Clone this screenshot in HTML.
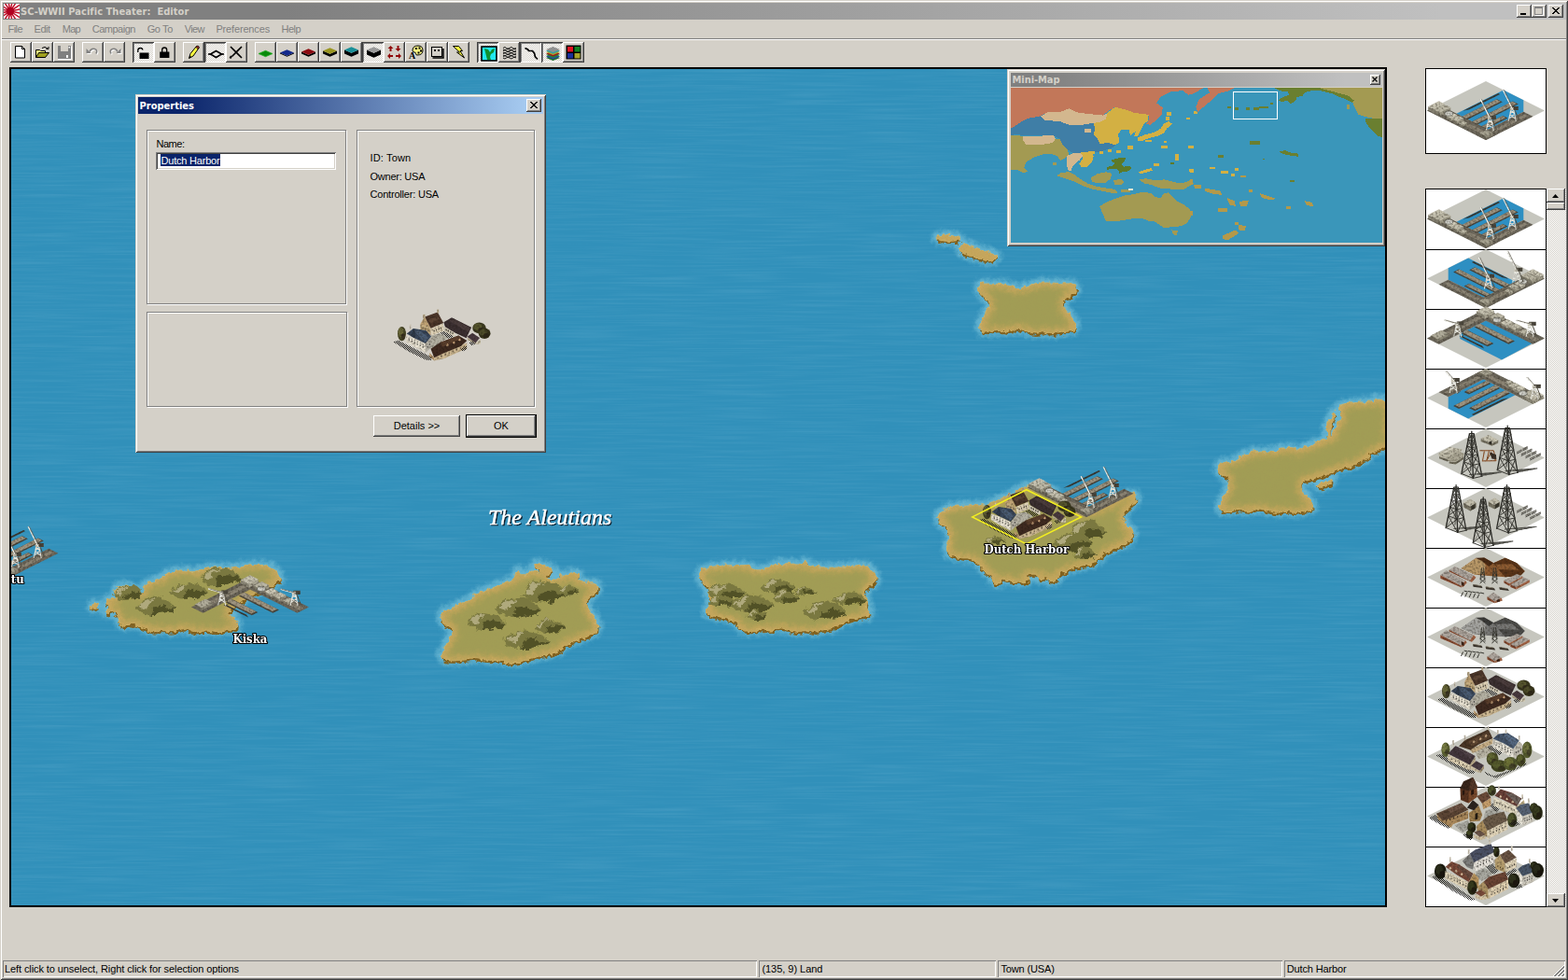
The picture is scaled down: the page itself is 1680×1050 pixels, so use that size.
<!DOCTYPE html><html><head><meta charset="utf-8"><title>SC-WWII Pacific Theater: Editor</title><style>
*{box-sizing:border-box;margin:0;padding:0}
html,body{width:1680px;height:1050px;overflow:hidden;background:#d4d0c8}
body{position:relative;font-family:"Liberation Sans","DejaVu Sans",sans-serif;font-size:11px;color:#000;line-height:13px}
.bd{font-family:"DejaVu Sans Condensed","DejaVu Sans","Liberation Sans",sans-serif;font-weight:bold}
.abs{position:absolute}
.t{position:absolute;white-space:nowrap;line-height:13px;height:13px}
.ui{font-family:"Liberation Sans","DejaVu Sans",sans-serif;font-size:11px}
#titlebar{left:3px;top:3px;width:1675px;height:18px;background:linear-gradient(90deg,#808080 0%,#808080 18%,#c0c0c0 92%,#c0c0c0 100%)}
.cap{color:#d4d0c8}
.btn{position:absolute;background:#d4d0c8;box-shadow:inset -1px -1px 0 #404040,inset 1px 1px 0 #fff,inset -2px -2px 0 #808080}
.tb{position:absolute;top:45px;width:23px;height:22px;background:#d4d0c8;box-shadow:inset -1px -1px 0 #404040,inset 1px 1px 0 #fff,inset -2px -2px 0 #808080}
.tb.dn{background-color:#e9e7e3;background-image:repeating-conic-gradient(#fff 0% 25%,#d4d0c8 0% 50%);background-size:2px 2px;box-shadow:inset 1px 1px 0 #404040,inset -1px -1px 0 #fff,inset 2px 2px 0 #808080}
.tb svg{position:absolute;left:0;top:0}
.sunk{position:absolute;box-shadow:inset 1px 1px 0 #808080,inset -1px -1px 0 #fff}
.etch{position:absolute;border:1px solid #808080;box-shadow:1px 1px 0 #fff,inset 1px 1px 0 #fff}
.menu span{position:absolute;top:25px;color:#808080;white-space:nowrap}
</style></head><body>
<div class="abs" style="left:0;top:0;width:1680px;height:1050px;box-shadow:inset 1px 1px 0 #d4d0c8,inset -1px -1px 0 #404040,inset 2px 2px 0 #fff,inset -2px -2px 0 #808080"></div>
<div id="titlebar" class="abs"></div>
<svg class="abs" style="left:4px;top:4px" width="17" height="16" viewBox="0 0 17 16"><rect width="17" height="16" fill="#fff"/>
<g stroke="#c0102a" stroke-width="1.5"><line x1="7" y1="8" x2="22.7" y2="11.2"/><line x1="7" y1="8" x2="20.3" y2="16.9"/><line x1="7" y1="8" x2="15.8" y2="21.3"/><line x1="7" y1="8" x2="10.1" y2="23.7"/><line x1="7" y1="8" x2="3.8" y2="23.7"/><line x1="7" y1="8" x2="-1.9" y2="21.3"/><line x1="7" y1="8" x2="-6.3" y2="16.8"/><line x1="7" y1="8" x2="-8.7" y2="11.1"/><line x1="7" y1="8" x2="-8.7" y2="4.8"/><line x1="7" y1="8" x2="-6.3" y2="-0.9"/><line x1="7" y1="8" x2="-1.8" y2="-5.3"/><line x1="7" y1="8" x2="3.9" y2="-7.7"/><line x1="7" y1="8" x2="10.2" y2="-7.7"/><line x1="7" y1="8" x2="15.9" y2="-5.3"/><line x1="7" y1="8" x2="20.3" y2="-0.8"/><line x1="7" y1="8" x2="22.7" y2="4.9"/></g><circle cx="7" cy="8" r="4.2" fill="#b00020"/></svg>
<div class="t cap bd" id="wtitle" style="letter-spacing:0.048px;left:22px;top:6px">SC-WWII Pacific Theater:&nbsp; Editor</div>
<div class="btn" style="left:1625px;top:5px;width:16px;height:14px"></div>
<div class="btn" style="left:1641px;top:5px;width:16px;height:14px"></div>
<div class="btn" style="left:1659px;top:5px;width:16px;height:14px"></div>
<div class="abs" style="left:1629px;top:14px;width:6px;height:2px;background:#000"></div>
<div class="abs" style="left:1644px;top:7px;width:9px;height:9px;border:1px solid #808080;border-top-width:2px;box-shadow:1px 1px 0 #fff"></div>
<svg class="abs" style="left:1659px;top:5px" width="16" height="14"><path d="M4 3l7 7M5 3l7 7M11 3l-7 7M12 3l-7 7" stroke="#000" stroke-width="1" fill="none" shape-rendering="crispEdges"/></svg>
<div class="menu">
<span id="m0" style="letter-spacing:-0.559px;left:8.5px">File</span>
<span id="m1" style="letter-spacing:-0.467px;left:36.6px">Edit</span>
<span id="m2" style="letter-spacing:-0.702px;left:66.7px">Map</span>
<span id="m3" style="letter-spacing:-0.480px;left:98.7px">Campaign</span>
<span id="m4" style="letter-spacing:-0.371px;left:157.7px">Go To</span>
<span id="m5" style="letter-spacing:-0.589px;left:197.7px">View</span>
<span id="m6" style="letter-spacing:-0.156px;left:231.4px">Preferences</span>
<span id="m7" style="letter-spacing:-0.531px;left:301.5px">Help</span>
</div>
<div class="abs" style="left:2px;top:41px;width:1676px;height:1px;background:#808080"></div>
<div class="abs" style="left:2px;top:42px;width:1676px;height:1px;background:#fff"></div>
<div class="tb" style="left:11px"><svg width="23" height="22" viewBox="0 0 23 22"><path d="M5.5 4.5h7l3 3v9.5h-10z" fill="#fff" stroke="#000"/><path d="M12.5 4.5v3h3" fill="none" stroke="#000"/></svg></div>
<div class="tb" style="left:34px"><svg width="23" height="22" viewBox="0 0 23 22"><path d="M4.500 8.5h4l1 1h5v7h-10z" fill="#ffff80" stroke="#000" stroke-width="1"/><path d="M4.500 16.5l3-5h11l-4 5z" fill="#a0a020" stroke="#000" stroke-width="1"/><path d="M11 6.500q3-2.500 6 0.500" fill="none" stroke="#000"/><path d="M15.500 7.500h2.500v-2.500" fill="none" stroke="#000"/></svg></div>
<div class="tb" style="left:57px"><svg width="23" height="22" viewBox="0 0 23 22"><rect x="5" y="4" width="14" height="14" fill="#808080"/><rect x="8" y="4" width="8" height="6" fill="#d4d0c8"/><rect x="9" y="13" width="7" height="5" fill="#808080"/><rect x="14" y="14" width="2" height="3" fill="#fff"/><path d="M5 18.500h14.500v-14" stroke="#fff" fill="none"/><rect x="16.500" y="5" width="1.500" height="1.500" fill="#fff"/></svg></div>
<div class="tb" style="left:88px"><svg width="23" height="22" viewBox="0 0 23 22"><g transform="translate(1,1)"><path d="M8 10.5q1.500-4 5.500-3q3.500 1.200 1.500 5" fill="none" stroke="#fff" stroke-width="1.600"/><path d="M4.500 7l5 5h-5z" fill="#fff"/></g><path d="M8 10.5q1.500-4 5.500-3q3.500 1.200 1.500 5" fill="none" stroke="#808080" stroke-width="1.600"/><path d="M4.500 7l5 5h-5z" fill="#808080"/></svg></div>
<div class="tb" style="left:111px"><svg width="23" height="22" viewBox="0 0 23 22"><g transform="translate(1,1)"><path d="M15 10.5q-1.500-4-5.500-3q-3.500 1.200-1.500 5" fill="none" stroke="#fff" stroke-width="1.600"/><path d="M18.500 7l-5 5h5z" fill="#fff"/></g><path d="M15 10.5q-1.500-4-5.500-3q-3.500 1.200-1.500 5" fill="none" stroke="#808080" stroke-width="1.600"/><path d="M18.500 7l-5 5h5z" fill="#808080"/></svg></div>
<div class="tb dn" style="left:142px"><svg style="left:1px;top:1px" width="23" height="22" viewBox="0 0 23 22"><path d="M4.800 10v-2q0-2.500 2.500-2.500t2.500 2" fill="none" stroke="#000" stroke-width="1.300"/><rect x="6.500" y="10.500" width="10" height="6.500" fill="#000"/></svg></div>
<div class="tb" style="left:165px"><svg width="23" height="22" viewBox="0 0 23 22"><path d="M8.700 11v-2.500q0-2.500 2.500-2.500t2.500 2.500v2.500" fill="none" stroke="#000" stroke-width="1.300"/><rect x="6.200" y="10.500" width="10.200" height="6.500" fill="#000"/></svg></div>
<div class="tb" style="left:196px"><svg width="23" height="22" viewBox="0 0 23 22"><path d="M6.500 17.500l1.500-5 6.500-8 2.500 2-6 8.500z" fill="#ffff40" stroke="#000" stroke-width="1"/><path d="M14 5.500l1.500-1.500q1.500 0 2 2l-1.500 1.500z" fill="#a03030" stroke="#000" stroke-width=".8"/><path d="M6.500 17.500l2.500-1.500-1.500-1.500z" fill="#000"/></svg></div>
<div class="tb dn" style="left:219px"><svg style="left:1px;top:1px" width="23" height="22" viewBox="0 0 23 22"><path d="M3 12h3M17 12h3" stroke="#000" stroke-width="1.500"/><path d="M5.500 12l6-3.500 6 3.500-6 3.500z" fill="none" stroke="#000" stroke-width="1.600"/></svg></div>
<div class="tb" style="left:242px"><svg width="23" height="22" viewBox="0 0 23 22"><path d="M5 5l12 12M17 5l-10.500 10.500" stroke="#000" stroke-width="1.600" fill="none"/><path d="M6 15l-1.500 2.500" stroke="#000" stroke-width="2.200"/></svg></div>
<div class="tb" style="left:273px"><svg width="23" height="22" viewBox="0 0 23 22"><path d="M4.0 12.5L11.5 9.3L19.0 12.5L11.5 15.7Z" fill="#0a8a0a" stroke="#28b028" stroke-width="0.8"/></svg></div>
<div class="tb" style="left:296px"><svg width="23" height="22" viewBox="0 0 23 22"><path d="M4.0 11.5L11.5 14.7L19.0 11.5V12.5L11.5 15.7L4.0 12.5Z" fill="#000"/><path d="M4.0 11.5L11.5 8.3L19.0 11.5L11.5 14.7Z" fill="#142a8c"/></svg></div>
<div class="tb" style="left:319px"><svg width="23" height="22" viewBox="0 0 23 22"><path d="M4.0 10.5L11.5 13.7L19.0 10.5V12.5L11.5 15.7L4.0 12.5Z" fill="#000"/><path d="M4.0 10.5L11.5 7.3L19.0 10.5L11.5 13.7Z" fill="#8c0c12"/></svg></div>
<div class="tb" style="left:342px"><svg width="23" height="22" viewBox="0 0 23 22"><path d="M4.0 9.5L11.5 12.7L19.0 9.5V12.5L11.5 15.7L4.0 12.5Z" fill="#000"/><path d="M4.0 9.5L11.5 6.3L19.0 9.5L11.5 12.7Z" fill="#9a9620"/></svg></div>
<div class="tb" style="left:365px"><svg width="23" height="22" viewBox="0 0 23 22"><path d="M4.0 8.5L11.5 11.7L19.0 8.5V12.5L11.5 15.7L4.0 12.5Z" fill="#000"/><path d="M4.0 8.5L11.5 5.3L19.0 8.5L11.5 11.7Z" fill="#1a9098"/></svg></div>
<div class="tb dn" style="left:388px"><svg style="left:1px;top:1px" width="23" height="22" viewBox="0 0 23 22"><path d="M4.0 7.5L11.5 10.7L19.0 7.5V12.5L11.5 15.7L4.0 12.5Z" fill="#000"/><path d="M4.0 7.5L11.5 4.3L19.0 7.5L11.5 10.7Z" fill="#9a9a9a"/></svg></div>
<div class="tb" style="left:411px"><svg width="23" height="22" viewBox="0 0 23 22"><g fill="#900a0a"><path d="M7.500 4l3 3h-2v3h-2v-3h-2z"/><path d="M15.500 10l3-3h-2v-3h-2v3h-2z"/><path d="M4 15l3-3v2h3v2h-3v2z"/><path d="M19 15l-3-3v2h-3v2h3v2z"/></g></svg></div>
<div class="tb" style="left:434px"><svg width="23" height="22" viewBox="0 0 23 22"><path d="M8 9q0-5 6-5q5 0 5 5q0 5-6 5q-1.500 0-1.500-1.500q0-1.500-1.500-1.500q-2 0-2-2z" fill="#f4f080" stroke="#000" stroke-width="1"/><g fill="#000"><rect x="11" y="6" width="2" height="2"/><rect x="14.500" y="5.500" width="2" height="2"/><rect x="16" y="8.500" width="2" height="2"/><rect x="13.500" y="10.500" width="2" height="2"/></g><text x="4" y="18" font-family="Liberation Serif,serif" font-weight="bold" font-size="10" fill="#000">A</text></svg></div>
<div class="tb" style="left:457px"><svg width="23" height="22" viewBox="0 0 23 22"><rect x="5.500" y="5.500" width="11" height="10" fill="#d4d0c8" stroke="#000"/><path d="M6.500 17h11.500v-10" fill="none" stroke="#000" stroke-width="1.500"/><path d="M8 8l2 2m0-2l-2 2M12 8l2 2m0-2l-2 2" stroke="#000" stroke-width=".9"/></svg></div>
<div class="tb" style="left:480px"><svg width="23" height="22" viewBox="0 0 23 22"><path d="M5.500 4.500h6l4 5h-2.500l4.500 7.500-8-6h3z" fill="#ffff40" stroke="#000" stroke-width="1"/></svg></div>
<div class="tb dn" style="left:511px"><svg style="left:1px;top:1px" width="23" height="22" viewBox="0 0 23 22"><rect x="4" y="4" width="16" height="15" fill="#20e8f0" stroke="#000" stroke-width="1.600"/><path d="M7 6l4 1 2 3 2-3 3-1-1 4-3 2-1 3 1 3h-4l-1-4-1-4z" fill="#109030"/></svg></div>
<div class="tb" style="left:534px"><svg width="23" height="22" viewBox="0 0 23 22"><g fill="none" stroke="#000" stroke-width=".9"><path d="M5 6.500q2-2 3.500 0t3.500 0 3.500 0 3.500 0M5 9.500q2-2 3.500 0t3.500 0 3.500 0 3.500 0M5 12.500q2-2 3.500 0t3.500 0 3.500 0 3.500 0M5 15.500q2-2 3.500 0t3.500 0 3.500 0 3.500 0M5 8q2 2 3.500 0t3.500 0 3.500 0 3.500 0M5 11q2 2 3.500 0t3.500 0 3.500 0 3.500 0M5 14q2 2 3.500 0t3.500 0 3.500 0 3.500 0M5 17q2 2 3.500 0t3.500 0 3.500 0 3.500 0"/></g></svg></div>
<div class="tb dn" style="left:557px"><svg style="left:1px;top:1px" width="23" height="22" viewBox="0 0 23 22"><path d="M4.500 5.500l3 1.500 1 1.500h4l2 2.500 1 4 2.500 2.500" fill="none" stroke="#000" stroke-width="1.700"/></svg></div>
<div class="tb dn" style="left:580px"><svg style="left:1px;top:1px" width="23" height="22" viewBox="0 0 23 22"><path d="M4 16l7.500-3 7.500 3-7.500 3z" fill="#207028"/><path d="M4 14.5l7.500-3 7.500 3-7.500 3z" fill="#2848a0"/><path d="M4 13l7.500-3 7.500 3-7.500 3z" fill="#208838"/><path d="M4 11.5l7.500-3 7.500 3-7.500 3z" fill="#a01818"/><path d="M4 10l7.500-3 7.500 3-7.500 3z" fill="#a8a030"/><path d="M4 8.5l7.500-3 7.500 3-7.500 3z" fill="#30a0a8"/><path d="M4 7l7.500-3 7.500 3-7.500 3z" fill="#909090"/></svg></div>
<div class="tb" style="left:603px"><svg width="23" height="22" viewBox="0 0 23 22"><rect x="3.500" y="3.500" width="16" height="15" fill="#000"/><rect x="5" y="5" width="6" height="5.500" fill="#e01020"/><rect x="12.500" y="5" width="6" height="5.500" fill="#108020"/><rect x="5" y="12" width="6" height="5.500" fill="#1a2f9a"/><rect x="12.500" y="12" width="6" height="5.500" fill="#a8a428"/></svg></div>
<div class="abs" style="left:10px;top:72px;width:1476px;height:900px;background:#000"></div>
<svg class="abs" style="left:12px;top:74px" width="1472" height="896" viewBox="12 74 1472 896">
<defs>
<filter id="fo" x="0" y="0" width="100%" height="100%"><feTurbulence type="fractalNoise" baseFrequency="0.012 0.45" numOctaves="2" seed="7"/><feColorMatrix values="0 0 0 0 .75  0 0 0 0 .9  0 0 0 0 1  1.2 1.2 0 0 -1.0"/></filter>
<filter id="fo2" x="0" y="0" width="100%" height="100%"><feTurbulence type="fractalNoise" baseFrequency="0.015 0.5" numOctaves="2" seed="23"/><feColorMatrix values="0 0 0 0 .05  0 0 0 0 .3  0 0 0 0 .5  1.2 1.2 0 0 -1.0"/></filter>
<filter id="halo" x="-20%" y="-20%" width="140%" height="140%"><feGaussianBlur stdDeviation="2.4"/></filter>
<filter id="inner" x="-10%" y="-10%" width="120%" height="120%"><feMorphology operator="erode" radius="4"/><feGaussianBlur stdDeviation="3.2"/></filter>
<filter id="grain" x="0" y="0" width="100%" height="100%"><feTurbulence type="fractalNoise" baseFrequency="0.7 0.9" numOctaves="2" seed="3" result="n"/><feColorMatrix in="n" values="0 0 0 0 0.35  0 0 0 0 0.28  0 0 0 0 0.1  0 0 0 .9 -.38" result="g"/><feComposite in="g" in2="SourceGraphic" operator="in"/></filter>
<filter id="rag" filterUnits="userSpaceOnUse" x="12" y="74" width="1472" height="896"><feTurbulence type="fractalNoise" baseFrequency="0.2" numOctaves="2" seed="4" result="t"/><feDisplacementMap in="SourceGraphic" in2="t" scale="6.5" xChannelSelector="R" yChannelSelector="G"/></filter>
<filter id="hb" x="-30%" y="-30%" width="160%" height="160%"><feGaussianBlur stdDeviation="1.3"/></filter>
<filter id="hrough" x="-20%" y="-20%" width="140%" height="140%"><feTurbulence type="fractalNoise" baseFrequency="0.09" numOctaves="2" seed="11" result="t"/><feDisplacementMap in="SourceGraphic" in2="t" scale="6"/><feGaussianBlur stdDeviation=".55"/></filter>
</defs>
<rect x="12" y="74" width="1472" height="896" fill="#3190ba"/>
<rect x="12" y="74" width="1472" height="896" filter="url(#fo)" opacity=".09"/>
<rect x="12" y="74" width="1472" height="896" filter="url(#fo2)" opacity=".09"/>
<g filter="url(#rag)">
<g filter="url(#halo)" fill="#86cbe0" stroke="#86cbe0" stroke-width="9.5" stroke-linejoin="round" opacity=".62">
<path d="M113.3 645.0C113.4 643.3 115.8 642.7 117.9 641.9C120.0 641.1 124.0 642.0 124.9 640.4C125.8 638.8 121.5 635.8 122.6 633.4C123.7 631.0 127.6 627.9 131.1 627.2C134.6 626.5 138.5 627.9 141.9 629.5C145.3 631.1 147.3 635.0 149.6 635.7C151.9 636.4 153.2 635.2 154.3 633.4C155.4 631.6 153.3 627.8 155.8 625.7C158.3 623.6 163.9 623.8 168.2 621.8C172.5 619.8 174.2 616.8 179.0 614.8C183.8 612.8 189.1 611.4 194.5 611.0C199.9 610.6 203.1 613.1 208.5 612.5C213.9 611.9 217.7 608.6 223.9 607.9C230.1 607.2 235.4 608.9 242.5 608.6C249.6 608.3 255.5 606.9 262.6 606.3C269.7 605.7 275.8 605.1 281.2 605.5C286.6 605.9 288.9 606.7 292.0 608.6C295.1 610.5 296.8 613.2 298.2 615.6C299.6 618.0 300.6 619.8 299.8 621.8C299.0 623.8 296.7 624.7 293.6 626.4C290.5 628.1 287.0 629.1 282.7 631.1C278.4 633.1 274.9 634.8 270.4 637.3C265.9 639.8 262.8 641.3 258.0 645.0C253.2 648.7 245.1 654.3 244.0 657.4C242.9 660.5 249.9 659.2 251.8 662.0C253.7 664.8 255.5 670.5 254.1 672.9C252.7 675.3 247.8 674.4 244.0 675.2C240.2 676.0 237.7 677.4 233.2 677.5C228.7 677.6 223.8 676.0 219.3 676.0C214.8 676.0 212.5 677.9 208.5 677.5C204.5 677.1 201.9 673.7 197.6 673.6C193.3 673.5 190.0 676.4 185.2 676.7C180.4 677.0 175.3 675.2 171.3 675.2C167.3 675.2 167.3 677.3 163.6 676.7C159.9 676.1 155.2 673.7 151.2 672.1C147.2 670.5 145.3 668.3 141.9 668.2C138.5 668.1 135.1 671.6 132.6 671.3C130.1 671.0 129.1 668.7 128.0 666.7C126.9 664.7 127.8 662.8 126.4 660.5C125.0 658.2 122.0 654.9 120.2 654.3C118.4 653.7 117.7 657.1 116.4 657.4C115.1 657.7 113.2 656.9 113.3 655.8C113.4 654.7 117.1 653.2 117.1 651.2C117.1 649.2 113.2 646.7 113.3 645.0Z"/>
<path d="M97.8 648.9C97.9 648.0 99.1 647.2 100.1 646.9C101.1 646.6 102.4 646.8 103.2 647.3C104.0 647.8 104.6 648.7 104.5 649.6C104.4 650.5 103.4 651.6 102.4 652.0C101.4 652.4 100.1 652.6 99.3 652.0C98.5 651.4 97.7 649.8 97.8 648.9Z"/>
<path d="M472.9 660.0C473.2 658.0 472.7 656.6 475.0 655.0C477.3 653.4 482.4 652.8 485.7 651.4C489.0 650.0 489.5 648.9 492.9 647.1C496.3 645.3 500.6 643.6 504.3 641.4C508.0 639.2 508.7 637.1 512.9 635.0C517.1 632.9 521.9 632.0 527.1 630.0C532.3 628.0 537.2 626.0 541.4 624.3C545.6 622.6 547.9 622.8 550.0 620.7C552.1 618.6 551.9 614.7 552.9 612.9C553.9 611.1 554.4 610.1 555.7 610.7C557.0 611.3 557.4 616.1 560.0 616.4C562.6 616.7 566.6 612.6 570.0 612.1C573.4 611.6 578.1 614.8 578.6 613.6C579.1 612.4 573.4 607.5 572.9 605.7C572.4 603.9 573.6 603.5 575.7 603.6C577.8 603.7 581.7 605.6 584.3 606.4C586.9 607.2 588.8 606.6 590.0 607.9C591.2 609.2 591.5 611.9 590.7 613.6C589.9 615.3 586.0 615.7 585.7 617.1C585.4 618.5 586.7 620.9 589.3 621.4C591.9 621.9 598.2 621.2 600.0 620.0C601.8 618.8 598.8 615.5 599.3 615.0C599.8 614.5 601.2 616.8 602.9 617.1C604.6 617.4 606.5 617.0 608.6 616.4C610.7 615.8 612.3 614.0 614.3 613.6C616.3 613.2 618.3 612.9 619.3 614.3C620.3 615.7 618.3 619.6 620.0 621.4C621.7 623.2 625.1 623.5 628.6 624.3C632.1 625.1 637.2 624.1 639.3 625.7C641.4 627.3 640.9 630.8 640.0 632.9C639.1 635.0 636.4 635.0 634.3 637.1C632.2 639.2 629.4 641.7 628.6 644.3C627.8 646.9 629.0 648.9 630.0 651.4C631.0 653.9 632.5 654.7 634.3 657.9C636.1 661.1 639.2 665.1 640.0 668.6C640.8 672.1 641.0 674.5 638.6 677.1C636.2 679.7 631.0 681.2 627.1 682.9C623.2 684.6 621.0 684.8 617.1 686.4C613.2 688.0 608.8 689.4 605.7 691.4C602.6 693.4 603.4 695.3 600.0 697.1C596.6 698.9 592.1 700.1 587.1 701.4C582.1 702.7 577.6 703.1 572.9 704.3C568.2 705.5 565.6 706.7 561.4 707.9C557.2 709.1 554.7 710.7 550.0 710.7C545.3 710.7 540.9 708.6 535.7 707.9C530.5 707.2 526.1 707.5 521.4 707.1C516.7 706.7 514.5 705.7 510.0 705.7C505.5 705.7 501.8 706.7 497.1 707.1C492.4 707.5 488.2 708.0 484.3 707.9C480.4 707.8 477.8 707.6 475.7 706.4C473.6 705.2 472.6 703.9 472.9 701.4C473.2 698.9 475.5 696.0 477.1 692.9C478.7 689.8 479.8 687.5 481.4 684.3C483.0 681.1 486.2 678.3 485.7 675.7C485.2 673.1 480.8 671.8 478.6 670.0C476.4 668.2 474.6 667.5 473.6 665.7C472.6 663.9 472.6 662.0 472.9 660.0Z"/>
<path d="M749.3 617.1C749.6 615.0 749.9 611.8 752.9 610.0C755.9 608.2 759.9 607.9 765.7 607.1C771.5 606.3 777.5 605.8 784.3 605.7C791.1 605.6 798.2 605.5 802.9 606.4C807.6 607.3 806.6 610.2 810.0 610.7C813.4 611.2 817.7 610.3 821.4 609.3C825.1 608.3 827.5 606.2 830.0 605.0C832.5 603.8 833.8 602.6 835.0 602.9C836.2 603.2 834.7 606.3 836.4 606.4C838.1 606.5 840.8 603.9 844.3 603.6C847.8 603.3 852.2 605.4 855.7 605.0C859.2 604.6 861.6 601.1 863.6 601.4C865.6 601.7 863.4 605.2 866.4 606.4C869.4 607.6 873.6 607.6 880.0 607.9C886.4 608.2 894.1 608.3 901.4 607.9C908.7 607.5 914.5 605.7 920.0 605.7C925.5 605.7 928.5 606.3 931.4 607.9C934.3 609.5 934.3 612.3 935.7 614.3C937.1 616.3 939.2 616.5 939.3 618.6C939.4 620.7 938.4 623.5 936.4 625.7C934.4 627.9 930.4 628.6 928.6 630.7C926.8 632.8 926.3 634.6 926.4 637.1C926.5 639.6 928.9 641.7 929.3 644.3C929.7 646.9 928.1 649.3 928.6 651.4C929.1 653.5 931.8 654.1 932.1 655.7C932.4 657.3 932.5 658.8 930.0 660.0C927.5 661.2 922.5 661.3 918.6 662.1C914.7 662.9 912.3 663.0 908.6 664.3C904.9 665.6 901.8 667.6 898.6 669.3C895.4 671.0 894.8 672.6 891.4 673.6C888.0 674.6 883.7 674.2 880.0 675.0C876.3 675.8 874.5 677.8 871.4 677.9C868.3 678.0 866.0 675.8 862.9 675.7C859.8 675.6 857.7 677.2 854.3 677.1C850.9 677.0 847.7 675.8 844.3 675.0C840.9 674.2 838.9 672.9 835.7 672.9C832.5 672.9 830.8 674.7 827.1 675.0C823.4 675.3 819.9 674.0 815.7 674.3C811.5 674.6 808.2 676.4 804.3 676.4C800.4 676.4 796.9 675.7 794.3 674.3C791.7 672.9 792.1 670.4 790.0 668.6C787.9 666.8 786.6 665.6 782.9 664.3C779.2 663.0 774.5 662.6 770.0 661.4C765.5 660.2 761.0 659.5 758.6 657.9C756.2 656.3 756.6 654.9 757.1 652.9C757.6 650.9 760.9 649.5 761.4 647.1C761.9 644.7 760.6 642.1 760.0 640.0C759.4 637.9 757.8 637.5 757.9 635.7C758.0 633.9 761.4 631.7 760.7 630.0C760.0 628.3 756.0 628.0 754.3 626.4C752.6 624.8 752.3 623.1 751.4 621.4C750.5 619.7 749.0 619.2 749.3 617.1Z"/>
<path d="M1005.2 553.1C1006.0 551.4 1007.0 548.8 1009.8 547.0C1012.6 545.2 1015.2 544.3 1020.5 543.2C1025.8 542.1 1032.4 541.3 1038.8 540.9C1045.2 540.5 1051.0 541.3 1055.5 540.9C1060.0 540.5 1057.8 540.9 1063.1 538.7C1068.4 536.5 1077.2 532.2 1084.5 528.8C1091.8 525.4 1094.9 520.5 1102.7 519.9C1110.5 519.3 1119.8 522.4 1127.1 525.7C1134.4 529.0 1136.7 533.7 1142.3 537.9C1147.9 542.1 1150.6 547.5 1157.6 548.6C1164.6 549.7 1172.0 547.4 1180.4 544.0C1188.8 540.6 1196.9 533.1 1203.3 530.3C1209.7 527.5 1213.1 527.4 1215.5 528.8C1217.9 530.2 1217.3 535.1 1216.2 537.9C1215.1 540.7 1211.8 541.5 1209.4 544.0C1207.0 546.5 1203.9 548.2 1203.3 551.6C1202.7 555.0 1204.4 558.9 1206.3 562.3C1208.2 565.7 1213.1 566.8 1213.9 569.9C1214.7 573.0 1213.4 576.2 1210.9 579.0C1208.4 581.8 1204.1 583.1 1200.2 585.1C1196.3 587.1 1193.2 587.7 1189.6 589.7C1186.0 591.7 1183.5 593.3 1180.4 595.8C1177.3 598.3 1177.0 601.5 1172.8 603.4C1168.6 605.3 1162.6 605.0 1157.6 606.4C1152.6 607.8 1149.6 609.3 1145.4 611.0C1141.2 612.7 1137.2 613.5 1134.7 615.6C1132.2 617.7 1133.6 621.0 1131.7 622.4C1129.8 623.8 1126.1 623.9 1124.1 623.2C1122.1 622.5 1123.0 619.0 1121.0 618.6C1119.0 618.2 1115.3 621.4 1113.4 620.9C1111.5 620.4 1112.9 616.4 1110.4 615.6C1107.9 614.8 1101.1 615.1 1099.7 616.3C1098.3 617.5 1104.9 621.0 1102.7 622.4C1100.5 623.8 1092.5 624.4 1087.5 624.0C1082.5 623.6 1078.4 620.1 1075.3 620.2C1072.2 620.3 1072.7 624.0 1070.7 624.7C1068.7 625.4 1066.3 625.4 1064.6 624.0C1062.9 622.6 1063.5 619.5 1061.6 617.1C1059.7 614.7 1056.5 613.5 1054.0 611.0C1051.5 608.5 1050.4 605.6 1047.9 603.4C1045.4 601.2 1043.9 599.9 1040.3 598.8C1036.7 597.7 1032.3 598.1 1028.1 597.3C1023.9 596.5 1019.9 596.3 1017.4 594.3C1014.9 592.3 1014.4 589.7 1014.4 586.6C1014.4 583.5 1017.1 580.8 1017.4 577.5C1017.7 574.2 1017.3 571.2 1015.9 568.4C1014.5 565.6 1011.8 564.5 1009.8 562.3C1007.8 560.1 1006.0 557.9 1005.2 556.2C1004.4 554.5 1004.4 554.8 1005.2 553.1Z"/>
<path d="M1048.7 307.0C1049.3 305.5 1049.8 304.8 1052.7 304.3C1055.6 303.8 1060.6 304.2 1064.7 304.3C1068.8 304.4 1071.4 304.4 1075.3 305.0C1079.2 305.6 1082.8 306.8 1086.0 307.7C1089.2 308.6 1090.3 309.8 1092.7 309.7C1095.1 309.6 1096.1 308.1 1099.3 307.0C1102.5 305.9 1105.6 304.4 1110.0 303.7C1114.4 303.0 1118.4 303.0 1123.3 303.0C1128.2 303.0 1131.6 303.3 1136.7 303.7C1141.8 304.1 1148.5 303.4 1151.3 305.0C1154.1 306.6 1152.7 310.1 1152.0 312.3C1151.3 314.5 1149.1 315.5 1147.3 317.0C1145.5 318.5 1143.5 318.6 1142.0 320.3C1140.5 322.0 1139.3 324.1 1139.3 326.3C1139.3 328.5 1140.5 330.0 1142.0 332.3C1143.5 334.6 1145.6 336.5 1147.3 339.0C1149.0 341.5 1150.7 343.0 1151.3 345.7C1151.9 348.4 1152.2 352.0 1150.7 353.7C1149.2 355.4 1146.4 354.6 1143.3 355.0C1140.2 355.4 1137.2 355.2 1134.0 355.7C1130.8 356.2 1128.9 357.7 1126.0 357.7C1123.1 357.7 1120.9 355.8 1118.0 355.7C1115.1 355.6 1113.2 357.0 1110.0 357.0C1106.8 357.0 1103.6 356.4 1100.7 355.7C1097.8 355.0 1096.2 353.6 1094.0 353.0C1091.8 352.4 1090.9 351.9 1088.7 352.3C1086.5 352.7 1084.7 354.6 1082.0 355.0C1079.3 355.4 1077.2 354.3 1074.0 354.3C1070.8 354.3 1067.9 354.6 1064.7 355.0C1061.5 355.4 1059.3 356.5 1056.7 356.3C1054.1 356.1 1051.9 355.4 1050.7 353.7C1049.5 352.0 1049.4 349.5 1050.0 347.0C1050.6 344.5 1052.8 342.7 1054.0 340.3C1055.2 337.9 1055.5 336.1 1056.7 333.7C1057.9 331.3 1060.5 329.2 1060.7 327.0C1060.9 324.8 1059.5 323.7 1058.0 321.7C1056.5 319.7 1054.3 318.0 1052.7 316.3C1051.1 314.6 1050.0 314.0 1049.3 312.3C1048.6 310.6 1048.1 308.5 1048.7 307.0Z"/>
<path d="M1003.3 254.3C1003.6 253.3 1006.2 252.5 1008.7 252.1C1011.2 251.7 1013.8 252.0 1016.7 252.3C1019.6 252.6 1022.5 253.0 1024.7 253.7C1026.9 254.4 1029.0 255.3 1028.7 256.1C1028.4 256.9 1025.8 257.5 1023.3 257.9C1020.8 258.3 1018.2 258.4 1015.3 258.3C1012.4 258.2 1009.5 258.1 1007.3 257.4C1005.1 256.7 1003.0 255.3 1003.3 254.3Z"/>
<path d="M1028.7 263.7C1029.7 262.7 1031.3 261.5 1034.0 261.7C1036.7 261.9 1039.6 263.8 1043.3 265.0C1047.0 266.2 1050.1 267.1 1054.0 268.3C1057.9 269.5 1062.1 270.6 1064.7 271.7C1067.3 272.8 1067.8 273.3 1068.0 274.3C1068.2 275.3 1067.3 276.0 1066.0 277.0C1064.7 278.0 1063.6 279.6 1060.7 279.7C1057.8 279.8 1053.9 278.7 1050.0 277.7C1046.1 276.7 1042.7 275.5 1039.3 274.3C1035.9 273.1 1033.2 272.3 1031.3 271.0C1029.4 269.7 1029.2 268.3 1028.7 267.0C1028.2 265.7 1027.7 264.7 1028.7 263.7Z"/>
<path d="M1305.0 501.4C1305.3 499.0 1306.7 497.1 1310.0 495.7C1313.3 494.3 1319.0 495.0 1322.9 493.6C1326.8 492.2 1327.5 489.7 1331.4 487.9C1335.3 486.1 1340.4 484.3 1344.3 483.6C1348.2 482.9 1349.2 484.3 1352.9 484.3C1356.6 484.3 1360.1 484.4 1364.3 483.6C1368.5 482.8 1371.8 480.7 1375.7 480.0C1379.6 479.3 1383.1 479.5 1385.7 480.0C1388.3 480.5 1387.6 483.2 1390.0 482.9C1392.4 482.6 1394.7 480.2 1398.6 478.6C1402.5 477.0 1407.2 475.9 1411.4 474.3C1415.6 472.7 1418.5 471.4 1421.4 470.0C1424.3 468.6 1425.4 468.5 1427.1 466.4C1428.8 464.3 1429.6 461.1 1430.7 458.6C1431.8 456.1 1431.7 454.7 1432.9 452.9C1434.1 451.1 1436.6 450.7 1437.1 448.6C1437.6 446.5 1436.1 443.8 1435.7 441.4C1435.3 439.0 1434.2 437.3 1435.0 435.7C1435.8 434.1 1436.5 433.7 1440.0 432.9C1443.5 432.1 1449.1 431.9 1454.3 431.4C1459.5 430.9 1464.7 430.8 1468.6 430.0C1472.5 429.2 1473.4 427.4 1475.7 427.1C1478.0 426.8 1479.8 427.8 1481.4 428.6C1483.0 429.4 1483.3 430.9 1484.3 431.4C1485.3 431.9 1486.6 423.0 1487.1 431.4C1487.6 439.8 1487.6 468.4 1487.1 477.1C1486.6 485.8 1486.4 477.5 1484.3 478.6C1482.2 479.7 1478.6 481.6 1475.7 482.9C1472.8 484.2 1470.7 484.1 1468.6 485.7C1466.5 487.3 1466.1 489.8 1464.3 491.4C1462.5 493.0 1461.2 493.0 1458.6 494.3C1456.0 495.6 1453.7 497.3 1450.0 498.6C1446.3 499.9 1442.8 500.1 1438.6 501.4C1434.4 502.7 1431.3 504.1 1427.1 505.7C1422.9 507.3 1419.4 508.7 1415.7 510.0C1412.0 511.3 1410.8 511.7 1407.1 512.9C1403.4 514.1 1398.0 514.6 1395.7 516.4C1393.4 518.2 1393.8 520.4 1394.3 522.9C1394.8 525.4 1396.8 527.7 1398.6 530.0C1400.4 532.3 1403.0 532.8 1404.3 535.7C1405.6 538.6 1407.3 543.5 1405.7 545.7C1404.1 547.9 1399.6 547.2 1395.7 547.9C1391.8 548.6 1388.0 549.3 1384.3 549.3C1380.6 549.3 1378.9 547.9 1375.7 547.9C1372.5 547.9 1370.5 549.4 1367.1 549.3C1363.7 549.2 1360.8 547.9 1357.1 547.1C1353.4 546.3 1350.8 544.9 1347.1 545.0C1343.4 545.1 1340.8 547.6 1337.1 547.9C1333.4 548.2 1331.0 546.4 1327.1 546.4C1323.2 546.4 1319.4 548.0 1315.7 547.9C1312.0 547.8 1308.4 547.7 1307.1 545.7C1305.8 543.7 1307.5 540.2 1308.6 537.1C1309.7 534.0 1311.3 531.7 1312.9 528.6C1314.5 525.5 1316.6 522.9 1317.1 520.0C1317.6 517.1 1317.3 515.0 1315.7 512.9C1314.1 510.8 1310.6 510.7 1308.6 508.6C1306.6 506.5 1304.7 503.8 1305.0 501.4Z"/>
<path d="M1422.9 466.4C1422.3 464.3 1421.2 459.0 1421.7 455.7C1422.2 452.4 1423.9 451.4 1425.4 448.6C1426.9 445.8 1428.7 441.1 1429.7 440.3C1430.7 439.5 1431.5 442.0 1431.1 444.3C1430.7 446.6 1428.5 450.0 1427.4 452.9C1426.3 455.8 1425.5 457.3 1425.1 460.0C1424.7 462.7 1425.5 466.2 1425.1 467.4C1424.7 468.6 1423.5 468.5 1422.9 466.4Z"/>
<path d="M1411.4 519.3C1412.2 518.5 1416.0 518.7 1418.6 517.9C1421.2 517.1 1424.1 515.0 1425.7 514.7C1427.3 514.4 1428.2 515.4 1427.4 516.4C1426.6 517.4 1423.8 519.2 1421.4 520.3C1419.0 521.4 1416.1 522.5 1414.3 522.3C1412.5 522.1 1410.6 520.1 1411.4 519.3Z"/>
</g>
<g fill="#80601f" stroke="#80601f" stroke-width="1" transform="translate(0.6,2.4)">
<path d="M113.3 645.0C113.4 643.3 115.8 642.7 117.9 641.9C120.0 641.1 124.0 642.0 124.9 640.4C125.8 638.8 121.5 635.8 122.6 633.4C123.7 631.0 127.6 627.9 131.1 627.2C134.6 626.5 138.5 627.9 141.9 629.5C145.3 631.1 147.3 635.0 149.6 635.7C151.9 636.4 153.2 635.2 154.3 633.4C155.4 631.6 153.3 627.8 155.8 625.7C158.3 623.6 163.9 623.8 168.2 621.8C172.5 619.8 174.2 616.8 179.0 614.8C183.8 612.8 189.1 611.4 194.5 611.0C199.9 610.6 203.1 613.1 208.5 612.5C213.9 611.9 217.7 608.6 223.9 607.9C230.1 607.2 235.4 608.9 242.5 608.6C249.6 608.3 255.5 606.9 262.6 606.3C269.7 605.7 275.8 605.1 281.2 605.5C286.6 605.9 288.9 606.7 292.0 608.6C295.1 610.5 296.8 613.2 298.2 615.6C299.6 618.0 300.6 619.8 299.8 621.8C299.0 623.8 296.7 624.7 293.6 626.4C290.5 628.1 287.0 629.1 282.7 631.1C278.4 633.1 274.9 634.8 270.4 637.3C265.9 639.8 262.8 641.3 258.0 645.0C253.2 648.7 245.1 654.3 244.0 657.4C242.9 660.5 249.9 659.2 251.8 662.0C253.7 664.8 255.5 670.5 254.1 672.9C252.7 675.3 247.8 674.4 244.0 675.2C240.2 676.0 237.7 677.4 233.2 677.5C228.7 677.6 223.8 676.0 219.3 676.0C214.8 676.0 212.5 677.9 208.5 677.5C204.5 677.1 201.9 673.7 197.6 673.6C193.3 673.5 190.0 676.4 185.2 676.7C180.4 677.0 175.3 675.2 171.3 675.2C167.3 675.2 167.3 677.3 163.6 676.7C159.9 676.1 155.2 673.7 151.2 672.1C147.2 670.5 145.3 668.3 141.9 668.2C138.5 668.1 135.1 671.6 132.6 671.3C130.1 671.0 129.1 668.7 128.0 666.7C126.9 664.7 127.8 662.8 126.4 660.5C125.0 658.2 122.0 654.9 120.2 654.3C118.4 653.7 117.7 657.1 116.4 657.4C115.1 657.7 113.2 656.9 113.3 655.8C113.4 654.7 117.1 653.2 117.1 651.2C117.1 649.2 113.2 646.7 113.3 645.0Z"/>
<path d="M97.8 648.9C97.9 648.0 99.1 647.2 100.1 646.9C101.1 646.6 102.4 646.8 103.2 647.3C104.0 647.8 104.6 648.7 104.5 649.6C104.4 650.5 103.4 651.6 102.4 652.0C101.4 652.4 100.1 652.6 99.3 652.0C98.5 651.4 97.7 649.8 97.8 648.9Z"/>
<path d="M472.9 660.0C473.2 658.0 472.7 656.6 475.0 655.0C477.3 653.4 482.4 652.8 485.7 651.4C489.0 650.0 489.5 648.9 492.9 647.1C496.3 645.3 500.6 643.6 504.3 641.4C508.0 639.2 508.7 637.1 512.9 635.0C517.1 632.9 521.9 632.0 527.1 630.0C532.3 628.0 537.2 626.0 541.4 624.3C545.6 622.6 547.9 622.8 550.0 620.7C552.1 618.6 551.9 614.7 552.9 612.9C553.9 611.1 554.4 610.1 555.7 610.7C557.0 611.3 557.4 616.1 560.0 616.4C562.6 616.7 566.6 612.6 570.0 612.1C573.4 611.6 578.1 614.8 578.6 613.6C579.1 612.4 573.4 607.5 572.9 605.7C572.4 603.9 573.6 603.5 575.7 603.6C577.8 603.7 581.7 605.6 584.3 606.4C586.9 607.2 588.8 606.6 590.0 607.9C591.2 609.2 591.5 611.9 590.7 613.6C589.9 615.3 586.0 615.7 585.7 617.1C585.4 618.5 586.7 620.9 589.3 621.4C591.9 621.9 598.2 621.2 600.0 620.0C601.8 618.8 598.8 615.5 599.3 615.0C599.8 614.5 601.2 616.8 602.9 617.1C604.6 617.4 606.5 617.0 608.6 616.4C610.7 615.8 612.3 614.0 614.3 613.6C616.3 613.2 618.3 612.9 619.3 614.3C620.3 615.7 618.3 619.6 620.0 621.4C621.7 623.2 625.1 623.5 628.6 624.3C632.1 625.1 637.2 624.1 639.3 625.7C641.4 627.3 640.9 630.8 640.0 632.9C639.1 635.0 636.4 635.0 634.3 637.1C632.2 639.2 629.4 641.7 628.6 644.3C627.8 646.9 629.0 648.9 630.0 651.4C631.0 653.9 632.5 654.7 634.3 657.9C636.1 661.1 639.2 665.1 640.0 668.6C640.8 672.1 641.0 674.5 638.6 677.1C636.2 679.7 631.0 681.2 627.1 682.9C623.2 684.6 621.0 684.8 617.1 686.4C613.2 688.0 608.8 689.4 605.7 691.4C602.6 693.4 603.4 695.3 600.0 697.1C596.6 698.9 592.1 700.1 587.1 701.4C582.1 702.7 577.6 703.1 572.9 704.3C568.2 705.5 565.6 706.7 561.4 707.9C557.2 709.1 554.7 710.7 550.0 710.7C545.3 710.7 540.9 708.6 535.7 707.9C530.5 707.2 526.1 707.5 521.4 707.1C516.7 706.7 514.5 705.7 510.0 705.7C505.5 705.7 501.8 706.7 497.1 707.1C492.4 707.5 488.2 708.0 484.3 707.9C480.4 707.8 477.8 707.6 475.7 706.4C473.6 705.2 472.6 703.9 472.9 701.4C473.2 698.9 475.5 696.0 477.1 692.9C478.7 689.8 479.8 687.5 481.4 684.3C483.0 681.1 486.2 678.3 485.7 675.7C485.2 673.1 480.8 671.8 478.6 670.0C476.4 668.2 474.6 667.5 473.6 665.7C472.6 663.9 472.6 662.0 472.9 660.0Z"/>
<path d="M749.3 617.1C749.6 615.0 749.9 611.8 752.9 610.0C755.9 608.2 759.9 607.9 765.7 607.1C771.5 606.3 777.5 605.8 784.3 605.7C791.1 605.6 798.2 605.5 802.9 606.4C807.6 607.3 806.6 610.2 810.0 610.7C813.4 611.2 817.7 610.3 821.4 609.3C825.1 608.3 827.5 606.2 830.0 605.0C832.5 603.8 833.8 602.6 835.0 602.9C836.2 603.2 834.7 606.3 836.4 606.4C838.1 606.5 840.8 603.9 844.3 603.6C847.8 603.3 852.2 605.4 855.7 605.0C859.2 604.6 861.6 601.1 863.6 601.4C865.6 601.7 863.4 605.2 866.4 606.4C869.4 607.6 873.6 607.6 880.0 607.9C886.4 608.2 894.1 608.3 901.4 607.9C908.7 607.5 914.5 605.7 920.0 605.7C925.5 605.7 928.5 606.3 931.4 607.9C934.3 609.5 934.3 612.3 935.7 614.3C937.1 616.3 939.2 616.5 939.3 618.6C939.4 620.7 938.4 623.5 936.4 625.7C934.4 627.9 930.4 628.6 928.6 630.7C926.8 632.8 926.3 634.6 926.4 637.1C926.5 639.6 928.9 641.7 929.3 644.3C929.7 646.9 928.1 649.3 928.6 651.4C929.1 653.5 931.8 654.1 932.1 655.7C932.4 657.3 932.5 658.8 930.0 660.0C927.5 661.2 922.5 661.3 918.6 662.1C914.7 662.9 912.3 663.0 908.6 664.3C904.9 665.6 901.8 667.6 898.6 669.3C895.4 671.0 894.8 672.6 891.4 673.6C888.0 674.6 883.7 674.2 880.0 675.0C876.3 675.8 874.5 677.8 871.4 677.9C868.3 678.0 866.0 675.8 862.9 675.7C859.8 675.6 857.7 677.2 854.3 677.1C850.9 677.0 847.7 675.8 844.3 675.0C840.9 674.2 838.9 672.9 835.7 672.9C832.5 672.9 830.8 674.7 827.1 675.0C823.4 675.3 819.9 674.0 815.7 674.3C811.5 674.6 808.2 676.4 804.3 676.4C800.4 676.4 796.9 675.7 794.3 674.3C791.7 672.9 792.1 670.4 790.0 668.6C787.9 666.8 786.6 665.6 782.9 664.3C779.2 663.0 774.5 662.6 770.0 661.4C765.5 660.2 761.0 659.5 758.6 657.9C756.2 656.3 756.6 654.9 757.1 652.9C757.6 650.9 760.9 649.5 761.4 647.1C761.9 644.7 760.6 642.1 760.0 640.0C759.4 637.9 757.8 637.5 757.9 635.7C758.0 633.9 761.4 631.7 760.7 630.0C760.0 628.3 756.0 628.0 754.3 626.4C752.6 624.8 752.3 623.1 751.4 621.4C750.5 619.7 749.0 619.2 749.3 617.1Z"/>
<path d="M1005.2 553.1C1006.0 551.4 1007.0 548.8 1009.8 547.0C1012.6 545.2 1015.2 544.3 1020.5 543.2C1025.8 542.1 1032.4 541.3 1038.8 540.9C1045.2 540.5 1051.0 541.3 1055.5 540.9C1060.0 540.5 1057.8 540.9 1063.1 538.7C1068.4 536.5 1077.2 532.2 1084.5 528.8C1091.8 525.4 1094.9 520.5 1102.7 519.9C1110.5 519.3 1119.8 522.4 1127.1 525.7C1134.4 529.0 1136.7 533.7 1142.3 537.9C1147.9 542.1 1150.6 547.5 1157.6 548.6C1164.6 549.7 1172.0 547.4 1180.4 544.0C1188.8 540.6 1196.9 533.1 1203.3 530.3C1209.7 527.5 1213.1 527.4 1215.5 528.8C1217.9 530.2 1217.3 535.1 1216.2 537.9C1215.1 540.7 1211.8 541.5 1209.4 544.0C1207.0 546.5 1203.9 548.2 1203.3 551.6C1202.7 555.0 1204.4 558.9 1206.3 562.3C1208.2 565.7 1213.1 566.8 1213.9 569.9C1214.7 573.0 1213.4 576.2 1210.9 579.0C1208.4 581.8 1204.1 583.1 1200.2 585.1C1196.3 587.1 1193.2 587.7 1189.6 589.7C1186.0 591.7 1183.5 593.3 1180.4 595.8C1177.3 598.3 1177.0 601.5 1172.8 603.4C1168.6 605.3 1162.6 605.0 1157.6 606.4C1152.6 607.8 1149.6 609.3 1145.4 611.0C1141.2 612.7 1137.2 613.5 1134.7 615.6C1132.2 617.7 1133.6 621.0 1131.7 622.4C1129.8 623.8 1126.1 623.9 1124.1 623.2C1122.1 622.5 1123.0 619.0 1121.0 618.6C1119.0 618.2 1115.3 621.4 1113.4 620.9C1111.5 620.4 1112.9 616.4 1110.4 615.6C1107.9 614.8 1101.1 615.1 1099.7 616.3C1098.3 617.5 1104.9 621.0 1102.7 622.4C1100.5 623.8 1092.5 624.4 1087.5 624.0C1082.5 623.6 1078.4 620.1 1075.3 620.2C1072.2 620.3 1072.7 624.0 1070.7 624.7C1068.7 625.4 1066.3 625.4 1064.6 624.0C1062.9 622.6 1063.5 619.5 1061.6 617.1C1059.7 614.7 1056.5 613.5 1054.0 611.0C1051.5 608.5 1050.4 605.6 1047.9 603.4C1045.4 601.2 1043.9 599.9 1040.3 598.8C1036.7 597.7 1032.3 598.1 1028.1 597.3C1023.9 596.5 1019.9 596.3 1017.4 594.3C1014.9 592.3 1014.4 589.7 1014.4 586.6C1014.4 583.5 1017.1 580.8 1017.4 577.5C1017.7 574.2 1017.3 571.2 1015.9 568.4C1014.5 565.6 1011.8 564.5 1009.8 562.3C1007.8 560.1 1006.0 557.9 1005.2 556.2C1004.4 554.5 1004.4 554.8 1005.2 553.1Z"/>
<path d="M1048.7 307.0C1049.3 305.5 1049.8 304.8 1052.7 304.3C1055.6 303.8 1060.6 304.2 1064.7 304.3C1068.8 304.4 1071.4 304.4 1075.3 305.0C1079.2 305.6 1082.8 306.8 1086.0 307.7C1089.2 308.6 1090.3 309.8 1092.7 309.7C1095.1 309.6 1096.1 308.1 1099.3 307.0C1102.5 305.9 1105.6 304.4 1110.0 303.7C1114.4 303.0 1118.4 303.0 1123.3 303.0C1128.2 303.0 1131.6 303.3 1136.7 303.7C1141.8 304.1 1148.5 303.4 1151.3 305.0C1154.1 306.6 1152.7 310.1 1152.0 312.3C1151.3 314.5 1149.1 315.5 1147.3 317.0C1145.5 318.5 1143.5 318.6 1142.0 320.3C1140.5 322.0 1139.3 324.1 1139.3 326.3C1139.3 328.5 1140.5 330.0 1142.0 332.3C1143.5 334.6 1145.6 336.5 1147.3 339.0C1149.0 341.5 1150.7 343.0 1151.3 345.7C1151.9 348.4 1152.2 352.0 1150.7 353.7C1149.2 355.4 1146.4 354.6 1143.3 355.0C1140.2 355.4 1137.2 355.2 1134.0 355.7C1130.8 356.2 1128.9 357.7 1126.0 357.7C1123.1 357.7 1120.9 355.8 1118.0 355.7C1115.1 355.6 1113.2 357.0 1110.0 357.0C1106.8 357.0 1103.6 356.4 1100.7 355.7C1097.8 355.0 1096.2 353.6 1094.0 353.0C1091.8 352.4 1090.9 351.9 1088.7 352.3C1086.5 352.7 1084.7 354.6 1082.0 355.0C1079.3 355.4 1077.2 354.3 1074.0 354.3C1070.8 354.3 1067.9 354.6 1064.7 355.0C1061.5 355.4 1059.3 356.5 1056.7 356.3C1054.1 356.1 1051.9 355.4 1050.7 353.7C1049.5 352.0 1049.4 349.5 1050.0 347.0C1050.6 344.5 1052.8 342.7 1054.0 340.3C1055.2 337.9 1055.5 336.1 1056.7 333.7C1057.9 331.3 1060.5 329.2 1060.7 327.0C1060.9 324.8 1059.5 323.7 1058.0 321.7C1056.5 319.7 1054.3 318.0 1052.7 316.3C1051.1 314.6 1050.0 314.0 1049.3 312.3C1048.6 310.6 1048.1 308.5 1048.7 307.0Z"/>
<path d="M1003.3 254.3C1003.6 253.3 1006.2 252.5 1008.7 252.1C1011.2 251.7 1013.8 252.0 1016.7 252.3C1019.6 252.6 1022.5 253.0 1024.7 253.7C1026.9 254.4 1029.0 255.3 1028.7 256.1C1028.4 256.9 1025.8 257.5 1023.3 257.9C1020.8 258.3 1018.2 258.4 1015.3 258.3C1012.4 258.2 1009.5 258.1 1007.3 257.4C1005.1 256.7 1003.0 255.3 1003.3 254.3Z"/>
<path d="M1028.7 263.7C1029.7 262.7 1031.3 261.5 1034.0 261.7C1036.7 261.9 1039.6 263.8 1043.3 265.0C1047.0 266.2 1050.1 267.1 1054.0 268.3C1057.9 269.5 1062.1 270.6 1064.7 271.7C1067.3 272.8 1067.8 273.3 1068.0 274.3C1068.2 275.3 1067.3 276.0 1066.0 277.0C1064.7 278.0 1063.6 279.6 1060.7 279.7C1057.8 279.8 1053.9 278.7 1050.0 277.7C1046.1 276.7 1042.7 275.5 1039.3 274.3C1035.9 273.1 1033.2 272.3 1031.3 271.0C1029.4 269.7 1029.2 268.3 1028.7 267.0C1028.2 265.7 1027.7 264.7 1028.7 263.7Z"/>
<path d="M1305.0 501.4C1305.3 499.0 1306.7 497.1 1310.0 495.7C1313.3 494.3 1319.0 495.0 1322.9 493.6C1326.8 492.2 1327.5 489.7 1331.4 487.9C1335.3 486.1 1340.4 484.3 1344.3 483.6C1348.2 482.9 1349.2 484.3 1352.9 484.3C1356.6 484.3 1360.1 484.4 1364.3 483.6C1368.5 482.8 1371.8 480.7 1375.7 480.0C1379.6 479.3 1383.1 479.5 1385.7 480.0C1388.3 480.5 1387.6 483.2 1390.0 482.9C1392.4 482.6 1394.7 480.2 1398.6 478.6C1402.5 477.0 1407.2 475.9 1411.4 474.3C1415.6 472.7 1418.5 471.4 1421.4 470.0C1424.3 468.6 1425.4 468.5 1427.1 466.4C1428.8 464.3 1429.6 461.1 1430.7 458.6C1431.8 456.1 1431.7 454.7 1432.9 452.9C1434.1 451.1 1436.6 450.7 1437.1 448.6C1437.6 446.5 1436.1 443.8 1435.7 441.4C1435.3 439.0 1434.2 437.3 1435.0 435.7C1435.8 434.1 1436.5 433.7 1440.0 432.9C1443.5 432.1 1449.1 431.9 1454.3 431.4C1459.5 430.9 1464.7 430.8 1468.6 430.0C1472.5 429.2 1473.4 427.4 1475.7 427.1C1478.0 426.8 1479.8 427.8 1481.4 428.6C1483.0 429.4 1483.3 430.9 1484.3 431.4C1485.3 431.9 1486.6 423.0 1487.1 431.4C1487.6 439.8 1487.6 468.4 1487.1 477.1C1486.6 485.8 1486.4 477.5 1484.3 478.6C1482.2 479.7 1478.6 481.6 1475.7 482.9C1472.8 484.2 1470.7 484.1 1468.6 485.7C1466.5 487.3 1466.1 489.8 1464.3 491.4C1462.5 493.0 1461.2 493.0 1458.6 494.3C1456.0 495.6 1453.7 497.3 1450.0 498.6C1446.3 499.9 1442.8 500.1 1438.6 501.4C1434.4 502.7 1431.3 504.1 1427.1 505.7C1422.9 507.3 1419.4 508.7 1415.7 510.0C1412.0 511.3 1410.8 511.7 1407.1 512.9C1403.4 514.1 1398.0 514.6 1395.7 516.4C1393.4 518.2 1393.8 520.4 1394.3 522.9C1394.8 525.4 1396.8 527.7 1398.6 530.0C1400.4 532.3 1403.0 532.8 1404.3 535.7C1405.6 538.6 1407.3 543.5 1405.7 545.7C1404.1 547.9 1399.6 547.2 1395.7 547.9C1391.8 548.6 1388.0 549.3 1384.3 549.3C1380.6 549.3 1378.9 547.9 1375.7 547.9C1372.5 547.9 1370.5 549.4 1367.1 549.3C1363.7 549.2 1360.8 547.9 1357.1 547.1C1353.4 546.3 1350.8 544.9 1347.1 545.0C1343.4 545.1 1340.8 547.6 1337.1 547.9C1333.4 548.2 1331.0 546.4 1327.1 546.4C1323.2 546.4 1319.4 548.0 1315.7 547.9C1312.0 547.8 1308.4 547.7 1307.1 545.7C1305.8 543.7 1307.5 540.2 1308.6 537.1C1309.7 534.0 1311.3 531.7 1312.9 528.6C1314.5 525.5 1316.6 522.9 1317.1 520.0C1317.6 517.1 1317.3 515.0 1315.7 512.9C1314.1 510.8 1310.6 510.7 1308.6 508.6C1306.6 506.5 1304.7 503.8 1305.0 501.4Z"/>
<path d="M1422.9 466.4C1422.3 464.3 1421.2 459.0 1421.7 455.7C1422.2 452.4 1423.9 451.4 1425.4 448.6C1426.9 445.8 1428.7 441.1 1429.7 440.3C1430.7 439.5 1431.5 442.0 1431.1 444.3C1430.7 446.6 1428.5 450.0 1427.4 452.9C1426.3 455.8 1425.5 457.3 1425.1 460.0C1424.7 462.7 1425.5 466.2 1425.1 467.4C1424.7 468.6 1423.5 468.5 1422.9 466.4Z"/>
<path d="M1411.4 519.3C1412.2 518.5 1416.0 518.7 1418.6 517.9C1421.2 517.1 1424.1 515.0 1425.7 514.7C1427.3 514.4 1428.2 515.4 1427.4 516.4C1426.6 517.4 1423.8 519.2 1421.4 520.3C1419.0 521.4 1416.1 522.5 1414.3 522.3C1412.5 522.1 1410.6 520.1 1411.4 519.3Z"/>
</g>
<g fill="#c8a75c" stroke="#d0b268" stroke-width="1">
<path d="M113.3 645.0C113.4 643.3 115.8 642.7 117.9 641.9C120.0 641.1 124.0 642.0 124.9 640.4C125.8 638.8 121.5 635.8 122.6 633.4C123.7 631.0 127.6 627.9 131.1 627.2C134.6 626.5 138.5 627.9 141.9 629.5C145.3 631.1 147.3 635.0 149.6 635.7C151.9 636.4 153.2 635.2 154.3 633.4C155.4 631.6 153.3 627.8 155.8 625.7C158.3 623.6 163.9 623.8 168.2 621.8C172.5 619.8 174.2 616.8 179.0 614.8C183.8 612.8 189.1 611.4 194.5 611.0C199.9 610.6 203.1 613.1 208.5 612.5C213.9 611.9 217.7 608.6 223.9 607.9C230.1 607.2 235.4 608.9 242.5 608.6C249.6 608.3 255.5 606.9 262.6 606.3C269.7 605.7 275.8 605.1 281.2 605.5C286.6 605.9 288.9 606.7 292.0 608.6C295.1 610.5 296.8 613.2 298.2 615.6C299.6 618.0 300.6 619.8 299.8 621.8C299.0 623.8 296.7 624.7 293.6 626.4C290.5 628.1 287.0 629.1 282.7 631.1C278.4 633.1 274.9 634.8 270.4 637.3C265.9 639.8 262.8 641.3 258.0 645.0C253.2 648.7 245.1 654.3 244.0 657.4C242.9 660.5 249.9 659.2 251.8 662.0C253.7 664.8 255.5 670.5 254.1 672.9C252.7 675.3 247.8 674.4 244.0 675.2C240.2 676.0 237.7 677.4 233.2 677.5C228.7 677.6 223.8 676.0 219.3 676.0C214.8 676.0 212.5 677.9 208.5 677.5C204.5 677.1 201.9 673.7 197.6 673.6C193.3 673.5 190.0 676.4 185.2 676.7C180.4 677.0 175.3 675.2 171.3 675.2C167.3 675.2 167.3 677.3 163.6 676.7C159.9 676.1 155.2 673.7 151.2 672.1C147.2 670.5 145.3 668.3 141.9 668.2C138.5 668.1 135.1 671.6 132.6 671.3C130.1 671.0 129.1 668.7 128.0 666.7C126.9 664.7 127.8 662.8 126.4 660.5C125.0 658.2 122.0 654.9 120.2 654.3C118.4 653.7 117.7 657.1 116.4 657.4C115.1 657.7 113.2 656.9 113.3 655.8C113.4 654.7 117.1 653.2 117.1 651.2C117.1 649.2 113.2 646.7 113.3 645.0Z"/>
<path d="M97.8 648.9C97.9 648.0 99.1 647.2 100.1 646.9C101.1 646.6 102.4 646.8 103.2 647.3C104.0 647.8 104.6 648.7 104.5 649.6C104.4 650.5 103.4 651.6 102.4 652.0C101.4 652.4 100.1 652.6 99.3 652.0C98.5 651.4 97.7 649.8 97.8 648.9Z"/>
<path d="M472.9 660.0C473.2 658.0 472.7 656.6 475.0 655.0C477.3 653.4 482.4 652.8 485.7 651.4C489.0 650.0 489.5 648.9 492.9 647.1C496.3 645.3 500.6 643.6 504.3 641.4C508.0 639.2 508.7 637.1 512.9 635.0C517.1 632.9 521.9 632.0 527.1 630.0C532.3 628.0 537.2 626.0 541.4 624.3C545.6 622.6 547.9 622.8 550.0 620.7C552.1 618.6 551.9 614.7 552.9 612.9C553.9 611.1 554.4 610.1 555.7 610.7C557.0 611.3 557.4 616.1 560.0 616.4C562.6 616.7 566.6 612.6 570.0 612.1C573.4 611.6 578.1 614.8 578.6 613.6C579.1 612.4 573.4 607.5 572.9 605.7C572.4 603.9 573.6 603.5 575.7 603.6C577.8 603.7 581.7 605.6 584.3 606.4C586.9 607.2 588.8 606.6 590.0 607.9C591.2 609.2 591.5 611.9 590.7 613.6C589.9 615.3 586.0 615.7 585.7 617.1C585.4 618.5 586.7 620.9 589.3 621.4C591.9 621.9 598.2 621.2 600.0 620.0C601.8 618.8 598.8 615.5 599.3 615.0C599.8 614.5 601.2 616.8 602.9 617.1C604.6 617.4 606.5 617.0 608.6 616.4C610.7 615.8 612.3 614.0 614.3 613.6C616.3 613.2 618.3 612.9 619.3 614.3C620.3 615.7 618.3 619.6 620.0 621.4C621.7 623.2 625.1 623.5 628.6 624.3C632.1 625.1 637.2 624.1 639.3 625.7C641.4 627.3 640.9 630.8 640.0 632.9C639.1 635.0 636.4 635.0 634.3 637.1C632.2 639.2 629.4 641.7 628.6 644.3C627.8 646.9 629.0 648.9 630.0 651.4C631.0 653.9 632.5 654.7 634.3 657.9C636.1 661.1 639.2 665.1 640.0 668.6C640.8 672.1 641.0 674.5 638.6 677.1C636.2 679.7 631.0 681.2 627.1 682.9C623.2 684.6 621.0 684.8 617.1 686.4C613.2 688.0 608.8 689.4 605.7 691.4C602.6 693.4 603.4 695.3 600.0 697.1C596.6 698.9 592.1 700.1 587.1 701.4C582.1 702.7 577.6 703.1 572.9 704.3C568.2 705.5 565.6 706.7 561.4 707.9C557.2 709.1 554.7 710.7 550.0 710.7C545.3 710.7 540.9 708.6 535.7 707.9C530.5 707.2 526.1 707.5 521.4 707.1C516.7 706.7 514.5 705.7 510.0 705.7C505.5 705.7 501.8 706.7 497.1 707.1C492.4 707.5 488.2 708.0 484.3 707.9C480.4 707.8 477.8 707.6 475.7 706.4C473.6 705.2 472.6 703.9 472.9 701.4C473.2 698.9 475.5 696.0 477.1 692.9C478.7 689.8 479.8 687.5 481.4 684.3C483.0 681.1 486.2 678.3 485.7 675.7C485.2 673.1 480.8 671.8 478.6 670.0C476.4 668.2 474.6 667.5 473.6 665.7C472.6 663.9 472.6 662.0 472.9 660.0Z"/>
<path d="M749.3 617.1C749.6 615.0 749.9 611.8 752.9 610.0C755.9 608.2 759.9 607.9 765.7 607.1C771.5 606.3 777.5 605.8 784.3 605.7C791.1 605.6 798.2 605.5 802.9 606.4C807.6 607.3 806.6 610.2 810.0 610.7C813.4 611.2 817.7 610.3 821.4 609.3C825.1 608.3 827.5 606.2 830.0 605.0C832.5 603.8 833.8 602.6 835.0 602.9C836.2 603.2 834.7 606.3 836.4 606.4C838.1 606.5 840.8 603.9 844.3 603.6C847.8 603.3 852.2 605.4 855.7 605.0C859.2 604.6 861.6 601.1 863.6 601.4C865.6 601.7 863.4 605.2 866.4 606.4C869.4 607.6 873.6 607.6 880.0 607.9C886.4 608.2 894.1 608.3 901.4 607.9C908.7 607.5 914.5 605.7 920.0 605.7C925.5 605.7 928.5 606.3 931.4 607.9C934.3 609.5 934.3 612.3 935.7 614.3C937.1 616.3 939.2 616.5 939.3 618.6C939.4 620.7 938.4 623.5 936.4 625.7C934.4 627.9 930.4 628.6 928.6 630.7C926.8 632.8 926.3 634.6 926.4 637.1C926.5 639.6 928.9 641.7 929.3 644.3C929.7 646.9 928.1 649.3 928.6 651.4C929.1 653.5 931.8 654.1 932.1 655.7C932.4 657.3 932.5 658.8 930.0 660.0C927.5 661.2 922.5 661.3 918.6 662.1C914.7 662.9 912.3 663.0 908.6 664.3C904.9 665.6 901.8 667.6 898.6 669.3C895.4 671.0 894.8 672.6 891.4 673.6C888.0 674.6 883.7 674.2 880.0 675.0C876.3 675.8 874.5 677.8 871.4 677.9C868.3 678.0 866.0 675.8 862.9 675.7C859.8 675.6 857.7 677.2 854.3 677.1C850.9 677.0 847.7 675.8 844.3 675.0C840.9 674.2 838.9 672.9 835.7 672.9C832.5 672.9 830.8 674.7 827.1 675.0C823.4 675.3 819.9 674.0 815.7 674.3C811.5 674.6 808.2 676.4 804.3 676.4C800.4 676.4 796.9 675.7 794.3 674.3C791.7 672.9 792.1 670.4 790.0 668.6C787.9 666.8 786.6 665.6 782.9 664.3C779.2 663.0 774.5 662.6 770.0 661.4C765.5 660.2 761.0 659.5 758.6 657.9C756.2 656.3 756.6 654.9 757.1 652.9C757.6 650.9 760.9 649.5 761.4 647.1C761.9 644.7 760.6 642.1 760.0 640.0C759.4 637.9 757.8 637.5 757.9 635.7C758.0 633.9 761.4 631.7 760.7 630.0C760.0 628.3 756.0 628.0 754.3 626.4C752.6 624.8 752.3 623.1 751.4 621.4C750.5 619.7 749.0 619.2 749.3 617.1Z"/>
<path d="M1005.2 553.1C1006.0 551.4 1007.0 548.8 1009.8 547.0C1012.6 545.2 1015.2 544.3 1020.5 543.2C1025.8 542.1 1032.4 541.3 1038.8 540.9C1045.2 540.5 1051.0 541.3 1055.5 540.9C1060.0 540.5 1057.8 540.9 1063.1 538.7C1068.4 536.5 1077.2 532.2 1084.5 528.8C1091.8 525.4 1094.9 520.5 1102.7 519.9C1110.5 519.3 1119.8 522.4 1127.1 525.7C1134.4 529.0 1136.7 533.7 1142.3 537.9C1147.9 542.1 1150.6 547.5 1157.6 548.6C1164.6 549.7 1172.0 547.4 1180.4 544.0C1188.8 540.6 1196.9 533.1 1203.3 530.3C1209.7 527.5 1213.1 527.4 1215.5 528.8C1217.9 530.2 1217.3 535.1 1216.2 537.9C1215.1 540.7 1211.8 541.5 1209.4 544.0C1207.0 546.5 1203.9 548.2 1203.3 551.6C1202.7 555.0 1204.4 558.9 1206.3 562.3C1208.2 565.7 1213.1 566.8 1213.9 569.9C1214.7 573.0 1213.4 576.2 1210.9 579.0C1208.4 581.8 1204.1 583.1 1200.2 585.1C1196.3 587.1 1193.2 587.7 1189.6 589.7C1186.0 591.7 1183.5 593.3 1180.4 595.8C1177.3 598.3 1177.0 601.5 1172.8 603.4C1168.6 605.3 1162.6 605.0 1157.6 606.4C1152.6 607.8 1149.6 609.3 1145.4 611.0C1141.2 612.7 1137.2 613.5 1134.7 615.6C1132.2 617.7 1133.6 621.0 1131.7 622.4C1129.8 623.8 1126.1 623.9 1124.1 623.2C1122.1 622.5 1123.0 619.0 1121.0 618.6C1119.0 618.2 1115.3 621.4 1113.4 620.9C1111.5 620.4 1112.9 616.4 1110.4 615.6C1107.9 614.8 1101.1 615.1 1099.7 616.3C1098.3 617.5 1104.9 621.0 1102.7 622.4C1100.5 623.8 1092.5 624.4 1087.5 624.0C1082.5 623.6 1078.4 620.1 1075.3 620.2C1072.2 620.3 1072.7 624.0 1070.7 624.7C1068.7 625.4 1066.3 625.4 1064.6 624.0C1062.9 622.6 1063.5 619.5 1061.6 617.1C1059.7 614.7 1056.5 613.5 1054.0 611.0C1051.5 608.5 1050.4 605.6 1047.9 603.4C1045.4 601.2 1043.9 599.9 1040.3 598.8C1036.7 597.7 1032.3 598.1 1028.1 597.3C1023.9 596.5 1019.9 596.3 1017.4 594.3C1014.9 592.3 1014.4 589.7 1014.4 586.6C1014.4 583.5 1017.1 580.8 1017.4 577.5C1017.7 574.2 1017.3 571.2 1015.9 568.4C1014.5 565.6 1011.8 564.5 1009.8 562.3C1007.8 560.1 1006.0 557.9 1005.2 556.2C1004.4 554.5 1004.4 554.8 1005.2 553.1Z"/>
<path d="M1048.7 307.0C1049.3 305.5 1049.8 304.8 1052.7 304.3C1055.6 303.8 1060.6 304.2 1064.7 304.3C1068.8 304.4 1071.4 304.4 1075.3 305.0C1079.2 305.6 1082.8 306.8 1086.0 307.7C1089.2 308.6 1090.3 309.8 1092.7 309.7C1095.1 309.6 1096.1 308.1 1099.3 307.0C1102.5 305.9 1105.6 304.4 1110.0 303.7C1114.4 303.0 1118.4 303.0 1123.3 303.0C1128.2 303.0 1131.6 303.3 1136.7 303.7C1141.8 304.1 1148.5 303.4 1151.3 305.0C1154.1 306.6 1152.7 310.1 1152.0 312.3C1151.3 314.5 1149.1 315.5 1147.3 317.0C1145.5 318.5 1143.5 318.6 1142.0 320.3C1140.5 322.0 1139.3 324.1 1139.3 326.3C1139.3 328.5 1140.5 330.0 1142.0 332.3C1143.5 334.6 1145.6 336.5 1147.3 339.0C1149.0 341.5 1150.7 343.0 1151.3 345.7C1151.9 348.4 1152.2 352.0 1150.7 353.7C1149.2 355.4 1146.4 354.6 1143.3 355.0C1140.2 355.4 1137.2 355.2 1134.0 355.7C1130.8 356.2 1128.9 357.7 1126.0 357.7C1123.1 357.7 1120.9 355.8 1118.0 355.7C1115.1 355.6 1113.2 357.0 1110.0 357.0C1106.8 357.0 1103.6 356.4 1100.7 355.7C1097.8 355.0 1096.2 353.6 1094.0 353.0C1091.8 352.4 1090.9 351.9 1088.7 352.3C1086.5 352.7 1084.7 354.6 1082.0 355.0C1079.3 355.4 1077.2 354.3 1074.0 354.3C1070.8 354.3 1067.9 354.6 1064.7 355.0C1061.5 355.4 1059.3 356.5 1056.7 356.3C1054.1 356.1 1051.9 355.4 1050.7 353.7C1049.5 352.0 1049.4 349.5 1050.0 347.0C1050.6 344.5 1052.8 342.7 1054.0 340.3C1055.2 337.9 1055.5 336.1 1056.7 333.7C1057.9 331.3 1060.5 329.2 1060.7 327.0C1060.9 324.8 1059.5 323.7 1058.0 321.7C1056.5 319.7 1054.3 318.0 1052.7 316.3C1051.1 314.6 1050.0 314.0 1049.3 312.3C1048.6 310.6 1048.1 308.5 1048.7 307.0Z"/>
<path d="M1003.3 254.3C1003.6 253.3 1006.2 252.5 1008.7 252.1C1011.2 251.7 1013.8 252.0 1016.7 252.3C1019.6 252.6 1022.5 253.0 1024.7 253.7C1026.9 254.4 1029.0 255.3 1028.7 256.1C1028.4 256.9 1025.8 257.5 1023.3 257.9C1020.8 258.3 1018.2 258.4 1015.3 258.3C1012.4 258.2 1009.5 258.1 1007.3 257.4C1005.1 256.7 1003.0 255.3 1003.3 254.3Z"/>
<path d="M1028.7 263.7C1029.7 262.7 1031.3 261.5 1034.0 261.7C1036.7 261.9 1039.6 263.8 1043.3 265.0C1047.0 266.2 1050.1 267.1 1054.0 268.3C1057.9 269.5 1062.1 270.6 1064.7 271.7C1067.3 272.8 1067.8 273.3 1068.0 274.3C1068.2 275.3 1067.3 276.0 1066.0 277.0C1064.7 278.0 1063.6 279.6 1060.7 279.7C1057.8 279.8 1053.9 278.7 1050.0 277.7C1046.1 276.7 1042.7 275.5 1039.3 274.3C1035.9 273.1 1033.2 272.3 1031.3 271.0C1029.4 269.7 1029.2 268.3 1028.7 267.0C1028.2 265.7 1027.7 264.7 1028.7 263.7Z"/>
<path d="M1305.0 501.4C1305.3 499.0 1306.7 497.1 1310.0 495.7C1313.3 494.3 1319.0 495.0 1322.9 493.6C1326.8 492.2 1327.5 489.7 1331.4 487.9C1335.3 486.1 1340.4 484.3 1344.3 483.6C1348.2 482.9 1349.2 484.3 1352.9 484.3C1356.6 484.3 1360.1 484.4 1364.3 483.6C1368.5 482.8 1371.8 480.7 1375.7 480.0C1379.6 479.3 1383.1 479.5 1385.7 480.0C1388.3 480.5 1387.6 483.2 1390.0 482.9C1392.4 482.6 1394.7 480.2 1398.6 478.6C1402.5 477.0 1407.2 475.9 1411.4 474.3C1415.6 472.7 1418.5 471.4 1421.4 470.0C1424.3 468.6 1425.4 468.5 1427.1 466.4C1428.8 464.3 1429.6 461.1 1430.7 458.6C1431.8 456.1 1431.7 454.7 1432.9 452.9C1434.1 451.1 1436.6 450.7 1437.1 448.6C1437.6 446.5 1436.1 443.8 1435.7 441.4C1435.3 439.0 1434.2 437.3 1435.0 435.7C1435.8 434.1 1436.5 433.7 1440.0 432.9C1443.5 432.1 1449.1 431.9 1454.3 431.4C1459.5 430.9 1464.7 430.8 1468.6 430.0C1472.5 429.2 1473.4 427.4 1475.7 427.1C1478.0 426.8 1479.8 427.8 1481.4 428.6C1483.0 429.4 1483.3 430.9 1484.3 431.4C1485.3 431.9 1486.6 423.0 1487.1 431.4C1487.6 439.8 1487.6 468.4 1487.1 477.1C1486.6 485.8 1486.4 477.5 1484.3 478.6C1482.2 479.7 1478.6 481.6 1475.7 482.9C1472.8 484.2 1470.7 484.1 1468.6 485.7C1466.5 487.3 1466.1 489.8 1464.3 491.4C1462.5 493.0 1461.2 493.0 1458.6 494.3C1456.0 495.6 1453.7 497.3 1450.0 498.6C1446.3 499.9 1442.8 500.1 1438.6 501.4C1434.4 502.7 1431.3 504.1 1427.1 505.7C1422.9 507.3 1419.4 508.7 1415.7 510.0C1412.0 511.3 1410.8 511.7 1407.1 512.9C1403.4 514.1 1398.0 514.6 1395.7 516.4C1393.4 518.2 1393.8 520.4 1394.3 522.9C1394.8 525.4 1396.8 527.7 1398.6 530.0C1400.4 532.3 1403.0 532.8 1404.3 535.7C1405.6 538.6 1407.3 543.5 1405.7 545.7C1404.1 547.9 1399.6 547.2 1395.7 547.9C1391.8 548.6 1388.0 549.3 1384.3 549.3C1380.6 549.3 1378.9 547.9 1375.7 547.9C1372.5 547.9 1370.5 549.4 1367.1 549.3C1363.7 549.2 1360.8 547.9 1357.1 547.1C1353.4 546.3 1350.8 544.9 1347.1 545.0C1343.4 545.1 1340.8 547.6 1337.1 547.9C1333.4 548.2 1331.0 546.4 1327.1 546.4C1323.2 546.4 1319.4 548.0 1315.7 547.9C1312.0 547.8 1308.4 547.7 1307.1 545.7C1305.8 543.7 1307.5 540.2 1308.6 537.1C1309.7 534.0 1311.3 531.7 1312.9 528.6C1314.5 525.5 1316.6 522.9 1317.1 520.0C1317.6 517.1 1317.3 515.0 1315.7 512.9C1314.1 510.8 1310.6 510.7 1308.6 508.6C1306.6 506.5 1304.7 503.8 1305.0 501.4Z"/>
<path d="M1422.9 466.4C1422.3 464.3 1421.2 459.0 1421.7 455.7C1422.2 452.4 1423.9 451.4 1425.4 448.6C1426.9 445.8 1428.7 441.1 1429.7 440.3C1430.7 439.5 1431.5 442.0 1431.1 444.3C1430.7 446.6 1428.5 450.0 1427.4 452.9C1426.3 455.8 1425.5 457.3 1425.1 460.0C1424.7 462.7 1425.5 466.2 1425.1 467.4C1424.7 468.6 1423.5 468.5 1422.9 466.4Z"/>
<path d="M1411.4 519.3C1412.2 518.5 1416.0 518.7 1418.6 517.9C1421.2 517.1 1424.1 515.0 1425.7 514.7C1427.3 514.4 1428.2 515.4 1427.4 516.4C1426.6 517.4 1423.8 519.2 1421.4 520.3C1419.0 521.4 1416.1 522.5 1414.3 522.3C1412.5 522.1 1410.6 520.1 1411.4 519.3Z"/>
</g>
<g fill="#a19d55" filter="url(#inner)">
<path d="M113.3 645.0C113.4 643.3 115.8 642.7 117.9 641.9C120.0 641.1 124.0 642.0 124.9 640.4C125.8 638.8 121.5 635.8 122.6 633.4C123.7 631.0 127.6 627.9 131.1 627.2C134.6 626.5 138.5 627.9 141.9 629.5C145.3 631.1 147.3 635.0 149.6 635.7C151.9 636.4 153.2 635.2 154.3 633.4C155.4 631.6 153.3 627.8 155.8 625.7C158.3 623.6 163.9 623.8 168.2 621.8C172.5 619.8 174.2 616.8 179.0 614.8C183.8 612.8 189.1 611.4 194.5 611.0C199.9 610.6 203.1 613.1 208.5 612.5C213.9 611.9 217.7 608.6 223.9 607.9C230.1 607.2 235.4 608.9 242.5 608.6C249.6 608.3 255.5 606.9 262.6 606.3C269.7 605.7 275.8 605.1 281.2 605.5C286.6 605.9 288.9 606.7 292.0 608.6C295.1 610.5 296.8 613.2 298.2 615.6C299.6 618.0 300.6 619.8 299.8 621.8C299.0 623.8 296.7 624.7 293.6 626.4C290.5 628.1 287.0 629.1 282.7 631.1C278.4 633.1 274.9 634.8 270.4 637.3C265.9 639.8 262.8 641.3 258.0 645.0C253.2 648.7 245.1 654.3 244.0 657.4C242.9 660.5 249.9 659.2 251.8 662.0C253.7 664.8 255.5 670.5 254.1 672.9C252.7 675.3 247.8 674.4 244.0 675.2C240.2 676.0 237.7 677.4 233.2 677.5C228.7 677.6 223.8 676.0 219.3 676.0C214.8 676.0 212.5 677.9 208.5 677.5C204.5 677.1 201.9 673.7 197.6 673.6C193.3 673.5 190.0 676.4 185.2 676.7C180.4 677.0 175.3 675.2 171.3 675.2C167.3 675.2 167.3 677.3 163.6 676.7C159.9 676.1 155.2 673.7 151.2 672.1C147.2 670.5 145.3 668.3 141.9 668.2C138.5 668.1 135.1 671.6 132.6 671.3C130.1 671.0 129.1 668.7 128.0 666.7C126.9 664.7 127.8 662.8 126.4 660.5C125.0 658.2 122.0 654.9 120.2 654.3C118.4 653.7 117.7 657.1 116.4 657.4C115.1 657.7 113.2 656.9 113.3 655.8C113.4 654.7 117.1 653.2 117.1 651.2C117.1 649.2 113.2 646.7 113.3 645.0Z"/>
<path d="M472.9 660.0C473.2 658.0 472.7 656.6 475.0 655.0C477.3 653.4 482.4 652.8 485.7 651.4C489.0 650.0 489.5 648.9 492.9 647.1C496.3 645.3 500.6 643.6 504.3 641.4C508.0 639.2 508.7 637.1 512.9 635.0C517.1 632.9 521.9 632.0 527.1 630.0C532.3 628.0 537.2 626.0 541.4 624.3C545.6 622.6 547.9 622.8 550.0 620.7C552.1 618.6 551.9 614.7 552.9 612.9C553.9 611.1 554.4 610.1 555.7 610.7C557.0 611.3 557.4 616.1 560.0 616.4C562.6 616.7 566.6 612.6 570.0 612.1C573.4 611.6 578.1 614.8 578.6 613.6C579.1 612.4 573.4 607.5 572.9 605.7C572.4 603.9 573.6 603.5 575.7 603.6C577.8 603.7 581.7 605.6 584.3 606.4C586.9 607.2 588.8 606.6 590.0 607.9C591.2 609.2 591.5 611.9 590.7 613.6C589.9 615.3 586.0 615.7 585.7 617.1C585.4 618.5 586.7 620.9 589.3 621.4C591.9 621.9 598.2 621.2 600.0 620.0C601.8 618.8 598.8 615.5 599.3 615.0C599.8 614.5 601.2 616.8 602.9 617.1C604.6 617.4 606.5 617.0 608.6 616.4C610.7 615.8 612.3 614.0 614.3 613.6C616.3 613.2 618.3 612.9 619.3 614.3C620.3 615.7 618.3 619.6 620.0 621.4C621.7 623.2 625.1 623.5 628.6 624.3C632.1 625.1 637.2 624.1 639.3 625.7C641.4 627.3 640.9 630.8 640.0 632.9C639.1 635.0 636.4 635.0 634.3 637.1C632.2 639.2 629.4 641.7 628.6 644.3C627.8 646.9 629.0 648.9 630.0 651.4C631.0 653.9 632.5 654.7 634.3 657.9C636.1 661.1 639.2 665.1 640.0 668.6C640.8 672.1 641.0 674.5 638.6 677.1C636.2 679.7 631.0 681.2 627.1 682.9C623.2 684.6 621.0 684.8 617.1 686.4C613.2 688.0 608.8 689.4 605.7 691.4C602.6 693.4 603.4 695.3 600.0 697.1C596.6 698.9 592.1 700.1 587.1 701.4C582.1 702.7 577.6 703.1 572.9 704.3C568.2 705.5 565.6 706.7 561.4 707.9C557.2 709.1 554.7 710.7 550.0 710.7C545.3 710.7 540.9 708.6 535.7 707.9C530.5 707.2 526.1 707.5 521.4 707.1C516.7 706.7 514.5 705.7 510.0 705.7C505.5 705.7 501.8 706.7 497.1 707.1C492.4 707.5 488.2 708.0 484.3 707.9C480.4 707.8 477.8 707.6 475.7 706.4C473.6 705.2 472.6 703.9 472.9 701.4C473.2 698.9 475.5 696.0 477.1 692.9C478.7 689.8 479.8 687.5 481.4 684.3C483.0 681.1 486.2 678.3 485.7 675.7C485.2 673.1 480.8 671.8 478.6 670.0C476.4 668.2 474.6 667.5 473.6 665.7C472.6 663.9 472.6 662.0 472.9 660.0Z"/>
<path d="M749.3 617.1C749.6 615.0 749.9 611.8 752.9 610.0C755.9 608.2 759.9 607.9 765.7 607.1C771.5 606.3 777.5 605.8 784.3 605.7C791.1 605.6 798.2 605.5 802.9 606.4C807.6 607.3 806.6 610.2 810.0 610.7C813.4 611.2 817.7 610.3 821.4 609.3C825.1 608.3 827.5 606.2 830.0 605.0C832.5 603.8 833.8 602.6 835.0 602.9C836.2 603.2 834.7 606.3 836.4 606.4C838.1 606.5 840.8 603.9 844.3 603.6C847.8 603.3 852.2 605.4 855.7 605.0C859.2 604.6 861.6 601.1 863.6 601.4C865.6 601.7 863.4 605.2 866.4 606.4C869.4 607.6 873.6 607.6 880.0 607.9C886.4 608.2 894.1 608.3 901.4 607.9C908.7 607.5 914.5 605.7 920.0 605.7C925.5 605.7 928.5 606.3 931.4 607.9C934.3 609.5 934.3 612.3 935.7 614.3C937.1 616.3 939.2 616.5 939.3 618.6C939.4 620.7 938.4 623.5 936.4 625.7C934.4 627.9 930.4 628.6 928.6 630.7C926.8 632.8 926.3 634.6 926.4 637.1C926.5 639.6 928.9 641.7 929.3 644.3C929.7 646.9 928.1 649.3 928.6 651.4C929.1 653.5 931.8 654.1 932.1 655.7C932.4 657.3 932.5 658.8 930.0 660.0C927.5 661.2 922.5 661.3 918.6 662.1C914.7 662.9 912.3 663.0 908.6 664.3C904.9 665.6 901.8 667.6 898.6 669.3C895.4 671.0 894.8 672.6 891.4 673.6C888.0 674.6 883.7 674.2 880.0 675.0C876.3 675.8 874.5 677.8 871.4 677.9C868.3 678.0 866.0 675.8 862.9 675.7C859.8 675.6 857.7 677.2 854.3 677.1C850.9 677.0 847.7 675.8 844.3 675.0C840.9 674.2 838.9 672.9 835.7 672.9C832.5 672.9 830.8 674.7 827.1 675.0C823.4 675.3 819.9 674.0 815.7 674.3C811.5 674.6 808.2 676.4 804.3 676.4C800.4 676.4 796.9 675.7 794.3 674.3C791.7 672.9 792.1 670.4 790.0 668.6C787.9 666.8 786.6 665.6 782.9 664.3C779.2 663.0 774.5 662.6 770.0 661.4C765.5 660.2 761.0 659.5 758.6 657.9C756.2 656.3 756.6 654.9 757.1 652.9C757.6 650.9 760.9 649.5 761.4 647.1C761.9 644.7 760.6 642.1 760.0 640.0C759.4 637.9 757.8 637.5 757.9 635.7C758.0 633.9 761.4 631.7 760.7 630.0C760.0 628.3 756.0 628.0 754.3 626.4C752.6 624.8 752.3 623.1 751.4 621.4C750.5 619.7 749.0 619.2 749.3 617.1Z"/>
<path d="M1005.2 553.1C1006.0 551.4 1007.0 548.8 1009.8 547.0C1012.6 545.2 1015.2 544.3 1020.5 543.2C1025.8 542.1 1032.4 541.3 1038.8 540.9C1045.2 540.5 1051.0 541.3 1055.5 540.9C1060.0 540.5 1057.8 540.9 1063.1 538.7C1068.4 536.5 1077.2 532.2 1084.5 528.8C1091.8 525.4 1094.9 520.5 1102.7 519.9C1110.5 519.3 1119.8 522.4 1127.1 525.7C1134.4 529.0 1136.7 533.7 1142.3 537.9C1147.9 542.1 1150.6 547.5 1157.6 548.6C1164.6 549.7 1172.0 547.4 1180.4 544.0C1188.8 540.6 1196.9 533.1 1203.3 530.3C1209.7 527.5 1213.1 527.4 1215.5 528.8C1217.9 530.2 1217.3 535.1 1216.2 537.9C1215.1 540.7 1211.8 541.5 1209.4 544.0C1207.0 546.5 1203.9 548.2 1203.3 551.6C1202.7 555.0 1204.4 558.9 1206.3 562.3C1208.2 565.7 1213.1 566.8 1213.9 569.9C1214.7 573.0 1213.4 576.2 1210.9 579.0C1208.4 581.8 1204.1 583.1 1200.2 585.1C1196.3 587.1 1193.2 587.7 1189.6 589.7C1186.0 591.7 1183.5 593.3 1180.4 595.8C1177.3 598.3 1177.0 601.5 1172.8 603.4C1168.6 605.3 1162.6 605.0 1157.6 606.4C1152.6 607.8 1149.6 609.3 1145.4 611.0C1141.2 612.7 1137.2 613.5 1134.7 615.6C1132.2 617.7 1133.6 621.0 1131.7 622.4C1129.8 623.8 1126.1 623.9 1124.1 623.2C1122.1 622.5 1123.0 619.0 1121.0 618.6C1119.0 618.2 1115.3 621.4 1113.4 620.9C1111.5 620.4 1112.9 616.4 1110.4 615.6C1107.9 614.8 1101.1 615.1 1099.7 616.3C1098.3 617.5 1104.9 621.0 1102.7 622.4C1100.5 623.8 1092.5 624.4 1087.5 624.0C1082.5 623.6 1078.4 620.1 1075.3 620.2C1072.2 620.3 1072.7 624.0 1070.7 624.7C1068.7 625.4 1066.3 625.4 1064.6 624.0C1062.9 622.6 1063.5 619.5 1061.6 617.1C1059.7 614.7 1056.5 613.5 1054.0 611.0C1051.5 608.5 1050.4 605.6 1047.9 603.4C1045.4 601.2 1043.9 599.9 1040.3 598.8C1036.7 597.7 1032.3 598.1 1028.1 597.3C1023.9 596.5 1019.9 596.3 1017.4 594.3C1014.9 592.3 1014.4 589.7 1014.4 586.6C1014.4 583.5 1017.1 580.8 1017.4 577.5C1017.7 574.2 1017.3 571.2 1015.9 568.4C1014.5 565.6 1011.8 564.5 1009.8 562.3C1007.8 560.1 1006.0 557.9 1005.2 556.2C1004.4 554.5 1004.4 554.8 1005.2 553.1Z"/>
<path d="M1048.7 307.0C1049.3 305.5 1049.8 304.8 1052.7 304.3C1055.6 303.8 1060.6 304.2 1064.7 304.3C1068.8 304.4 1071.4 304.4 1075.3 305.0C1079.2 305.6 1082.8 306.8 1086.0 307.7C1089.2 308.6 1090.3 309.8 1092.7 309.7C1095.1 309.6 1096.1 308.1 1099.3 307.0C1102.5 305.9 1105.6 304.4 1110.0 303.7C1114.4 303.0 1118.4 303.0 1123.3 303.0C1128.2 303.0 1131.6 303.3 1136.7 303.7C1141.8 304.1 1148.5 303.4 1151.3 305.0C1154.1 306.6 1152.7 310.1 1152.0 312.3C1151.3 314.5 1149.1 315.5 1147.3 317.0C1145.5 318.5 1143.5 318.6 1142.0 320.3C1140.5 322.0 1139.3 324.1 1139.3 326.3C1139.3 328.5 1140.5 330.0 1142.0 332.3C1143.5 334.6 1145.6 336.5 1147.3 339.0C1149.0 341.5 1150.7 343.0 1151.3 345.7C1151.9 348.4 1152.2 352.0 1150.7 353.7C1149.2 355.4 1146.4 354.6 1143.3 355.0C1140.2 355.4 1137.2 355.2 1134.0 355.7C1130.8 356.2 1128.9 357.7 1126.0 357.7C1123.1 357.7 1120.9 355.8 1118.0 355.7C1115.1 355.6 1113.2 357.0 1110.0 357.0C1106.8 357.0 1103.6 356.4 1100.7 355.7C1097.8 355.0 1096.2 353.6 1094.0 353.0C1091.8 352.4 1090.9 351.9 1088.7 352.3C1086.5 352.7 1084.7 354.6 1082.0 355.0C1079.3 355.4 1077.2 354.3 1074.0 354.3C1070.8 354.3 1067.9 354.6 1064.7 355.0C1061.5 355.4 1059.3 356.5 1056.7 356.3C1054.1 356.1 1051.9 355.4 1050.7 353.7C1049.5 352.0 1049.4 349.5 1050.0 347.0C1050.6 344.5 1052.8 342.7 1054.0 340.3C1055.2 337.9 1055.5 336.1 1056.7 333.7C1057.9 331.3 1060.5 329.2 1060.7 327.0C1060.9 324.8 1059.5 323.7 1058.0 321.7C1056.5 319.7 1054.3 318.0 1052.7 316.3C1051.1 314.6 1050.0 314.0 1049.3 312.3C1048.6 310.6 1048.1 308.5 1048.7 307.0Z"/>
<path d="M1028.7 263.7C1029.7 262.7 1031.3 261.5 1034.0 261.7C1036.7 261.9 1039.6 263.8 1043.3 265.0C1047.0 266.2 1050.1 267.1 1054.0 268.3C1057.9 269.5 1062.1 270.6 1064.7 271.7C1067.3 272.8 1067.8 273.3 1068.0 274.3C1068.2 275.3 1067.3 276.0 1066.0 277.0C1064.7 278.0 1063.6 279.6 1060.7 279.7C1057.8 279.8 1053.9 278.7 1050.0 277.7C1046.1 276.7 1042.7 275.5 1039.3 274.3C1035.9 273.1 1033.2 272.3 1031.3 271.0C1029.4 269.7 1029.2 268.3 1028.7 267.0C1028.2 265.7 1027.7 264.7 1028.7 263.7Z"/>
<path d="M1305.0 501.4C1305.3 499.0 1306.7 497.1 1310.0 495.7C1313.3 494.3 1319.0 495.0 1322.9 493.6C1326.8 492.2 1327.5 489.7 1331.4 487.9C1335.3 486.1 1340.4 484.3 1344.3 483.6C1348.2 482.9 1349.2 484.3 1352.9 484.3C1356.6 484.3 1360.1 484.4 1364.3 483.6C1368.5 482.8 1371.8 480.7 1375.7 480.0C1379.6 479.3 1383.1 479.5 1385.7 480.0C1388.3 480.5 1387.6 483.2 1390.0 482.9C1392.4 482.6 1394.7 480.2 1398.6 478.6C1402.5 477.0 1407.2 475.9 1411.4 474.3C1415.6 472.7 1418.5 471.4 1421.4 470.0C1424.3 468.6 1425.4 468.5 1427.1 466.4C1428.8 464.3 1429.6 461.1 1430.7 458.6C1431.8 456.1 1431.7 454.7 1432.9 452.9C1434.1 451.1 1436.6 450.7 1437.1 448.6C1437.6 446.5 1436.1 443.8 1435.7 441.4C1435.3 439.0 1434.2 437.3 1435.0 435.7C1435.8 434.1 1436.5 433.7 1440.0 432.9C1443.5 432.1 1449.1 431.9 1454.3 431.4C1459.5 430.9 1464.7 430.8 1468.6 430.0C1472.5 429.2 1473.4 427.4 1475.7 427.1C1478.0 426.8 1479.8 427.8 1481.4 428.6C1483.0 429.4 1483.3 430.9 1484.3 431.4C1485.3 431.9 1486.6 423.0 1487.1 431.4C1487.6 439.8 1487.6 468.4 1487.1 477.1C1486.6 485.8 1486.4 477.5 1484.3 478.6C1482.2 479.7 1478.6 481.6 1475.7 482.9C1472.8 484.2 1470.7 484.1 1468.6 485.7C1466.5 487.3 1466.1 489.8 1464.3 491.4C1462.5 493.0 1461.2 493.0 1458.6 494.3C1456.0 495.6 1453.7 497.3 1450.0 498.6C1446.3 499.9 1442.8 500.1 1438.6 501.4C1434.4 502.7 1431.3 504.1 1427.1 505.7C1422.9 507.3 1419.4 508.7 1415.7 510.0C1412.0 511.3 1410.8 511.7 1407.1 512.9C1403.4 514.1 1398.0 514.6 1395.7 516.4C1393.4 518.2 1393.8 520.4 1394.3 522.9C1394.8 525.4 1396.8 527.7 1398.6 530.0C1400.4 532.3 1403.0 532.8 1404.3 535.7C1405.6 538.6 1407.3 543.5 1405.7 545.7C1404.1 547.9 1399.6 547.2 1395.7 547.9C1391.8 548.6 1388.0 549.3 1384.3 549.3C1380.6 549.3 1378.9 547.9 1375.7 547.9C1372.5 547.9 1370.5 549.4 1367.1 549.3C1363.7 549.2 1360.8 547.9 1357.1 547.1C1353.4 546.3 1350.8 544.9 1347.1 545.0C1343.4 545.1 1340.8 547.6 1337.1 547.9C1333.4 548.2 1331.0 546.4 1327.1 546.4C1323.2 546.4 1319.4 548.0 1315.7 547.9C1312.0 547.8 1308.4 547.7 1307.1 545.7C1305.8 543.7 1307.5 540.2 1308.6 537.1C1309.7 534.0 1311.3 531.7 1312.9 528.6C1314.5 525.5 1316.6 522.9 1317.1 520.0C1317.6 517.1 1317.3 515.0 1315.7 512.9C1314.1 510.8 1310.6 510.7 1308.6 508.6C1306.6 506.5 1304.7 503.8 1305.0 501.4Z"/>
</g>
<g filter="url(#grain)" opacity=".5">
<path d="M113.3 645.0C113.4 643.3 115.8 642.7 117.9 641.9C120.0 641.1 124.0 642.0 124.9 640.4C125.8 638.8 121.5 635.8 122.6 633.4C123.7 631.0 127.6 627.9 131.1 627.2C134.6 626.5 138.5 627.9 141.9 629.5C145.3 631.1 147.3 635.0 149.6 635.7C151.9 636.4 153.2 635.2 154.3 633.4C155.4 631.6 153.3 627.8 155.8 625.7C158.3 623.6 163.9 623.8 168.2 621.8C172.5 619.8 174.2 616.8 179.0 614.8C183.8 612.8 189.1 611.4 194.5 611.0C199.9 610.6 203.1 613.1 208.5 612.5C213.9 611.9 217.7 608.6 223.9 607.9C230.1 607.2 235.4 608.9 242.5 608.6C249.6 608.3 255.5 606.9 262.6 606.3C269.7 605.7 275.8 605.1 281.2 605.5C286.6 605.9 288.9 606.7 292.0 608.6C295.1 610.5 296.8 613.2 298.2 615.6C299.6 618.0 300.6 619.8 299.8 621.8C299.0 623.8 296.7 624.7 293.6 626.4C290.5 628.1 287.0 629.1 282.7 631.1C278.4 633.1 274.9 634.8 270.4 637.3C265.9 639.8 262.8 641.3 258.0 645.0C253.2 648.7 245.1 654.3 244.0 657.4C242.9 660.5 249.9 659.2 251.8 662.0C253.7 664.8 255.5 670.5 254.1 672.9C252.7 675.3 247.8 674.4 244.0 675.2C240.2 676.0 237.7 677.4 233.2 677.5C228.7 677.6 223.8 676.0 219.3 676.0C214.8 676.0 212.5 677.9 208.5 677.5C204.5 677.1 201.9 673.7 197.6 673.6C193.3 673.5 190.0 676.4 185.2 676.7C180.4 677.0 175.3 675.2 171.3 675.2C167.3 675.2 167.3 677.3 163.6 676.7C159.9 676.1 155.2 673.7 151.2 672.1C147.2 670.5 145.3 668.3 141.9 668.2C138.5 668.1 135.1 671.6 132.6 671.3C130.1 671.0 129.1 668.7 128.0 666.7C126.9 664.7 127.8 662.8 126.4 660.5C125.0 658.2 122.0 654.9 120.2 654.3C118.4 653.7 117.7 657.1 116.4 657.4C115.1 657.7 113.2 656.9 113.3 655.8C113.4 654.7 117.1 653.2 117.1 651.2C117.1 649.2 113.2 646.7 113.3 645.0Z"/>
<path d="M97.8 648.9C97.9 648.0 99.1 647.2 100.1 646.9C101.1 646.6 102.4 646.8 103.2 647.3C104.0 647.8 104.6 648.7 104.5 649.6C104.4 650.5 103.4 651.6 102.4 652.0C101.4 652.4 100.1 652.6 99.3 652.0C98.5 651.4 97.7 649.8 97.8 648.9Z"/>
<path d="M472.9 660.0C473.2 658.0 472.7 656.6 475.0 655.0C477.3 653.4 482.4 652.8 485.7 651.4C489.0 650.0 489.5 648.9 492.9 647.1C496.3 645.3 500.6 643.6 504.3 641.4C508.0 639.2 508.7 637.1 512.9 635.0C517.1 632.9 521.9 632.0 527.1 630.0C532.3 628.0 537.2 626.0 541.4 624.3C545.6 622.6 547.9 622.8 550.0 620.7C552.1 618.6 551.9 614.7 552.9 612.9C553.9 611.1 554.4 610.1 555.7 610.7C557.0 611.3 557.4 616.1 560.0 616.4C562.6 616.7 566.6 612.6 570.0 612.1C573.4 611.6 578.1 614.8 578.6 613.6C579.1 612.4 573.4 607.5 572.9 605.7C572.4 603.9 573.6 603.5 575.7 603.6C577.8 603.7 581.7 605.6 584.3 606.4C586.9 607.2 588.8 606.6 590.0 607.9C591.2 609.2 591.5 611.9 590.7 613.6C589.9 615.3 586.0 615.7 585.7 617.1C585.4 618.5 586.7 620.9 589.3 621.4C591.9 621.9 598.2 621.2 600.0 620.0C601.8 618.8 598.8 615.5 599.3 615.0C599.8 614.5 601.2 616.8 602.9 617.1C604.6 617.4 606.5 617.0 608.6 616.4C610.7 615.8 612.3 614.0 614.3 613.6C616.3 613.2 618.3 612.9 619.3 614.3C620.3 615.7 618.3 619.6 620.0 621.4C621.7 623.2 625.1 623.5 628.6 624.3C632.1 625.1 637.2 624.1 639.3 625.7C641.4 627.3 640.9 630.8 640.0 632.9C639.1 635.0 636.4 635.0 634.3 637.1C632.2 639.2 629.4 641.7 628.6 644.3C627.8 646.9 629.0 648.9 630.0 651.4C631.0 653.9 632.5 654.7 634.3 657.9C636.1 661.1 639.2 665.1 640.0 668.6C640.8 672.1 641.0 674.5 638.6 677.1C636.2 679.7 631.0 681.2 627.1 682.9C623.2 684.6 621.0 684.8 617.1 686.4C613.2 688.0 608.8 689.4 605.7 691.4C602.6 693.4 603.4 695.3 600.0 697.1C596.6 698.9 592.1 700.1 587.1 701.4C582.1 702.7 577.6 703.1 572.9 704.3C568.2 705.5 565.6 706.7 561.4 707.9C557.2 709.1 554.7 710.7 550.0 710.7C545.3 710.7 540.9 708.6 535.7 707.9C530.5 707.2 526.1 707.5 521.4 707.1C516.7 706.7 514.5 705.7 510.0 705.7C505.5 705.7 501.8 706.7 497.1 707.1C492.4 707.5 488.2 708.0 484.3 707.9C480.4 707.8 477.8 707.6 475.7 706.4C473.6 705.2 472.6 703.9 472.9 701.4C473.2 698.9 475.5 696.0 477.1 692.9C478.7 689.8 479.8 687.5 481.4 684.3C483.0 681.1 486.2 678.3 485.7 675.7C485.2 673.1 480.8 671.8 478.6 670.0C476.4 668.2 474.6 667.5 473.6 665.7C472.6 663.9 472.6 662.0 472.9 660.0Z"/>
<path d="M749.3 617.1C749.6 615.0 749.9 611.8 752.9 610.0C755.9 608.2 759.9 607.9 765.7 607.1C771.5 606.3 777.5 605.8 784.3 605.7C791.1 605.6 798.2 605.5 802.9 606.4C807.6 607.3 806.6 610.2 810.0 610.7C813.4 611.2 817.7 610.3 821.4 609.3C825.1 608.3 827.5 606.2 830.0 605.0C832.5 603.8 833.8 602.6 835.0 602.9C836.2 603.2 834.7 606.3 836.4 606.4C838.1 606.5 840.8 603.9 844.3 603.6C847.8 603.3 852.2 605.4 855.7 605.0C859.2 604.6 861.6 601.1 863.6 601.4C865.6 601.7 863.4 605.2 866.4 606.4C869.4 607.6 873.6 607.6 880.0 607.9C886.4 608.2 894.1 608.3 901.4 607.9C908.7 607.5 914.5 605.7 920.0 605.7C925.5 605.7 928.5 606.3 931.4 607.9C934.3 609.5 934.3 612.3 935.7 614.3C937.1 616.3 939.2 616.5 939.3 618.6C939.4 620.7 938.4 623.5 936.4 625.7C934.4 627.9 930.4 628.6 928.6 630.7C926.8 632.8 926.3 634.6 926.4 637.1C926.5 639.6 928.9 641.7 929.3 644.3C929.7 646.9 928.1 649.3 928.6 651.4C929.1 653.5 931.8 654.1 932.1 655.7C932.4 657.3 932.5 658.8 930.0 660.0C927.5 661.2 922.5 661.3 918.6 662.1C914.7 662.9 912.3 663.0 908.6 664.3C904.9 665.6 901.8 667.6 898.6 669.3C895.4 671.0 894.8 672.6 891.4 673.6C888.0 674.6 883.7 674.2 880.0 675.0C876.3 675.8 874.5 677.8 871.4 677.9C868.3 678.0 866.0 675.8 862.9 675.7C859.8 675.6 857.7 677.2 854.3 677.1C850.9 677.0 847.7 675.8 844.3 675.0C840.9 674.2 838.9 672.9 835.7 672.9C832.5 672.9 830.8 674.7 827.1 675.0C823.4 675.3 819.9 674.0 815.7 674.3C811.5 674.6 808.2 676.4 804.3 676.4C800.4 676.4 796.9 675.7 794.3 674.3C791.7 672.9 792.1 670.4 790.0 668.6C787.9 666.8 786.6 665.6 782.9 664.3C779.2 663.0 774.5 662.6 770.0 661.4C765.5 660.2 761.0 659.5 758.6 657.9C756.2 656.3 756.6 654.9 757.1 652.9C757.6 650.9 760.9 649.5 761.4 647.1C761.9 644.7 760.6 642.1 760.0 640.0C759.4 637.9 757.8 637.5 757.9 635.7C758.0 633.9 761.4 631.7 760.7 630.0C760.0 628.3 756.0 628.0 754.3 626.4C752.6 624.8 752.3 623.1 751.4 621.4C750.5 619.7 749.0 619.2 749.3 617.1Z"/>
<path d="M1005.2 553.1C1006.0 551.4 1007.0 548.8 1009.8 547.0C1012.6 545.2 1015.2 544.3 1020.5 543.2C1025.8 542.1 1032.4 541.3 1038.8 540.9C1045.2 540.5 1051.0 541.3 1055.5 540.9C1060.0 540.5 1057.8 540.9 1063.1 538.7C1068.4 536.5 1077.2 532.2 1084.5 528.8C1091.8 525.4 1094.9 520.5 1102.7 519.9C1110.5 519.3 1119.8 522.4 1127.1 525.7C1134.4 529.0 1136.7 533.7 1142.3 537.9C1147.9 542.1 1150.6 547.5 1157.6 548.6C1164.6 549.7 1172.0 547.4 1180.4 544.0C1188.8 540.6 1196.9 533.1 1203.3 530.3C1209.7 527.5 1213.1 527.4 1215.5 528.8C1217.9 530.2 1217.3 535.1 1216.2 537.9C1215.1 540.7 1211.8 541.5 1209.4 544.0C1207.0 546.5 1203.9 548.2 1203.3 551.6C1202.7 555.0 1204.4 558.9 1206.3 562.3C1208.2 565.7 1213.1 566.8 1213.9 569.9C1214.7 573.0 1213.4 576.2 1210.9 579.0C1208.4 581.8 1204.1 583.1 1200.2 585.1C1196.3 587.1 1193.2 587.7 1189.6 589.7C1186.0 591.7 1183.5 593.3 1180.4 595.8C1177.3 598.3 1177.0 601.5 1172.8 603.4C1168.6 605.3 1162.6 605.0 1157.6 606.4C1152.6 607.8 1149.6 609.3 1145.4 611.0C1141.2 612.7 1137.2 613.5 1134.7 615.6C1132.2 617.7 1133.6 621.0 1131.7 622.4C1129.8 623.8 1126.1 623.9 1124.1 623.2C1122.1 622.5 1123.0 619.0 1121.0 618.6C1119.0 618.2 1115.3 621.4 1113.4 620.9C1111.5 620.4 1112.9 616.4 1110.4 615.6C1107.9 614.8 1101.1 615.1 1099.7 616.3C1098.3 617.5 1104.9 621.0 1102.7 622.4C1100.5 623.8 1092.5 624.4 1087.5 624.0C1082.5 623.6 1078.4 620.1 1075.3 620.2C1072.2 620.3 1072.7 624.0 1070.7 624.7C1068.7 625.4 1066.3 625.4 1064.6 624.0C1062.9 622.6 1063.5 619.5 1061.6 617.1C1059.7 614.7 1056.5 613.5 1054.0 611.0C1051.5 608.5 1050.4 605.6 1047.9 603.4C1045.4 601.2 1043.9 599.9 1040.3 598.8C1036.7 597.7 1032.3 598.1 1028.1 597.3C1023.9 596.5 1019.9 596.3 1017.4 594.3C1014.9 592.3 1014.4 589.7 1014.4 586.6C1014.4 583.5 1017.1 580.8 1017.4 577.5C1017.7 574.2 1017.3 571.2 1015.9 568.4C1014.5 565.6 1011.8 564.5 1009.8 562.3C1007.8 560.1 1006.0 557.9 1005.2 556.2C1004.4 554.5 1004.4 554.8 1005.2 553.1Z"/>
<path d="M1048.7 307.0C1049.3 305.5 1049.8 304.8 1052.7 304.3C1055.6 303.8 1060.6 304.2 1064.7 304.3C1068.8 304.4 1071.4 304.4 1075.3 305.0C1079.2 305.6 1082.8 306.8 1086.0 307.7C1089.2 308.6 1090.3 309.8 1092.7 309.7C1095.1 309.6 1096.1 308.1 1099.3 307.0C1102.5 305.9 1105.6 304.4 1110.0 303.7C1114.4 303.0 1118.4 303.0 1123.3 303.0C1128.2 303.0 1131.6 303.3 1136.7 303.7C1141.8 304.1 1148.5 303.4 1151.3 305.0C1154.1 306.6 1152.7 310.1 1152.0 312.3C1151.3 314.5 1149.1 315.5 1147.3 317.0C1145.5 318.5 1143.5 318.6 1142.0 320.3C1140.5 322.0 1139.3 324.1 1139.3 326.3C1139.3 328.5 1140.5 330.0 1142.0 332.3C1143.5 334.6 1145.6 336.5 1147.3 339.0C1149.0 341.5 1150.7 343.0 1151.3 345.7C1151.9 348.4 1152.2 352.0 1150.7 353.7C1149.2 355.4 1146.4 354.6 1143.3 355.0C1140.2 355.4 1137.2 355.2 1134.0 355.7C1130.8 356.2 1128.9 357.7 1126.0 357.7C1123.1 357.7 1120.9 355.8 1118.0 355.7C1115.1 355.6 1113.2 357.0 1110.0 357.0C1106.8 357.0 1103.6 356.4 1100.7 355.7C1097.8 355.0 1096.2 353.6 1094.0 353.0C1091.8 352.4 1090.9 351.9 1088.7 352.3C1086.5 352.7 1084.7 354.6 1082.0 355.0C1079.3 355.4 1077.2 354.3 1074.0 354.3C1070.8 354.3 1067.9 354.6 1064.7 355.0C1061.5 355.4 1059.3 356.5 1056.7 356.3C1054.1 356.1 1051.9 355.4 1050.7 353.7C1049.5 352.0 1049.4 349.5 1050.0 347.0C1050.6 344.5 1052.8 342.7 1054.0 340.3C1055.2 337.9 1055.5 336.1 1056.7 333.7C1057.9 331.3 1060.5 329.2 1060.7 327.0C1060.9 324.8 1059.5 323.7 1058.0 321.7C1056.5 319.7 1054.3 318.0 1052.7 316.3C1051.1 314.6 1050.0 314.0 1049.3 312.3C1048.6 310.6 1048.1 308.5 1048.7 307.0Z"/>
<path d="M1003.3 254.3C1003.6 253.3 1006.2 252.5 1008.7 252.1C1011.2 251.7 1013.8 252.0 1016.7 252.3C1019.6 252.6 1022.5 253.0 1024.7 253.7C1026.9 254.4 1029.0 255.3 1028.7 256.1C1028.4 256.9 1025.8 257.5 1023.3 257.9C1020.8 258.3 1018.2 258.4 1015.3 258.3C1012.4 258.2 1009.5 258.1 1007.3 257.4C1005.1 256.7 1003.0 255.3 1003.3 254.3Z"/>
<path d="M1028.7 263.7C1029.7 262.7 1031.3 261.5 1034.0 261.7C1036.7 261.9 1039.6 263.8 1043.3 265.0C1047.0 266.2 1050.1 267.1 1054.0 268.3C1057.9 269.5 1062.1 270.6 1064.7 271.7C1067.3 272.8 1067.8 273.3 1068.0 274.3C1068.2 275.3 1067.3 276.0 1066.0 277.0C1064.7 278.0 1063.6 279.6 1060.7 279.7C1057.8 279.8 1053.9 278.7 1050.0 277.7C1046.1 276.7 1042.7 275.5 1039.3 274.3C1035.9 273.1 1033.2 272.3 1031.3 271.0C1029.4 269.7 1029.2 268.3 1028.7 267.0C1028.2 265.7 1027.7 264.7 1028.7 263.7Z"/>
<path d="M1305.0 501.4C1305.3 499.0 1306.7 497.1 1310.0 495.7C1313.3 494.3 1319.0 495.0 1322.9 493.6C1326.8 492.2 1327.5 489.7 1331.4 487.9C1335.3 486.1 1340.4 484.3 1344.3 483.6C1348.2 482.9 1349.2 484.3 1352.9 484.3C1356.6 484.3 1360.1 484.4 1364.3 483.6C1368.5 482.8 1371.8 480.7 1375.7 480.0C1379.6 479.3 1383.1 479.5 1385.7 480.0C1388.3 480.5 1387.6 483.2 1390.0 482.9C1392.4 482.6 1394.7 480.2 1398.6 478.6C1402.5 477.0 1407.2 475.9 1411.4 474.3C1415.6 472.7 1418.5 471.4 1421.4 470.0C1424.3 468.6 1425.4 468.5 1427.1 466.4C1428.8 464.3 1429.6 461.1 1430.7 458.6C1431.8 456.1 1431.7 454.7 1432.9 452.9C1434.1 451.1 1436.6 450.7 1437.1 448.6C1437.6 446.5 1436.1 443.8 1435.7 441.4C1435.3 439.0 1434.2 437.3 1435.0 435.7C1435.8 434.1 1436.5 433.7 1440.0 432.9C1443.5 432.1 1449.1 431.9 1454.3 431.4C1459.5 430.9 1464.7 430.8 1468.6 430.0C1472.5 429.2 1473.4 427.4 1475.7 427.1C1478.0 426.8 1479.8 427.8 1481.4 428.6C1483.0 429.4 1483.3 430.9 1484.3 431.4C1485.3 431.9 1486.6 423.0 1487.1 431.4C1487.6 439.8 1487.6 468.4 1487.1 477.1C1486.6 485.8 1486.4 477.5 1484.3 478.6C1482.2 479.7 1478.6 481.6 1475.7 482.9C1472.8 484.2 1470.7 484.1 1468.6 485.7C1466.5 487.3 1466.1 489.8 1464.3 491.4C1462.5 493.0 1461.2 493.0 1458.6 494.3C1456.0 495.6 1453.7 497.3 1450.0 498.6C1446.3 499.9 1442.8 500.1 1438.6 501.4C1434.4 502.7 1431.3 504.1 1427.1 505.7C1422.9 507.3 1419.4 508.7 1415.7 510.0C1412.0 511.3 1410.8 511.7 1407.1 512.9C1403.4 514.1 1398.0 514.6 1395.7 516.4C1393.4 518.2 1393.8 520.4 1394.3 522.9C1394.8 525.4 1396.8 527.7 1398.6 530.0C1400.4 532.3 1403.0 532.8 1404.3 535.7C1405.6 538.6 1407.3 543.5 1405.7 545.7C1404.1 547.9 1399.6 547.2 1395.7 547.9C1391.8 548.6 1388.0 549.3 1384.3 549.3C1380.6 549.3 1378.9 547.9 1375.7 547.9C1372.5 547.9 1370.5 549.4 1367.1 549.3C1363.7 549.2 1360.8 547.9 1357.1 547.1C1353.4 546.3 1350.8 544.9 1347.1 545.0C1343.4 545.1 1340.8 547.6 1337.1 547.9C1333.4 548.2 1331.0 546.4 1327.1 546.4C1323.2 546.4 1319.4 548.0 1315.7 547.9C1312.0 547.8 1308.4 547.7 1307.1 545.7C1305.8 543.7 1307.5 540.2 1308.6 537.1C1309.7 534.0 1311.3 531.7 1312.9 528.6C1314.5 525.5 1316.6 522.9 1317.1 520.0C1317.6 517.1 1317.3 515.0 1315.7 512.9C1314.1 510.8 1310.6 510.7 1308.6 508.6C1306.6 506.5 1304.7 503.8 1305.0 501.4Z"/>
<path d="M1422.9 466.4C1422.3 464.3 1421.2 459.0 1421.7 455.7C1422.2 452.4 1423.9 451.4 1425.4 448.6C1426.9 445.8 1428.7 441.1 1429.7 440.3C1430.7 439.5 1431.5 442.0 1431.1 444.3C1430.7 446.6 1428.5 450.0 1427.4 452.9C1426.3 455.8 1425.5 457.3 1425.1 460.0C1424.7 462.7 1425.5 466.2 1425.1 467.4C1424.7 468.6 1423.5 468.5 1422.9 466.4Z"/>
<path d="M1411.4 519.3C1412.2 518.5 1416.0 518.7 1418.6 517.9C1421.2 517.1 1424.1 515.0 1425.7 514.7C1427.3 514.4 1428.2 515.4 1427.4 516.4C1426.6 517.4 1423.8 519.2 1421.4 520.3C1419.0 521.4 1416.1 522.5 1414.3 522.3C1412.5 522.1 1410.6 520.1 1411.4 519.3Z"/>
</g>
<g filter="url(#hrough)">
<path d="M120.6 636.6Q127.3 626.5 135.6 626.5Q149.0 627.3 154.0 637.4Q142.3 643.3 132.3 642.5Q124.0 641.6 120.6 636.6Z" fill="#7a783f"/>
<path d="M134.0 635.7Q145.6 632.4 154.0 637.4Q142.3 643.3 132.3 642.5Q135.6 638.3 134.0 635.7Z" fill="#4c4c26" opacity=".9"/>
<path d="M123.1 635.3Q129.0 627.8 136.5 627.8Q130.6 632.4 129.0 637.4Z" fill="#b9b288" opacity=".85"/>
<path d="M145.3 651.6Q153.9 639.4 164.6 639.4Q181.7 640.4 188.1 652.7Q173.1 659.8 160.3 658.8Q149.6 657.8 145.3 651.6Z" fill="#7a783f"/>
<path d="M162.4 650.6Q177.4 646.5 188.1 652.7Q173.1 659.8 160.3 658.8Q164.6 653.7 162.4 650.6Z" fill="#4c4c26" opacity=".9"/>
<path d="M148.5 650.1Q156.0 640.9 165.6 640.9Q158.2 646.5 156.0 652.7Z" fill="#b9b288" opacity=".85"/>
<path d="M180.9 635.2Q189.5 624.2 200.2 624.2Q217.3 625.1 223.7 636.2Q208.7 642.6 195.9 641.7Q185.2 640.8 180.9 635.2Z" fill="#7a783f"/>
<path d="M198.0 634.3Q213.0 630.6 223.7 636.2Q208.7 642.6 195.9 641.7Q200.2 637.1 198.0 634.3Z" fill="#4c4c26" opacity=".9"/>
<path d="M184.1 633.9Q191.6 625.5 201.2 625.5Q193.8 630.6 191.6 636.2Z" fill="#b9b288" opacity=".85"/>
<path d="M214.0 619.9Q222.9 607.7 234.1 607.7Q251.9 608.7 258.6 621.0Q243.0 628.1 229.6 627.1Q218.4 626.1 214.0 619.9Z" fill="#7a783f"/>
<path d="M231.8 618.9Q247.5 614.8 258.6 621.0Q243.0 628.1 229.6 627.1Q234.1 622.0 231.8 618.9Z" fill="#4c4c26" opacity=".9"/>
<path d="M217.3 618.4Q225.1 609.2 235.2 609.2Q227.4 614.8 225.1 621.0Z" fill="#b9b288" opacity=".85"/>
<path d="M500.9 667.6Q509.1 656.2 519.3 656.2Q535.8 657.2 541.9 668.5Q527.6 675.2 515.2 674.2Q505.0 673.3 500.9 667.6Z" fill="#7a783f"/>
<path d="M517.3 666.6Q531.7 662.9 541.9 668.5Q527.6 675.2 515.2 674.2Q519.3 669.5 517.3 666.6Z" fill="#4c4c26" opacity=".9"/>
<path d="M504.0 666.2Q511.1 657.6 520.4 657.6Q513.2 662.9 511.1 668.5Z" fill="#b9b288" opacity=".85"/>
<path d="M530.0 653.6Q540.3 640.2 553.1 640.2Q573.7 641.4 581.4 654.7Q563.4 662.6 548.0 661.4Q535.2 660.3 530.0 653.6Z" fill="#7a783f"/>
<path d="M550.6 652.5Q568.5 648.1 581.4 654.7Q563.4 662.6 548.0 661.4Q553.1 655.9 550.6 652.5Z" fill="#4c4c26" opacity=".9"/>
<path d="M533.9 652.0Q542.9 641.9 554.4 641.9Q545.4 648.1 542.9 654.7Z" fill="#b9b288" opacity=".85"/>
<path d="M558.9 636.7Q568.5 622.3 580.5 622.3Q599.7 623.5 606.9 637.9Q590.1 646.3 575.7 645.1Q563.7 643.9 558.9 636.7Z" fill="#7a783f"/>
<path d="M578.1 635.5Q594.9 630.7 606.9 637.9Q590.1 646.3 575.7 645.1Q580.5 639.1 578.1 635.5Z" fill="#4c4c26" opacity=".9"/>
<path d="M562.5 634.9Q570.9 624.1 581.7 624.1Q573.3 630.7 570.9 637.9Z" fill="#b9b288" opacity=".85"/>
<path d="M596.6 633.9Q601.4 627.7 607.4 627.7Q617.0 628.3 620.6 634.4Q612.2 638.1 605.0 637.5Q599.0 637.0 596.6 633.9Z" fill="#7a783f"/>
<path d="M606.2 633.4Q614.6 631.4 620.6 634.4Q612.2 638.1 605.0 637.5Q607.4 635.0 606.2 633.4Z" fill="#4c4c26" opacity=".9"/>
<path d="M598.4 633.2Q602.6 628.5 608.0 628.5Q603.8 631.4 602.6 634.4Z" fill="#b9b288" opacity=".85"/>
<path d="M540.3 687.8Q549.9 675.4 561.9 675.4Q581.1 676.4 588.3 688.8Q571.5 696.0 557.1 695.0Q545.1 694.0 540.3 687.8Z" fill="#7a783f"/>
<path d="M559.5 686.7Q576.3 682.6 588.3 688.8Q571.5 696.0 557.1 695.0Q561.9 689.8 559.5 686.7Z" fill="#4c4c26" opacity=".9"/>
<path d="M543.9 686.2Q552.3 676.9 563.1 676.9Q554.7 682.6 552.3 688.8Z" fill="#b9b288" opacity=".85"/>
<path d="M572.8 672.9Q579.7 663.7 588.3 663.7Q602.0 664.5 607.2 673.7Q595.1 679.1 584.9 678.3Q576.3 677.5 572.8 672.9Z" fill="#7a783f"/>
<path d="M586.6 672.2Q598.6 669.1 607.2 673.7Q595.1 679.1 584.9 678.3Q588.3 674.5 586.6 672.2Z" fill="#4c4c26" opacity=".9"/>
<path d="M575.4 671.8Q581.4 664.9 589.1 664.9Q583.1 669.1 581.4 673.7Z" fill="#b9b288" opacity=".85"/>
<path d="M756.3 635.1Q765.2 625.9 776.4 625.9Q794.2 626.7 800.9 635.9Q785.3 641.3 771.9 640.5Q760.7 639.7 756.3 635.1Z" fill="#7a783f"/>
<path d="M774.1 634.4Q789.8 631.3 800.9 635.9Q785.3 641.3 771.9 640.5Q776.4 636.7 774.1 634.4Z" fill="#4c4c26" opacity=".9"/>
<path d="M759.6 634.0Q767.4 627.1 777.5 627.1Q769.7 631.3 767.4 635.9Z" fill="#b9b288" opacity=".85"/>
<path d="M757.4 645.3Q763.6 639.1 771.4 639.1Q783.7 639.7 788.4 645.8Q777.5 649.5 768.3 648.9Q760.5 648.4 757.4 645.3Z" fill="#7a783f"/>
<path d="M769.8 644.8Q780.6 642.8 788.4 645.8Q777.5 649.5 768.3 648.9Q771.4 646.4 769.8 644.8Z" fill="#4c4c26" opacity=".9"/>
<path d="M759.7 644.6Q765.2 639.9 772.1 639.9Q766.7 642.8 765.2 645.8Z" fill="#b9b288" opacity=".85"/>
<path d="M781.7 649.0Q791.3 637.6 803.3 637.6Q822.5 638.6 829.7 649.9Q812.9 656.6 798.5 655.6Q786.5 654.7 781.7 649.0Z" fill="#7a783f"/>
<path d="M800.9 648.0Q817.7 644.3 829.7 649.9Q812.9 656.6 798.5 655.6Q803.3 650.9 800.9 648.0Z" fill="#4c4c26" opacity=".9"/>
<path d="M785.3 647.6Q793.7 639.0 804.5 639.0Q796.1 644.3 793.7 649.9Z" fill="#b9b288" opacity=".85"/>
<path d="M799.4 660.3Q804.2 654.1 810.2 654.1Q819.8 654.7 823.4 660.8Q815.0 664.5 807.8 663.9Q801.8 663.4 799.4 660.3Z" fill="#7a783f"/>
<path d="M809.0 659.8Q817.4 657.8 823.4 660.8Q815.0 664.5 807.8 663.9Q810.2 661.4 809.0 659.8Z" fill="#4c4c26" opacity=".9"/>
<path d="M801.2 659.6Q805.4 654.9 810.8 654.9Q806.6 657.8 805.4 660.8Z" fill="#b9b288" opacity=".85"/>
<path d="M815.5 630.1Q823.0 620.9 832.4 620.9Q847.5 621.7 853.1 630.9Q840.0 636.3 828.6 635.5Q819.2 634.7 815.5 630.1Z" fill="#7a783f"/>
<path d="M830.5 629.4Q843.7 626.3 853.1 630.9Q840.0 636.3 828.6 635.5Q832.4 631.7 830.5 629.4Z" fill="#4c4c26" opacity=".9"/>
<path d="M818.3 629.0Q824.9 622.1 833.4 622.1Q826.8 626.3 824.9 630.9Z" fill="#b9b288" opacity=".85"/>
<path d="M829.2 641.5Q834.7 632.3 841.5 632.3Q852.5 633.1 856.6 642.3Q847.0 647.7 838.8 646.9Q832.0 646.1 829.2 641.5Z" fill="#7a783f"/>
<path d="M840.2 640.8Q849.7 637.7 856.6 642.3Q847.0 647.7 838.8 646.9Q841.5 643.1 840.2 640.8Z" fill="#4c4c26" opacity=".9"/>
<path d="M831.3 640.4Q836.1 633.5 842.2 633.5Q837.4 637.7 836.1 642.3Z" fill="#b9b288" opacity=".85"/>
<path d="M850.9 634.6Q855.7 628.4 861.7 628.4Q871.3 629.0 874.9 635.1Q866.5 638.8 859.3 638.2Q853.3 637.7 850.9 634.6Z" fill="#7a783f"/>
<path d="M860.5 634.1Q868.9 632.1 874.9 635.1Q866.5 638.8 859.3 638.2Q861.7 635.7 860.5 634.1Z" fill="#4c4c26" opacity=".9"/>
<path d="M852.7 633.9Q856.9 629.2 862.3 629.2Q858.1 632.1 856.9 635.1Z" fill="#b9b288" opacity=".85"/>
<path d="M860.3 656.4Q869.9 644.0 881.9 644.0Q901.1 645.0 908.3 657.4Q891.5 664.6 877.1 663.6Q865.1 662.6 860.3 656.4Z" fill="#7a783f"/>
<path d="M879.5 655.3Q896.3 651.2 908.3 657.4Q891.5 664.6 877.1 663.6Q881.9 658.4 879.5 655.3Z" fill="#4c4c26" opacity=".9"/>
<path d="M863.9 654.8Q872.3 645.5 883.1 645.5Q874.7 651.2 872.3 657.4Z" fill="#b9b288" opacity=".85"/>
<path d="M891.2 642.8Q898.7 634.6 908.1 634.6Q923.2 635.2 928.8 643.5Q915.7 648.2 904.3 647.6Q894.9 646.9 891.2 642.8Z" fill="#7a783f"/>
<path d="M906.2 642.1Q919.4 639.3 928.8 643.5Q915.7 648.2 904.3 647.6Q908.1 644.1 906.2 642.1Z" fill="#4c4c26" opacity=".9"/>
<path d="M894.0 641.7Q900.6 635.6 909.1 635.6Q902.5 639.3 900.6 643.5Z" fill="#b9b288" opacity=".85"/>
<path d="M1145.0 570.6Q1153.1 557.5 1163.2 557.5Q1179.3 558.6 1185.4 571.7Q1171.2 579.3 1159.2 578.2Q1149.1 577.1 1145.0 570.6Z" fill="#7a783f"/>
<path d="M1161.2 569.5Q1175.3 565.1 1185.4 571.7Q1171.2 579.3 1159.2 578.2Q1163.2 572.8 1161.2 569.5Z" fill="#4c4c26" opacity=".9"/>
<path d="M1148.1 568.9Q1155.1 559.1 1164.2 559.1Q1157.1 565.1 1155.1 571.7Z" fill="#b9b288" opacity=".85"/>
<path d="M1128.0 582.7Q1136.8 569.6 1147.8 569.6Q1165.4 570.7 1172.0 583.8Q1156.6 591.4 1143.4 590.3Q1132.4 589.2 1128.0 582.7Z" fill="#7a783f"/>
<path d="M1145.6 581.6Q1161.0 577.2 1172.0 583.8Q1156.6 591.4 1143.4 590.3Q1147.8 584.9 1145.6 581.6Z" fill="#4c4c26" opacity=".9"/>
<path d="M1131.3 581.0Q1139.0 571.2 1148.9 571.2Q1141.2 577.2 1139.0 583.8Z" fill="#b9b288" opacity=".85"/>
<path d="M1149.4 594.0Q1154.5 586.3 1160.9 586.3Q1171.2 587.0 1175.0 594.6Q1166.1 599.1 1158.3 598.4Q1151.9 597.8 1149.4 594.0Z" fill="#7a783f"/>
<path d="M1159.6 593.3Q1168.6 590.8 1175.0 594.6Q1166.1 599.1 1158.3 598.4Q1160.9 595.2 1159.6 593.3Z" fill="#4c4c26" opacity=".9"/>
<path d="M1151.3 593.0Q1155.8 587.3 1161.6 587.3Q1157.1 590.8 1155.8 594.6Z" fill="#b9b288" opacity=".85"/>
<path d="M1055.3 579.9Q1059.6 574.4 1065.1 574.4Q1073.8 574.9 1077.1 580.4Q1069.5 583.6 1062.9 583.1Q1057.5 582.6 1055.3 579.9Z" fill="#7a783f"/>
<path d="M1064.0 579.5Q1071.7 577.6 1077.1 580.4Q1069.5 583.6 1062.9 583.1Q1065.1 580.8 1064.0 579.5Z" fill="#4c4c26" opacity=".9"/>
<path d="M1056.9 579.2Q1060.7 575.1 1065.7 575.1Q1061.8 577.6 1060.7 580.4Z" fill="#b9b288" opacity=".85"/>
</g>
</g>
<g transform="translate(-51,555)" filter="url(#tex)"><polygon points="12.6,25.2 75.6,56.7 63.0,63.0 0.0,31.5" fill="#6d685c"/><polygon points="103.3,32.8 113.4,37.8 63.0,63.0 52.9,58.0" fill="#6d685c"/><polygon points="10.1,27.7 70.6,58.0 66.1,60.2 5.7,29.9" fill="#8b8474"/><polygon points="104.0,35.6 107.7,37.5 72.4,55.1 68.7,53.2" fill="#8b8474"/><polygon points="74.8,19.3 80.8,22.3 43.0,41.2 37.0,38.2" fill="#4a463c"/><polygon points="74.3,19.5 78.8,21.7 42.2,40.0 37.8,37.8" fill="#9d937f"/><polygon points="91.9,21.5 97.8,24.5 53.7,46.5 47.8,43.6" fill="#4a463c"/><polygon points="91.3,21.7 95.8,23.9 52.9,45.4 48.5,43.2" fill="#9d937f"/><polygon points="81.1,37.0 86.4,39.6 63.1,51.3 57.8,48.6" fill="#4a463c"/><polygon points="80.6,37.2 84.4,39.1 62.4,50.1 58.6,48.2" fill="#9d937f"/><polygon points="76.2,12.9 78.1,13.9 45.4,30.2 38.4,31.8" fill="#3a3a34"/><polygon points="1.3,30.9 7.6,34.0 7.6,30.0 1.3,26.9" fill="#8a8676"/><polygon points="18.9,28.4 7.6,34.0 7.6,30.0 18.9,24.4" fill="#a8a492"/><polygon points="12.6,21.2 18.9,24.4 7.6,30.0 1.3,26.9" fill="#c8c4b2"/><polygon points="8.2,34.3 13.9,37.2 13.9,33.7 8.2,30.8" fill="#7e7a6a"/><polygon points="25.2,31.5 13.9,37.2 13.9,33.7 25.2,28.0" fill="#9c9886"/><polygon points="19.5,25.2 25.2,28.0 13.9,33.7 8.2,30.8" fill="#bcb8a6"/><polygon points="20.8,40.0 25.8,42.5 25.8,40.0 20.8,37.5" fill="#8a8676"/><polygon points="32.8,39.1 25.8,42.5 25.8,40.0 32.8,36.6" fill="#aca896"/><polygon points="27.7,34.0 32.8,36.6 25.8,40.0 20.8,37.5" fill="#d0ccba"/><polygon points="27.1,43.2 32.1,45.7 32.1,43.2 27.1,40.7" fill="#7e7a6a"/><polygon points="39.1,42.2 32.1,45.7 32.1,43.2 39.1,39.7" fill="#a09c8a"/><polygon points="34.0,37.2 39.1,39.7 32.1,43.2 27.1,40.7" fill="#c4c0ae"/><polygon points="34.0,47.2 37.8,49.1 37.8,47.1 34.0,45.2" fill="#7e7a6a"/><polygon points="42.8,46.6 37.8,49.1 37.8,47.1 42.8,44.6" fill="#9c9886"/><polygon points="39.1,42.7 42.8,44.6 37.8,47.1 34.0,45.2" fill="#bcb8a6"/><polygon points="56.1,57.6 63.0,61.1 63.0,59.1 56.1,55.6" fill="#6e6a5a"/><polygon points="70.6,57.3 63.0,61.1 63.0,59.1 70.6,55.3" fill="#8c8876"/><polygon points="63.6,51.9 70.6,55.3 63.0,59.1 56.1,55.6" fill="#a8a492"/><ellipse cx="23.3" cy="34.6" rx="4.5" ry="2.6" fill="#cfcfc8" stroke="#5a5a50" stroke-width=".7"/><g fill="none" stroke-linecap="round"><path d="M87.3 42.5L89.8 30.5M95.3 43.5L92.8 30.5M87.8 39.5L93.8 35.5M94.8 40.5L88.8 35.5M89.1 34.5L93.1 31.5M93.5 34.5L89.5 31.5" stroke="#e8e8e0" stroke-width="1.1"/><path d="M95.3 43.5L98.3 41.5L94.3 31.5" stroke="#5a564a" stroke-width="1"/><rect x="90.3" y="27.0" width="7.500" height="4" fill="#4a463c" stroke="none"/><rect x="88.8" y="28.0" width="4" height="3.200" fill="#c8c4b4" stroke="none"/><path d="M91.3 29.5L81.4 9.5" stroke="#f4f4ec" stroke-width="1.3"/><path d="M92.5 29.5L82.6 9.5" stroke="#6a665a" stroke-width=".7"/></g><g fill="none" stroke-linecap="round"><path d="M63.4 52.6L65.9 40.6M71.4 53.6L68.9 40.6M63.9 49.6L69.9 45.6M70.9 50.6L64.9 45.6M65.2 44.6L69.2 41.6M69.6 44.6L65.6 41.6" stroke="#e8e8e0" stroke-width="1.1"/><path d="M71.4 53.6L74.4 51.6L70.4 41.6" stroke="#5a564a" stroke-width="1"/><rect x="66.4" y="37.1" width="7.500" height="4" fill="#4a463c" stroke="none"/><rect x="64.9" y="38.1" width="4" height="3.200" fill="#c8c4b4" stroke="none"/><path d="M67.4 39.6L57.4 19.6" stroke="#f4f4ec" stroke-width="1.3"/><path d="M68.6 39.6L58.6 19.6" stroke="#6a665a" stroke-width=".7"/></g></g>
<g transform="translate(205,619)" filter="url(#tex)"><polygon points="63.0,0.0 75.6,6.3 12.6,37.8 0.0,31.5" fill="#6d685c"/><polygon points="63.0,0.0 126.0,31.5 113.4,37.8 50.4,6.3" fill="#6d685c"/><polygon points="63.6,3.5 68.0,5.7 11.3,34.0 6.9,31.8" fill="#8b8474"/><polygon points="71.8,8.2 120.3,32.4 115.9,34.7 67.4,10.4" fill="#8b8474"/><polygon points="43.6,23.1 71.3,37.0 64.8,40.2 37.0,26.4" fill="#4a463c"/><polygon points="42.8,22.7 69.3,35.9 64.3,38.4 37.8,25.2" fill="#9d937f"/><polygon points="57.5,16.2 94.0,34.4 87.4,37.7 50.9,19.4" fill="#4a463c"/><polygon points="56.7,15.8 92.0,33.4 86.9,35.9 51.7,18.3" fill="#9d937f"/><polygon points="36.5,28.4 59.2,39.7 61.1,42.5 34.7,29.3" fill="#3a3a34"/><polygon points="52.9,6.3 61.7,10.7 61.7,6.7 52.9,2.3" fill="#8a8676"/><polygon points="71.8,5.7 61.7,10.7 61.7,6.7 71.8,1.7" fill="#a8a492"/><polygon points="63.0,-2.7 71.8,1.7 61.7,6.7 52.9,2.3" fill="#c8c4b2"/><polygon points="66.8,12.0 74.3,15.8 74.3,12.2 66.8,8.5" fill="#7e7a6a"/><polygon points="83.2,11.3 74.3,15.8 74.3,12.2 83.2,7.8" fill="#9c9886"/><polygon points="75.6,4.1 83.2,7.8 74.3,12.2 66.8,8.5" fill="#bcb8a6"/><polygon points="78.8,17.3 85.0,20.5 85.0,18.0 78.8,14.8" fill="#8a8676"/><polygon points="92.6,16.7 85.0,20.5 85.0,18.0 92.6,14.2" fill="#aca896"/><polygon points="86.3,11.0 92.6,14.2 85.0,18.0 78.8,14.8" fill="#d0ccba"/><polygon points="87.6,21.7 93.9,24.9 93.9,22.4 87.6,19.2" fill="#7e7a6a"/><polygon points="101.4,21.1 93.9,24.9 93.9,22.4 101.4,18.6" fill="#a09c8a"/><polygon points="95.1,15.5 101.4,18.6 93.9,22.4 87.6,19.2" fill="#c4c0ae"/><polygon points="98.3,26.5 103.3,29.0 103.3,27.0 98.3,24.5" fill="#7e7a6a"/><polygon points="109.6,25.8 103.3,29.0 103.3,27.0 109.6,23.8" fill="#9c9886"/><polygon points="104.6,21.3 109.6,23.8 103.3,27.0 98.3,24.5" fill="#bcb8a6"/><polygon points="3.8,30.9 11.3,34.7 11.3,32.2 3.8,28.4" fill="#6e6a5a"/><polygon points="22.7,29.0 11.3,34.7 11.3,32.2 22.7,26.5" fill="#8c8876"/><polygon points="15.1,22.7 22.7,26.5 11.3,32.2 3.8,28.4" fill="#b0ac9a"/><ellipse cx="75.0" cy="11.9" rx="4.5" ry="2.6" fill="#cfcfc8" stroke="#5a5a50" stroke-width=".7"/><g fill="none" stroke-linecap="round"><path d="M28.8 29.0L31.3 17.0M36.8 30.0L34.3 17.0M29.3 26.0L35.3 22.0M36.3 27.0L30.3 22.0M30.6 21.0L34.6 18.0M35.0 21.0L31.0 18.0" stroke="#e8e8e0" stroke-width="1.1"/><path d="M36.8 30.0L39.8 28.0L35.8 18.0" stroke="#5a564a" stroke-width="1"/><rect x="31.8" y="13.5" width="7.500" height="4" fill="#4a463c" stroke="none"/><rect x="30.3" y="14.5" width="4" height="3.200" fill="#c8c4b4" stroke="none"/><path d="M32.8 16.0L18.5 12.0" stroke="#f4f4ec" stroke-width="1.3"/><path d="M34.0 16.0L19.7 12.0" stroke="#6a665a" stroke-width=".7"/></g><g fill="none" stroke-linecap="round"><path d="M106.2 29.3L108.8 17.3M114.2 30.3L111.8 17.3M106.8 26.3L112.8 22.3M113.8 27.3L107.8 22.3M108.0 21.3L112.0 18.3M112.5 21.3L108.5 18.3" stroke="#e8e8e0" stroke-width="1.1"/><path d="M114.2 30.3L117.2 28.3L113.2 18.3" stroke="#5a564a" stroke-width="1"/><rect x="109.2" y="13.8" width="7.500" height="4" fill="#4a463c" stroke="none"/><rect x="107.8" y="14.8" width="4" height="3.200" fill="#c8c4b4" stroke="none"/><path d="M110.2 16.3L96.0 12.3" stroke="#f4f4ec" stroke-width="1.3"/><path d="M111.5 16.3L97.2 12.3" stroke="#6a665a" stroke-width=".7"/></g></g>
<g transform="translate(1101,491)" filter="url(#tex)"><polygon points="12.6,25.2 75.6,56.7 63.0,63.0 0.0,31.5" fill="#6d685c"/><polygon points="103.3,32.8 113.4,37.8 63.0,63.0 52.9,58.0" fill="#6d685c"/><polygon points="10.1,27.7 70.6,58.0 66.1,60.2 5.7,29.9" fill="#8b8474"/><polygon points="104.0,35.6 107.7,37.5 72.4,55.1 68.7,53.2" fill="#8b8474"/><polygon points="74.8,19.3 80.8,22.3 43.0,41.2 37.0,38.2" fill="#4a463c"/><polygon points="74.3,19.5 78.8,21.7 42.2,40.0 37.8,37.8" fill="#9d937f"/><polygon points="91.9,21.5 97.8,24.5 53.7,46.5 47.8,43.6" fill="#4a463c"/><polygon points="91.3,21.7 95.8,23.9 52.9,45.4 48.5,43.2" fill="#9d937f"/><polygon points="81.1,37.0 86.4,39.6 63.1,51.3 57.8,48.6" fill="#4a463c"/><polygon points="80.6,37.2 84.4,39.1 62.4,50.1 58.6,48.2" fill="#9d937f"/><polygon points="76.2,12.9 78.1,13.9 45.4,30.2 38.4,31.8" fill="#3a3a34"/><polygon points="1.3,30.9 7.6,34.0 7.6,30.0 1.3,26.9" fill="#8a8676"/><polygon points="18.9,28.4 7.6,34.0 7.6,30.0 18.9,24.4" fill="#a8a492"/><polygon points="12.6,21.2 18.9,24.4 7.6,30.0 1.3,26.9" fill="#c8c4b2"/><polygon points="8.2,34.3 13.9,37.2 13.9,33.7 8.2,30.8" fill="#7e7a6a"/><polygon points="25.2,31.5 13.9,37.2 13.9,33.7 25.2,28.0" fill="#9c9886"/><polygon points="19.5,25.2 25.2,28.0 13.9,33.7 8.2,30.8" fill="#bcb8a6"/><polygon points="20.8,40.0 25.8,42.5 25.8,40.0 20.8,37.5" fill="#8a8676"/><polygon points="32.8,39.1 25.8,42.5 25.8,40.0 32.8,36.6" fill="#aca896"/><polygon points="27.7,34.0 32.8,36.6 25.8,40.0 20.8,37.5" fill="#d0ccba"/><polygon points="27.1,43.2 32.1,45.7 32.1,43.2 27.1,40.7" fill="#7e7a6a"/><polygon points="39.1,42.2 32.1,45.7 32.1,43.2 39.1,39.7" fill="#a09c8a"/><polygon points="34.0,37.2 39.1,39.7 32.1,43.2 27.1,40.7" fill="#c4c0ae"/><polygon points="34.0,47.2 37.8,49.1 37.8,47.1 34.0,45.2" fill="#7e7a6a"/><polygon points="42.8,46.6 37.8,49.1 37.8,47.1 42.8,44.6" fill="#9c9886"/><polygon points="39.1,42.7 42.8,44.6 37.8,47.1 34.0,45.2" fill="#bcb8a6"/><polygon points="56.1,57.6 63.0,61.1 63.0,59.1 56.1,55.6" fill="#6e6a5a"/><polygon points="70.6,57.3 63.0,61.1 63.0,59.1 70.6,55.3" fill="#8c8876"/><polygon points="63.6,51.9 70.6,55.3 63.0,59.1 56.1,55.6" fill="#a8a492"/><ellipse cx="23.3" cy="34.6" rx="4.5" ry="2.6" fill="#cfcfc8" stroke="#5a5a50" stroke-width=".7"/><g fill="none" stroke-linecap="round"><path d="M87.3 42.5L89.8 30.5M95.3 43.5L92.8 30.5M87.8 39.5L93.8 35.5M94.8 40.5L88.8 35.5M89.1 34.5L93.1 31.5M93.5 34.5L89.5 31.5" stroke="#e8e8e0" stroke-width="1.1"/><path d="M95.3 43.5L98.3 41.5L94.3 31.5" stroke="#5a564a" stroke-width="1"/><rect x="90.3" y="27.0" width="7.500" height="4" fill="#4a463c" stroke="none"/><rect x="88.8" y="28.0" width="4" height="3.200" fill="#c8c4b4" stroke="none"/><path d="M91.3 29.5L81.4 9.5" stroke="#f4f4ec" stroke-width="1.3"/><path d="M92.5 29.5L82.6 9.5" stroke="#6a665a" stroke-width=".7"/></g><g fill="none" stroke-linecap="round"><path d="M63.4 52.6L65.9 40.6M71.4 53.6L68.9 40.6M63.9 49.6L69.9 45.6M70.9 50.6L64.9 45.6M65.2 44.6L69.2 41.6M69.6 44.6L65.6 41.6" stroke="#e8e8e0" stroke-width="1.1"/><path d="M71.4 53.6L74.4 51.6L70.4 41.6" stroke="#5a564a" stroke-width="1"/><rect x="66.4" y="37.1" width="7.500" height="4" fill="#4a463c" stroke="none"/><rect x="64.9" y="38.1" width="4" height="3.200" fill="#c8c4b4" stroke="none"/><path d="M67.4 39.6L57.4 19.6" stroke="#f4f4ec" stroke-width="1.3"/><path d="M68.6 39.6L58.6 19.6" stroke="#6a665a" stroke-width=".7"/></g></g>
<g transform="translate(1037,523)" filter="url(#tex)"><polygon points="11.2,34.3 16.8,32.7 52.1,50.4 52.1,54.1 46.5,53.7 28.0,44.8" fill="url(#dith)"/><polygon points="51.5,27.5 61.4,25.3 70.1,30.0 61.4,35.2 51.5,41.7" fill="#b3b0a2"/><polygon points="61.4,24.4 66.3,22.5 76.2,28.1 71.3,30.9" fill="url(#dith)"/><ellipse cx="20.5" cy="25.6" rx="4.5" ry="7.7" fill="#464525"/><ellipse cx="19.5" cy="23.9" rx="2.8" ry="4.8" fill="#6a693a"/><ellipse cx="21.9" cy="28.3" rx="2.0" ry="3.1" fill="#3a3421"/><polygon points="40.3,15.1 51.5,20.1 51.5,27.2 40.3,21.0" fill="#c3aa7c"/><polygon points="51.5,20.1 64.9,14.5 64.9,22.8 52.7,27.2" fill="#ddd0b4"/><polygon points="40.3,15.3 45.0,7.4 51.7,19.8" fill="#bfa274"/><polygon points="45.0,7.4 58.9,2.5 65.1,14.1 51.7,19.8" fill="#4b3528"/><polygon points="49.0,10.8 58.9,6.7 60.8,10.1 50.9,14.5" fill="#5c4434"/><polygon points="43.1,4.9 45.5,4.9 45.5,9.2 43.1,9.2" fill="#b8a888"/><polygon points="58.3,-0.4 60.2,-0.4 60.2,3.3 58.3,3.3" fill="#b8a888"/><rect x="54.7" y="21.8" width="0.9" height="1.6" fill="#2a2620"/><rect x="57.2" y="20.7" width="0.9" height="1.6" fill="#2a2620"/><rect x="59.7" y="19.6" width="0.9" height="1.6" fill="#2a2620"/><rect x="62.2" y="18.6" width="0.9" height="1.6" fill="#2a2620"/><rect x="42.6" y="18.7" width="0.9" height="1.6" fill="#4a4034"/><rect x="45.5" y="20.0" width="0.9" height="1.6" fill="#4a4034"/><rect x="48.4" y="21.3" width="0.9" height="1.6" fill="#4a4034"/><polygon points="65.4,17.6 77.5,24.4 77.5,29.0 65.4,22.8" fill="#d8d0bc"/><polygon points="65.4,13.2 74.0,8.3 95.1,18.8 89.6,30.2 77.5,24.4 67.0,18.2" fill="#3b2f31"/><polygon points="71.3,11.4 76.2,9.5 93.6,19.4 91.1,23.8" fill="#4a3c3c"/><rect x="67.7" y="20.5" width="0.9" height="1.6" fill="#2a2620"/><rect x="70.0" y="21.7" width="0.9" height="1.6" fill="#2a2620"/><rect x="72.3" y="23.0" width="0.9" height="1.6" fill="#2a2620"/><rect x="74.6" y="24.2" width="0.9" height="1.6" fill="#2a2620"/><polygon points="90.5,29.3 99.5,35.2 100.8,37.1 91.1,32.2" fill="#b0a488"/><polygon points="99.5,35.2 105.0,31.4 105.0,36.4 100.8,37.1" fill="#d4ccb4"/><polygon points="90.5,28.7 96.1,24.8 104.0,30.0 99.5,35.4" fill="#4a3a40"/><ellipse cx="103.5" cy="19.4" rx="7.2" ry="5.9" fill="#3a381e"/><ellipse cx="101.9" cy="18.1" rx="4.5" ry="3.7" fill="#56552e"/><ellipse cx="105.6" cy="21.5" rx="3.2" ry="2.4" fill="#312a1a"/><ellipse cx="109.1" cy="25.3" rx="6.4" ry="5.7" fill="#36331a"/><ellipse cx="107.6" cy="24.0" rx="4.0" ry="3.5" fill="#4d4c29"/><ellipse cx="111.0" cy="27.2" rx="2.9" ry="2.3" fill="#2d2717"/><polygon points="24.9,27.5 34.1,30.6 45.9,36.1 45.9,45.8 34.1,39.6 24.9,33.9" fill="#e8e2d2"/><polygon points="45.9,36.1 52.0,28.7 52.0,40.1 46.5,45.8" fill="#b4b0a4"/><polygon points="25.7,25.6 32.9,20.1 46.5,21.9 52.0,28.5 45.9,35.9 34.1,30.2" fill="#38465a"/><polygon points="34.1,23.5 38.5,21.5 49.0,29.3 45.5,34.9" fill="#4a5c74"/><polygon points="32.9,20.1 35.4,24.4 34.1,30.2 30.4,28.1" fill="#2c3848"/><rect x="27.8" y="31.4" width="0.9" height="1.6" fill="#3a3a38"/><rect x="30.8" y="32.9" width="0.9" height="1.6" fill="#3a3a38"/><rect x="33.7" y="34.4" width="0.9" height="1.6" fill="#3a3a38"/><rect x="36.7" y="35.9" width="0.9" height="1.6" fill="#3a3a38"/><rect x="39.7" y="37.4" width="0.9" height="1.6" fill="#3a3a38"/><rect x="42.7" y="38.9" width="0.9" height="1.6" fill="#3a3a38"/><rect x="27.8" y="29.5" width="0.8" height="1.2" fill="#55554f"/><rect x="30.8" y="30.9" width="0.8" height="1.2" fill="#55554f"/><rect x="33.8" y="32.3" width="0.8" height="1.2" fill="#55554f"/><rect x="36.8" y="33.8" width="0.8" height="1.2" fill="#55554f"/><rect x="39.8" y="35.2" width="0.8" height="1.2" fill="#55554f"/><rect x="42.8" y="36.7" width="0.8" height="1.2" fill="#55554f"/><rect x="47.8" y="38.9" width="0.9" height="1.6" fill="#3a3a38"/><rect x="50.0" y="36.1" width="0.9" height="1.6" fill="#3a3a38"/><polygon points="28.9,15.7 30.4,15.7 30.4,20.7 28.9,20.7" fill="#c8c0b0"/><polygon points="50.2,46.1 55.2,51.0 55.2,54.4 50.2,50.0" fill="#b4946a"/><polygon points="55.2,51.0 66.3,45.8 90.1,35.2 90.1,41.3 66.3,51.9 55.2,54.4" fill="#cdb892"/><polygon points="51.5,41.7 61.4,34.9 81.2,27.5 90.4,33.1 83.7,38.9 66.3,46.1 55.2,51.3" fill="#3f2a20"/><polygon points="61.4,34.9 81.2,27.5 84.3,30.9 64.5,39.6" fill="#5a3e2c"/><polygon points="68.0,38.4 69.4,36.1 70.9,37.6 69.9,39.1" fill="#c9a27a"/><polygon points="74.8,35.7 76.2,33.4 77.7,34.9 76.7,36.4" fill="#c9a27a"/><polygon points="81.0,32.8 82.4,30.6 83.9,32.1 82.9,33.5" fill="#c9a27a"/><rect x="58.6" y="50.6" width="0.9" height="1.6" fill="#4a3a2c"/><rect x="62.6" y="48.8" width="0.9" height="1.6" fill="#4a3a2c"/><rect x="66.7" y="47.1" width="0.9" height="1.6" fill="#4a3a2c"/><rect x="70.7" y="45.4" width="0.9" height="1.6" fill="#4a3a2c"/><rect x="74.7" y="43.6" width="0.9" height="1.6" fill="#4a3a2c"/><rect x="78.7" y="41.9" width="0.9" height="1.6" fill="#4a3a2c"/><rect x="82.8" y="40.2" width="0.9" height="1.6" fill="#4a3a2c"/><rect x="86.8" y="38.4" width="0.9" height="1.6" fill="#4a3a2c"/><polygon points="83.7,41.7 90.1,38.6 90.1,42.6 85.5,44.6" fill="url(#dith)"/><polygon points="92.3,35.2 96.1,33.7 100.0,36.1 95.1,38.4" fill="url(#dith)"/></g>
<polygon points="1041.8,553.9 1099.8,524.7 1158.3,553.9 1099.8,582.9" fill="none" stroke="#f2ee20" stroke-width="1.6"/>
<text id="lbl_dh" x="1054.5" y="593" font-family="DejaVu Serif Condensed,DejaVu Serif,Liberation Serif,serif" font-weight="bold" font-size="13" fill="#fff" stroke="#000" stroke-width="2.2" paint-order="stroke" stroke-linejoin="round">Dutch Harbor</text>
<text id="lbl_ki" x="249.5" y="688.5" font-family="DejaVu Serif Condensed,DejaVu Serif,Liberation Serif,serif" font-weight="bold" font-size="13" fill="#fff" stroke="#000" stroke-width="2.2" paint-order="stroke" stroke-linejoin="round">Kiska</text>
<text id="lbl_at" x="-2.5" y="624.5" font-family="DejaVu Serif Condensed,DejaVu Serif,Liberation Serif,serif" font-weight="bold" font-size="13" fill="#fff" stroke="#000" stroke-width="2.2" paint-order="stroke" stroke-linejoin="round">Attu</text>
<text x="524.2" y="563.2" font-family="Liberation Serif,serif" font-style="italic" font-size="24" fill="#0a1a28" stroke="#0a1a28" stroke-width=".5">The Aleutians</text>
<text id="lbl_al" x="523" y="562" font-family="Liberation Serif,serif" font-style="italic" font-size="24" fill="#fff" stroke="#fff" stroke-width=".45">The Aleutians</text>
</svg>
<div class="abs" style="left:1079px;top:74px;width:405px;height:190px;background:#d4d0c8;box-shadow:inset 1px 1px 0 #d4d0c8,inset -1px -1px 0 #404040,inset 2px 2px 0 #fff,inset -2px -2px 0 #808080"></div>
<div class="abs" style="left:1083px;top:78px;width:398px;height:15px;background:linear-gradient(90deg,#808080 0%,#808080 8%,#c0c0c0 90%)"></div>
<div class="t bd" id="mmt" style="letter-spacing:-0.051px;left:1084.5px;top:79px;color:#d4d0c8">Mini-Map</div>
<div class="btn" style="left:1468px;top:80px;width:11px;height:11px"></div>
<svg class="abs" style="left:1468px;top:80px" width="11" height="11"><path d="M2.500 2.500l5 5M7.500 2.500l-5 5" stroke="#000" stroke-width="1.300" fill="none"/></svg>
<div class="abs" style="left:1083px;top:94px;width:398px;height:166px;background:#3a96ba;overflow:hidden"><svg width="398" height="166" viewBox="0 0 398 166" shape-rendering="crispEdges"><polygon points="-0.1,37.0 6.8,32.9 13.4,31.2 32.2,27.9 36.3,29.6 52.7,31.2 60.9,34.5 78.9,34.5 87.9,32.9 90.4,43.5 88.7,50.1 92.0,53.3 95.3,59.9 105.1,59.1 111.7,61.5 110.0,64.0 101.8,66.4 95.3,68.9 85.5,68.1 75.6,70.5 65.8,69.7 60.9,66.4 56.0,61.5 52.7,55.0 46.1,51.7 13.4,50.9 6.8,50.1 -0.1,50.9" fill="#3f7ea6"/><polygon points="-0.1,-0.7 199.3,-0.7 185.4,2.9 170.6,4.5 160.8,9.4 156.2,16.5 162.8,21.4 161.6,28.8 155.1,35.3 149.3,39.9 145.2,38.9 147.7,34.5 147.7,28.8 133.0,27.1 121.5,23.0 111.7,20.6 105.1,24.7 98.6,29.6 82.2,27.9 70.7,26.3 62.5,22.2 54.3,25.5 39.6,26.3 31.4,30.4 18.3,32.9 11.7,36.1 4.4,41.0 -0.1,43.8" fill="#c27759"/><polygon points="210.0,-0.7 241.1,-0.7 233.0,3.4 221.5,6.6 216.6,12.4 208.4,18.9 200.2,26.3 198.2,20.6 201.8,12.4 213.3,5.0" fill="#c27759"/><polygon points="182.2,-0.7 207.6,-0.7 196.9,5.8 190.4,7.8 185.4,4.2" fill="#c27759"/><polygon points="32.2,30.4 39.6,26.3 54.3,25.5 62.5,22.2 70.7,26.3 82.2,27.9 98.6,29.6 103.5,27.1 101.8,33.7 95.3,37.0 87.9,37.8 78.9,39.4 69.1,40.2 60.9,39.4 52.7,36.1 42.9,35.3 36.3,34.5" fill="#d3b78e"/><polygon points="78.9,44.3 86.3,44.3 86.3,48.4 78.9,48.4" fill="#d3b78e"/><polygon points="103.5,27.1 111.7,20.6 121.5,23.0 133.0,27.1 147.7,28.8 146.9,35.3 142.8,38.9 139.5,45.1 136.2,51.7 132.1,52.5 133.8,46.8 128.0,50.9 126.4,45.1 118.2,45.1 114.9,50.1 116.6,58.2 111.7,61.5 105.1,59.1 95.3,59.9 92.0,53.3 88.7,50.1 90.4,43.5 88.7,37.8 95.3,37.0 101.8,33.7" fill="#d3b043"/><polygon points="12.6,51.7 46.1,51.4 47.8,55.0 44.5,59.1 34.7,60.7 23.2,62.3 16.7,61.5 13.4,56.6" fill="#d3b78e"/><polygon points="-0.1,50.9 12.6,51.7 13.4,56.6 16.7,61.5 34.7,60.7 44.5,59.1 47.8,55.0 52.7,55.0 56.0,61.5 60.9,66.4 62.5,72.2 59.2,74.6 53.5,77.9 49.4,73.0 42.9,70.5 34.7,71.4 24.8,74.6 16.7,79.5 14.2,85.3 18.3,90.2 13.4,91.0 6.8,87.7 -0.1,87.7" fill="#a39a52"/><polygon points="60.1,73.0 65.8,70.5 74.0,69.7 77.3,73.0 73.2,77.9 69.1,81.2 65.8,85.3 64.2,89.4 60.9,87.7 60.1,81.2" fill="#d3b78e"/><polygon points="74.0,69.7 85.5,68.1 88.7,73.0 87.1,79.5 82.2,84.5 75.6,85.3 73.2,81.2 77.3,76.3 77.3,73.0" fill="#d3b043"/><polygon points="85.5,68.1 89.6,68.1 89.6,71.4 85.5,71.4" fill="#d3b043"/><polygon points="95.3,68.1 99.4,68.1 99.4,70.5 95.3,70.5" fill="#d3b043"/><polygon points="104.3,66.4 108.4,66.4 108.4,68.9 104.3,68.9" fill="#d3b043"/><polygon points="113.3,67.3 118.2,67.3 118.2,69.7 113.3,69.7" fill="#d3b043"/><polygon points="124.8,62.3 131.3,62.3 131.3,65.6 124.8,65.6" fill="#d3b043"/><polygon points="79.7,73.0 83.8,73.0 83.8,75.4 79.7,75.4" fill="#d3b043"/><polygon points="166.5,26.3 171.5,26.3 171.5,29.6 166.5,29.6" fill="#d3b043"/><polygon points="165.7,31.2 169.8,31.2 169.8,34.5 165.7,34.5" fill="#d3b043"/><polygon points="144.4,55.8 151.0,55.8 151.0,58.2 144.4,58.2" fill="#d3b043"/><polygon points="196.0,25.5 200.1,25.5 200.1,27.9 196.0,27.9" fill="#d3b043"/><polygon points="187.8,32.0 191.9,32.0 191.9,34.0 187.8,34.0" fill="#d3b043"/><polygon points="160.8,62.3 168.2,62.3 168.2,64.8 160.8,64.8" fill="#d3b043"/><polygon points="164.1,57.4 167.4,57.4 167.4,59.1 164.1,59.1" fill="#d3b043"/><polygon points="190.3,61.9 196.0,61.9 196.0,64.5 190.3,64.5" fill="#d3b043"/><polygon points="176.4,70.5 179.6,70.5 179.6,77.9 176.4,77.9" fill="#d3b043"/><polygon points="152.6,81.2 159.2,81.2 159.2,83.6 152.6,83.6" fill="#d3b043"/><polygon points="191.1,86.9 196.0,86.9 196.0,90.2 191.1,90.2" fill="#d3b043"/><polygon points="136.2,53.3 144.4,50.1 154.3,47.6 160.8,43.5 164.1,38.6 169.0,36.1 173.1,38.6 167.4,43.5 164.1,48.4 157.5,51.7 147.7,54.2 139.5,57.4 136.2,57.4" fill="#d3b043"/><polygon points="137.1,90.2 144.4,87.7 151.0,86.1 151.8,88.6 144.4,91.0 137.9,92.6" fill="#d3b043"/><polygon points="106.8,77.9 114.9,75.4 123.1,75.4 121.5,79.5 118.2,82.0 121.5,84.5 126.4,83.6 129.7,86.1 126.4,89.4 119.9,90.2 116.6,91.8 114.9,87.7 110.0,86.9 103.5,87.7 102.7,85.3 108.4,83.6 111.7,81.2" fill="#5d7a28"/><polygon points="170.6,79.9 174.7,79.9 174.7,82.0 170.6,82.0" fill="#5d7a28"/><polygon points="49.4,94.3 53.5,91.0 62.5,90.2 69.1,93.5 74.0,97.6 82.2,102.5 92.0,105.8 101.8,107.4 111.7,109.0 114.9,112.3 110.0,113.1 98.6,110.7 88.7,109.0 78.9,105.8 69.1,100.8 59.2,97.6" fill="#a39a52"/><polygon points="85.5,96.7 92.0,92.6 101.8,90.2 108.4,91.8 106.8,97.6 101.8,101.7 93.6,102.5 87.1,100.8" fill="#a39a52"/><polygon points="110.0,99.2 118.2,97.6 121.5,100.8 118.2,104.1 111.7,104.1" fill="#a39a52"/><polygon points="118.2,109.0 128.0,109.0 128.0,111.5 118.2,111.5" fill="#a39a52"/><polygon points="126.4,108.2 130.5,108.2 130.5,109.8 126.4,109.8" fill="#e8e4d0"/><polygon points="44.5,80.4 48.6,80.4 48.6,82.5 44.5,82.5" fill="#a39a52"/><polygon points="137.9,98.4 144.4,97.2 154.3,99.2 164.1,98.4 173.9,100.8 182.1,102.5 188.7,100.8 193.6,98.4 196.0,102.5 190.3,105.8 185.4,109.0 177.2,109.0 167.4,108.2 159.2,107.4 151.0,104.1 142.8,102.5" fill="#a39a52"/><polygon points="196.0,104.1 203.4,105.8 201.8,108.2 196.8,107.4" fill="#a39a52"/><polygon points="95.3,127.0 101.8,123.0 111.7,118.9 121.5,115.6 133.0,113.9 141.1,111.5 151.0,113.1 154.3,117.2 160.8,118.0 164.1,113.1 169.0,112.3 173.9,117.2 178.8,122.1 185.4,125.4 191.9,130.3 194.4,135.2 191.9,140.1 188.7,145.1 182.1,148.3 173.9,149.2 164.1,150.0 159.2,146.7 154.3,143.4 147.7,142.6 141.1,140.1 131.3,140.1 121.5,141.8 111.7,143.4 101.8,142.6 98.6,135.2" fill="#a39a52"/><polygon points="172.3,152.4 178.8,153.3 178.0,158.2 173.9,157.3" fill="#a39a52"/><polygon points="191.9,133.3 195.2,133.3 195.2,136.2 191.9,136.2" fill="#5d7a28"/><polygon points="328.0,-0.7 398.7,-0.7 398.7,32.9 388.6,32.9 380.4,31.2 372.2,28.8 368.9,22.2 365.6,14.0 359.1,10.7 354.2,7.5 346.0,4.2 336.1,1.7" fill="#a39a52"/><polygon points="280.5,-0.7 328.0,-0.7 336.1,1.7 346.0,4.2 354.2,6.6 362.4,8.8 368.1,14.0 365.6,15.7 359.1,12.4 353.3,10.4 344.3,6.2 332.9,3.4 323.0,2.9 314.9,5.0 312.4,9.1 306.7,9.9 305.0,14.0 300.1,17.3 296.8,14.0 290.3,14.8 286.2,14.0 290.3,10.7 298.5,7.5 296.8,4.2 288.6,3.4" fill="#6a7f30"/><polygon points="359.9,18.1 363.2,18.1 363.2,23.0 359.9,23.0" fill="#a39a52"/><polygon points="380.4,32.9 398.7,32.9 398.7,53.7 393.5,51.7 388.6,46.8 383.7,41.9 380.4,37.0" fill="#6a7f30"/><polygon points="232.1,19.8 236.2,19.8 236.2,22.2 232.1,22.2" fill="#6a7f30"/><polygon points="239.5,21.4 244.4,21.4 244.4,23.8 239.5,23.8" fill="#6a7f30"/><polygon points="251.8,21.4 255.9,21.4 255.9,23.8 251.8,23.8" fill="#6a7f30"/><polygon points="260.0,21.4 265.7,21.4 265.7,23.5 260.0,23.5" fill="#6a7f30"/><polygon points="265.7,20.2 275.5,20.2 275.5,22.2 265.7,22.2" fill="#6a7f30"/><polygon points="255.9,57.4 267.4,57.4 267.4,60.7 255.9,60.7" fill="#6a7f30"/><polygon points="222.3,72.2 228.0,72.2 228.0,74.6 222.3,74.6" fill="#6a7f30"/><polygon points="269.8,75.8 272.3,75.8 272.3,77.1 269.8,77.1" fill="#6a7f30"/><polygon points="299.3,98.9 304.2,98.9 304.2,100.5 299.3,100.5" fill="#6a7f30"/><polygon points="278.0,16.0 280.5,16.0 280.5,17.6 278.0,17.6" fill="#6a7f30"/><polygon points="287.0,68.9 293.6,66.9 300.1,69.7 307.5,70.5 308.3,73.8 301.8,73.0 293.6,71.4" fill="#6a7f30"/><polygon points="212.5,84.5 219.0,84.5 219.0,86.9 212.5,86.9" fill="#d3b043"/><polygon points="224.8,88.6 233.0,88.6 233.0,91.8 224.8,91.8" fill="#d3b043"/><polygon points="236.2,91.8 240.3,91.8 240.3,95.1 236.2,95.1" fill="#d3b043"/><polygon points="240.3,86.1 243.6,86.1 243.6,89.4 240.3,89.4" fill="#d3b043"/><polygon points="192.0,61.5 196.1,61.5 196.1,64.0 192.0,64.0" fill="#d3b043"/><polygon points="192.0,88.6 196.1,88.6 196.1,91.0 192.0,91.0" fill="#d3b043"/><polygon points="196.1,24.7 199.4,24.7 199.4,27.9 196.1,27.9" fill="#d3b043"/><polygon points="192.0,98.4 195.3,98.4 195.3,104.1 192.0,104.1" fill="#b3994a"/><polygon points="196.9,104.1 203.5,104.1 203.5,108.2 196.9,108.2" fill="#b3994a"/><polygon points="207.6,107.4 224.8,110.7 226.4,114.8 216.6,113.9 208.4,110.7" fill="#b3994a"/><polygon points="231.3,118.0 239.5,121.3 241.1,127.0 234.6,125.4" fill="#b3994a"/><polygon points="244.4,122.1 255.1,120.5 252.6,127.0 246.1,127.0" fill="#b3994a"/><polygon points="222.3,128.7 232.1,128.7 232.1,132.8 222.3,132.8" fill="#b3994a"/><polygon points="266.5,113.1 277.2,116.4 283.7,118.9 278.8,120.5 269.0,118.0" fill="#b3994a"/><polygon points="255.1,109.0 259.2,109.0 259.2,111.5 255.1,111.5" fill="#b3994a"/><polygon points="314.9,121.3 323.0,123.0 323.9,127.0 317.3,126.2" fill="#b3994a"/><polygon points="295.2,127.0 300.1,127.0 300.1,129.5 295.2,129.5" fill="#b3994a"/><polygon points="239.5,144.2 244.4,144.2 244.4,146.7 239.5,146.7" fill="#b3994a"/><polygon points="244.4,146.7 251.8,148.3 251.0,153.3 244.4,152.4" fill="#b3994a"/><polygon points="227.2,158.2 241.1,152.4 244.4,155.7 233.0,163.1 227.2,162.3" fill="#b3994a"/><polygon points="192.0,132.0 195.3,132.0 195.3,136.9 192.0,136.9" fill="#b3994a"/><polygon points="246.1,94.3 251.8,94.3 251.8,96.2 246.1,96.2" fill="#b3994a"/><rect x="238.500" y="4.500" width="47" height="29" fill="none" stroke="#fff" stroke-width="1"/></svg></div>
<div class="abs" style="left:145px;top:101px;width:440px;height:384px;background:#d4d0c8;box-shadow:inset 1px 1px 0 #d4d0c8,inset -1px -1px 0 #404040,inset 2px 2px 0 #fff,inset -2px -2px 0 #808080"></div>
<div class="abs" style="left:148px;top:104px;width:434px;height:18px;background:linear-gradient(90deg,#0a246a 0%,#0a246a 10%,#a6caf0 96%)"></div>
<div class="t bd" id="dtitle" style="letter-spacing:0.016px;left:149.5px;top:107px;color:#fff">Properties</div>
<div class="btn" style="left:564px;top:106px;width:16px;height:14px"></div>
<svg class="abs" style="left:564px;top:106px" width="16" height="14"><path d="M4 3l7 7M5 3l7 7M11 3l-7 7M12 3l-7 7" stroke="#000" stroke-width="1" fill="none" shape-rendering="crispEdges"/></svg>
<div class="etch" style="left:157px;top:139px;width:214px;height:187px"></div>
<div class="etch" style="left:157px;top:334px;width:215px;height:102px"></div>
<div class="etch" style="left:382px;top:139px;width:191px;height:297px"></div>
<div class="t" id="lname" style="letter-spacing:-0.481px;left:167.5px;top:148px">Name:</div>
<div class="abs" style="left:167px;top:163px;width:193px;height:19px;background:#fff;box-shadow:inset 1px 1px 0 #808080,inset -1px -1px 0 #fff,inset 2px 2px 0 #404040,inset -2px -2px 0 #d4d0c8"></div>
<div class="abs" style="left:172px;top:165px;width:64px;height:13px;background:#0a246a"></div>
<div class="t" id="inp" style="letter-spacing:-0.202px;left:172.5px;top:166px;color:#fff">Dutch Harbor</div>
<div class="t" id="r1" style="letter-spacing:0.151px;left:396.5px;top:163px">ID: Town</div>
<div class="t" id="r2" style="letter-spacing:-0.234px;left:396.5px;top:183px">Owner: USA</div>
<div class="t" id="r3" style="letter-spacing:-0.195px;left:396.5px;top:202px">Controller: USA</div>
<div class="btn" style="left:400px;top:445px;width:93px;height:23px"></div>
<div class="t" id="bdet" style="left:400px;top:450px;width:93px;text-align:center">Details &gt;&gt;</div>
<div class="abs" style="left:499px;top:444px;width:76px;height:25px;background:#000"></div>
<div class="btn" style="left:500px;top:445px;width:74px;height:23px"></div>
<div class="t" id="bok" style="left:500px;top:450px;width:74px;text-align:center">OK</div>
<svg class="abs" style="left:0;top:0;pointer-events:none" width="700" height="500" overflow="visible"><g transform="translate(410.0,332.0) scale(1.0)" filter="url(#tex)"><polygon points="11.2,34.3 16.8,32.7 52.1,50.4 52.1,54.1 46.5,53.7 28.0,44.8" fill="url(#dith)"/><polygon points="51.5,27.5 61.4,25.3 70.1,30.0 61.4,35.2 51.5,41.7" fill="#b3b0a2"/><polygon points="61.4,24.4 66.3,22.5 76.2,28.1 71.3,30.9" fill="url(#dith)"/><ellipse cx="20.5" cy="25.6" rx="4.5" ry="7.7" fill="#464525"/><ellipse cx="19.5" cy="23.9" rx="2.8" ry="4.8" fill="#6a693a"/><ellipse cx="21.9" cy="28.3" rx="2.0" ry="3.1" fill="#3a3421"/><polygon points="40.3,15.1 51.5,20.1 51.5,27.2 40.3,21.0" fill="#c3aa7c"/><polygon points="51.5,20.1 64.9,14.5 64.9,22.8 52.7,27.2" fill="#ddd0b4"/><polygon points="40.3,15.3 45.0,7.4 51.7,19.8" fill="#bfa274"/><polygon points="45.0,7.4 58.9,2.5 65.1,14.1 51.7,19.8" fill="#4b3528"/><polygon points="49.0,10.8 58.9,6.7 60.8,10.1 50.9,14.5" fill="#5c4434"/><polygon points="43.1,4.9 45.5,4.9 45.5,9.2 43.1,9.2" fill="#b8a888"/><polygon points="58.3,-0.4 60.2,-0.4 60.2,3.3 58.3,3.3" fill="#b8a888"/><rect x="54.7" y="21.8" width="0.9" height="1.6" fill="#2a2620"/><rect x="57.2" y="20.7" width="0.9" height="1.6" fill="#2a2620"/><rect x="59.7" y="19.6" width="0.9" height="1.6" fill="#2a2620"/><rect x="62.2" y="18.6" width="0.9" height="1.6" fill="#2a2620"/><rect x="42.6" y="18.7" width="0.9" height="1.6" fill="#4a4034"/><rect x="45.5" y="20.0" width="0.9" height="1.6" fill="#4a4034"/><rect x="48.4" y="21.3" width="0.9" height="1.6" fill="#4a4034"/><polygon points="65.4,17.6 77.5,24.4 77.5,29.0 65.4,22.8" fill="#d8d0bc"/><polygon points="65.4,13.2 74.0,8.3 95.1,18.8 89.6,30.2 77.5,24.4 67.0,18.2" fill="#3b2f31"/><polygon points="71.3,11.4 76.2,9.5 93.6,19.4 91.1,23.8" fill="#4a3c3c"/><rect x="67.7" y="20.5" width="0.9" height="1.6" fill="#2a2620"/><rect x="70.0" y="21.7" width="0.9" height="1.6" fill="#2a2620"/><rect x="72.3" y="23.0" width="0.9" height="1.6" fill="#2a2620"/><rect x="74.6" y="24.2" width="0.9" height="1.6" fill="#2a2620"/><polygon points="90.5,29.3 99.5,35.2 100.8,37.1 91.1,32.2" fill="#b0a488"/><polygon points="99.5,35.2 105.0,31.4 105.0,36.4 100.8,37.1" fill="#d4ccb4"/><polygon points="90.5,28.7 96.1,24.8 104.0,30.0 99.5,35.4" fill="#4a3a40"/><ellipse cx="103.5" cy="19.4" rx="7.2" ry="5.9" fill="#3a381e"/><ellipse cx="101.9" cy="18.1" rx="4.5" ry="3.7" fill="#56552e"/><ellipse cx="105.6" cy="21.5" rx="3.2" ry="2.4" fill="#312a1a"/><ellipse cx="109.1" cy="25.3" rx="6.4" ry="5.7" fill="#36331a"/><ellipse cx="107.6" cy="24.0" rx="4.0" ry="3.5" fill="#4d4c29"/><ellipse cx="111.0" cy="27.2" rx="2.9" ry="2.3" fill="#2d2717"/><polygon points="24.9,27.5 34.1,30.6 45.9,36.1 45.9,45.8 34.1,39.6 24.9,33.9" fill="#e8e2d2"/><polygon points="45.9,36.1 52.0,28.7 52.0,40.1 46.5,45.8" fill="#b4b0a4"/><polygon points="25.7,25.6 32.9,20.1 46.5,21.9 52.0,28.5 45.9,35.9 34.1,30.2" fill="#38465a"/><polygon points="34.1,23.5 38.5,21.5 49.0,29.3 45.5,34.9" fill="#4a5c74"/><polygon points="32.9,20.1 35.4,24.4 34.1,30.2 30.4,28.1" fill="#2c3848"/><rect x="27.8" y="31.4" width="0.9" height="1.6" fill="#3a3a38"/><rect x="30.8" y="32.9" width="0.9" height="1.6" fill="#3a3a38"/><rect x="33.7" y="34.4" width="0.9" height="1.6" fill="#3a3a38"/><rect x="36.7" y="35.9" width="0.9" height="1.6" fill="#3a3a38"/><rect x="39.7" y="37.4" width="0.9" height="1.6" fill="#3a3a38"/><rect x="42.7" y="38.9" width="0.9" height="1.6" fill="#3a3a38"/><rect x="27.8" y="29.5" width="0.8" height="1.2" fill="#55554f"/><rect x="30.8" y="30.9" width="0.8" height="1.2" fill="#55554f"/><rect x="33.8" y="32.3" width="0.8" height="1.2" fill="#55554f"/><rect x="36.8" y="33.8" width="0.8" height="1.2" fill="#55554f"/><rect x="39.8" y="35.2" width="0.8" height="1.2" fill="#55554f"/><rect x="42.8" y="36.7" width="0.8" height="1.2" fill="#55554f"/><rect x="47.8" y="38.9" width="0.9" height="1.6" fill="#3a3a38"/><rect x="50.0" y="36.1" width="0.9" height="1.6" fill="#3a3a38"/><polygon points="28.9,15.7 30.4,15.7 30.4,20.7 28.9,20.7" fill="#c8c0b0"/><polygon points="50.2,46.1 55.2,51.0 55.2,54.4 50.2,50.0" fill="#b4946a"/><polygon points="55.2,51.0 66.3,45.8 90.1,35.2 90.1,41.3 66.3,51.9 55.2,54.4" fill="#cdb892"/><polygon points="51.5,41.7 61.4,34.9 81.2,27.5 90.4,33.1 83.7,38.9 66.3,46.1 55.2,51.3" fill="#3f2a20"/><polygon points="61.4,34.9 81.2,27.5 84.3,30.9 64.5,39.6" fill="#5a3e2c"/><polygon points="68.0,38.4 69.4,36.1 70.9,37.6 69.9,39.1" fill="#c9a27a"/><polygon points="74.8,35.7 76.2,33.4 77.7,34.9 76.7,36.4" fill="#c9a27a"/><polygon points="81.0,32.8 82.4,30.6 83.9,32.1 82.9,33.5" fill="#c9a27a"/><rect x="58.6" y="50.6" width="0.9" height="1.6" fill="#4a3a2c"/><rect x="62.6" y="48.8" width="0.9" height="1.6" fill="#4a3a2c"/><rect x="66.7" y="47.1" width="0.9" height="1.6" fill="#4a3a2c"/><rect x="70.7" y="45.4" width="0.9" height="1.6" fill="#4a3a2c"/><rect x="74.7" y="43.6" width="0.9" height="1.6" fill="#4a3a2c"/><rect x="78.7" y="41.9" width="0.9" height="1.6" fill="#4a3a2c"/><rect x="82.8" y="40.2" width="0.9" height="1.6" fill="#4a3a2c"/><rect x="86.8" y="38.4" width="0.9" height="1.6" fill="#4a3a2c"/><polygon points="83.7,41.7 90.1,38.6 90.1,42.6 85.5,44.6" fill="url(#dith)"/><polygon points="92.3,35.2 96.1,33.7 100.0,36.1 95.1,38.4" fill="url(#dith)"/></g></svg>
<div class="abs" style="left:1527px;top:73px;width:130px;height:92px;background:#fff;border:1px solid #000"></div>
<div class="abs" style="left:1527px;top:202px;width:130px;height:770px;background:#fff;border:1px solid #000"></div>
<div class="abs" style="left:1528px;top:267px;width:128px;height:1px;background:#000"></div>
<div class="abs" style="left:1528px;top:331px;width:128px;height:1px;background:#000"></div>
<div class="abs" style="left:1528px;top:395px;width:128px;height:1px;background:#000"></div>
<div class="abs" style="left:1528px;top:459px;width:128px;height:1px;background:#000"></div>
<div class="abs" style="left:1528px;top:523px;width:128px;height:1px;background:#000"></div>
<div class="abs" style="left:1528px;top:587px;width:128px;height:1px;background:#000"></div>
<div class="abs" style="left:1528px;top:651px;width:128px;height:1px;background:#000"></div>
<div class="abs" style="left:1528px;top:715px;width:128px;height:1px;background:#000"></div>
<div class="abs" style="left:1528px;top:779px;width:128px;height:1px;background:#000"></div>
<div class="abs" style="left:1528px;top:843px;width:128px;height:1px;background:#000"></div>
<div class="abs" style="left:1528px;top:907px;width:128px;height:1px;background:#000"></div>
<div class="abs" style="left:1657px;top:202px;width:21px;height:770px;background-image:repeating-conic-gradient(#fff 0% 25%,#d4d0c8 0% 50%);background-size:2px 2px"></div>
<div class="btn" style="left:1657px;top:202px;width:20px;height:15px"></div>
<div class="btn" style="left:1657px;top:217px;width:20px;height:8px"></div>
<div class="btn" style="left:1657px;top:957px;width:20px;height:15px"></div>
<svg class="abs" style="left:1657px;top:202px" width="20" height="15"><path d="M6 10h7l-3.5-4z" fill="#000"/></svg>
<svg class="abs" style="left:1657px;top:957px" width="20" height="15"><path d="M6 6h7l-3.5 4z" fill="#000"/></svg>
<svg width="0" height="0" style="position:absolute"><defs>
<filter id="tex" x="-5%" y="-30%" width="110%" height="140%" color-interpolation-filters="sRGB"><feTurbulence type="fractalNoise" baseFrequency="0.42" numOctaves="2" seed="5" result="n"/><feColorMatrix in="n" type="matrix" values="0 0 0 0 0  0 0 0 0 0  0 0 0 0 0  0.95 0 0 0 -0.40" result="a"/><feFlood flood-color="#1a140c"/><feComposite in2="a" operator="in" result="dk"/><feComposite in="dk" in2="SourceGraphic" operator="in" result="dk2"/><feMerge><feMergeNode in="SourceGraphic"/><feMergeNode in="dk2"/></feMerge></filter>
<pattern id="dith" width="2" height="2" patternUnits="userSpaceOnUse"><rect width="1" height="1" fill="#181818"/><rect x="1" y="1" width="1" height="1" fill="#181818"/></pattern>
</defs></svg>
<svg class="abs" style="left:1528px;top:74px" width="128" height="90" viewBox="-1 -13 128 90"><polygon points="0.0,31.5 63.0,0.0 126.0,31.5 63.0,63.0" fill="#c6c6be"/><polygon points="81.9,9.4 103.3,20.2 103.3,32.8 65.5,51.7 31.5,34.7" fill="#2e8fc2"/><g filter="url(#tex)"><polygon points="12.6,25.2 75.6,56.7 63.0,63.0 0.0,31.5" fill="#6d685c"/><polygon points="103.3,32.8 113.4,37.8 63.0,63.0 52.9,58.0" fill="#6d685c"/><polygon points="10.1,27.7 70.6,58.0 66.1,60.2 5.7,29.9" fill="#8b8474"/><polygon points="104.0,35.6 107.7,37.5 72.4,55.1 68.7,53.2" fill="#8b8474"/><polygon points="74.8,19.3 80.8,22.3 43.0,41.2 37.0,38.2" fill="#4a463c"/><polygon points="74.3,19.5 78.8,21.7 42.2,40.0 37.8,37.8" fill="#9d937f"/><polygon points="91.9,21.5 97.8,24.5 53.7,46.5 47.8,43.6" fill="#4a463c"/><polygon points="91.3,21.7 95.8,23.9 52.9,45.4 48.5,43.2" fill="#9d937f"/><polygon points="81.1,37.0 86.4,39.6 63.1,51.3 57.8,48.6" fill="#4a463c"/><polygon points="80.6,37.2 84.4,39.1 62.4,50.1 58.6,48.2" fill="#9d937f"/><polygon points="76.2,12.9 78.1,13.9 45.4,30.2 38.4,31.8" fill="#3a3a34"/><polygon points="1.3,30.9 7.6,34.0 7.6,30.0 1.3,26.9" fill="#8a8676"/><polygon points="18.9,28.4 7.6,34.0 7.6,30.0 18.9,24.4" fill="#a8a492"/><polygon points="12.6,21.2 18.9,24.4 7.6,30.0 1.3,26.9" fill="#c8c4b2"/><polygon points="8.2,34.3 13.9,37.2 13.9,33.7 8.2,30.8" fill="#7e7a6a"/><polygon points="25.2,31.5 13.9,37.2 13.9,33.7 25.2,28.0" fill="#9c9886"/><polygon points="19.5,25.2 25.2,28.0 13.9,33.7 8.2,30.8" fill="#bcb8a6"/><polygon points="20.8,40.0 25.8,42.5 25.8,40.0 20.8,37.5" fill="#8a8676"/><polygon points="32.8,39.1 25.8,42.5 25.8,40.0 32.8,36.6" fill="#aca896"/><polygon points="27.7,34.0 32.8,36.6 25.8,40.0 20.8,37.5" fill="#d0ccba"/><polygon points="27.1,43.2 32.1,45.7 32.1,43.2 27.1,40.7" fill="#7e7a6a"/><polygon points="39.1,42.2 32.1,45.7 32.1,43.2 39.1,39.7" fill="#a09c8a"/><polygon points="34.0,37.2 39.1,39.7 32.1,43.2 27.1,40.7" fill="#c4c0ae"/><polygon points="34.0,47.2 37.8,49.1 37.8,47.1 34.0,45.2" fill="#7e7a6a"/><polygon points="42.8,46.6 37.8,49.1 37.8,47.1 42.8,44.6" fill="#9c9886"/><polygon points="39.1,42.7 42.8,44.6 37.8,47.1 34.0,45.2" fill="#bcb8a6"/><polygon points="56.1,57.6 63.0,61.1 63.0,59.1 56.1,55.6" fill="#6e6a5a"/><polygon points="70.6,57.3 63.0,61.1 63.0,59.1 70.6,55.3" fill="#8c8876"/><polygon points="63.6,51.9 70.6,55.3 63.0,59.1 56.1,55.6" fill="#a8a492"/><ellipse cx="23.3" cy="34.6" rx="4.5" ry="2.6" fill="#cfcfc8" stroke="#5a5a50" stroke-width=".7"/><g fill="none" stroke-linecap="round"><path d="M87.3 42.5L89.8 30.5M95.3 43.5L92.8 30.5M87.8 39.5L93.8 35.5M94.8 40.5L88.8 35.5M89.1 34.5L93.1 31.5M93.5 34.5L89.5 31.5" stroke="#e8e8e0" stroke-width="1.1"/><path d="M95.3 43.5L98.3 41.5L94.3 31.5" stroke="#5a564a" stroke-width="1"/><rect x="90.3" y="27.0" width="7.500" height="4" fill="#4a463c" stroke="none"/><rect x="88.8" y="28.0" width="4" height="3.200" fill="#c8c4b4" stroke="none"/><path d="M91.3 29.5L81.4 9.5" stroke="#f4f4ec" stroke-width="1.3"/><path d="M92.5 29.5L82.6 9.5" stroke="#6a665a" stroke-width=".7"/></g><g fill="none" stroke-linecap="round"><path d="M63.4 52.6L65.9 40.6M71.4 53.6L68.9 40.6M63.9 49.6L69.9 45.6M70.9 50.6L64.9 45.6M65.2 44.6L69.2 41.6M69.6 44.6L65.6 41.6" stroke="#e8e8e0" stroke-width="1.1"/><path d="M71.4 53.6L74.4 51.6L70.4 41.6" stroke="#5a564a" stroke-width="1"/><rect x="66.4" y="37.1" width="7.500" height="4" fill="#4a463c" stroke="none"/><rect x="64.9" y="38.1" width="4" height="3.200" fill="#c8c4b4" stroke="none"/><path d="M67.4 39.6L57.4 19.6" stroke="#f4f4ec" stroke-width="1.3"/><path d="M68.6 39.6L58.6 19.6" stroke="#6a665a" stroke-width=".7"/></g></g></svg>
<svg class="abs" style="left:1528px;top:203px" width="128" height="64" viewBox="-1 0 128 64" overflow="visible"><polygon points="0.0,31.5 63.0,0.0 126.0,31.5 63.0,63.0" fill="#c6c6be"/><polygon points="81.9,9.4 103.3,20.2 103.3,32.8 65.5,51.7 31.5,34.7" fill="#2e8fc2"/><g filter="url(#tex)"><polygon points="12.6,25.2 75.6,56.7 63.0,63.0 0.0,31.5" fill="#6d685c"/><polygon points="103.3,32.8 113.4,37.8 63.0,63.0 52.9,58.0" fill="#6d685c"/><polygon points="10.1,27.7 70.6,58.0 66.1,60.2 5.7,29.9" fill="#8b8474"/><polygon points="104.0,35.6 107.7,37.5 72.4,55.1 68.7,53.2" fill="#8b8474"/><polygon points="74.8,19.3 80.8,22.3 43.0,41.2 37.0,38.2" fill="#4a463c"/><polygon points="74.3,19.5 78.8,21.7 42.2,40.0 37.8,37.8" fill="#9d937f"/><polygon points="91.9,21.5 97.8,24.5 53.7,46.5 47.8,43.6" fill="#4a463c"/><polygon points="91.3,21.7 95.8,23.9 52.9,45.4 48.5,43.2" fill="#9d937f"/><polygon points="81.1,37.0 86.4,39.6 63.1,51.3 57.8,48.6" fill="#4a463c"/><polygon points="80.6,37.2 84.4,39.1 62.4,50.1 58.6,48.2" fill="#9d937f"/><polygon points="76.2,12.9 78.1,13.9 45.4,30.2 38.4,31.8" fill="#3a3a34"/><polygon points="1.3,30.9 7.6,34.0 7.6,30.0 1.3,26.9" fill="#8a8676"/><polygon points="18.9,28.4 7.6,34.0 7.6,30.0 18.9,24.4" fill="#a8a492"/><polygon points="12.6,21.2 18.9,24.4 7.6,30.0 1.3,26.9" fill="#c8c4b2"/><polygon points="8.2,34.3 13.9,37.2 13.9,33.7 8.2,30.8" fill="#7e7a6a"/><polygon points="25.2,31.5 13.9,37.2 13.9,33.7 25.2,28.0" fill="#9c9886"/><polygon points="19.5,25.2 25.2,28.0 13.9,33.7 8.2,30.8" fill="#bcb8a6"/><polygon points="20.8,40.0 25.8,42.5 25.8,40.0 20.8,37.5" fill="#8a8676"/><polygon points="32.8,39.1 25.8,42.5 25.8,40.0 32.8,36.6" fill="#aca896"/><polygon points="27.7,34.0 32.8,36.6 25.8,40.0 20.8,37.5" fill="#d0ccba"/><polygon points="27.1,43.2 32.1,45.7 32.1,43.2 27.1,40.7" fill="#7e7a6a"/><polygon points="39.1,42.2 32.1,45.7 32.1,43.2 39.1,39.7" fill="#a09c8a"/><polygon points="34.0,37.2 39.1,39.7 32.1,43.2 27.1,40.7" fill="#c4c0ae"/><polygon points="34.0,47.2 37.8,49.1 37.8,47.1 34.0,45.2" fill="#7e7a6a"/><polygon points="42.8,46.6 37.8,49.1 37.8,47.1 42.8,44.6" fill="#9c9886"/><polygon points="39.1,42.7 42.8,44.6 37.8,47.1 34.0,45.2" fill="#bcb8a6"/><polygon points="56.1,57.6 63.0,61.1 63.0,59.1 56.1,55.6" fill="#6e6a5a"/><polygon points="70.6,57.3 63.0,61.1 63.0,59.1 70.6,55.3" fill="#8c8876"/><polygon points="63.6,51.9 70.6,55.3 63.0,59.1 56.1,55.6" fill="#a8a492"/><ellipse cx="23.3" cy="34.6" rx="4.5" ry="2.6" fill="#cfcfc8" stroke="#5a5a50" stroke-width=".7"/><g fill="none" stroke-linecap="round"><path d="M87.3 42.5L89.8 30.5M95.3 43.5L92.8 30.5M87.8 39.5L93.8 35.5M94.8 40.5L88.8 35.5M89.1 34.5L93.1 31.5M93.5 34.5L89.5 31.5" stroke="#e8e8e0" stroke-width="1.1"/><path d="M95.3 43.5L98.3 41.5L94.3 31.5" stroke="#5a564a" stroke-width="1"/><rect x="90.3" y="27.0" width="7.500" height="4" fill="#4a463c" stroke="none"/><rect x="88.8" y="28.0" width="4" height="3.200" fill="#c8c4b4" stroke="none"/><path d="M91.3 29.5L81.4 9.5" stroke="#f4f4ec" stroke-width="1.3"/><path d="M92.5 29.5L82.6 9.5" stroke="#6a665a" stroke-width=".7"/></g><g fill="none" stroke-linecap="round"><path d="M63.4 52.6L65.9 40.6M71.4 53.6L68.9 40.6M63.9 49.6L69.9 45.6M70.9 50.6L64.9 45.6M65.2 44.6L69.2 41.6M69.6 44.6L65.6 41.6" stroke="#e8e8e0" stroke-width="1.1"/><path d="M71.4 53.6L74.4 51.6L70.4 41.6" stroke="#5a564a" stroke-width="1"/><rect x="66.4" y="37.1" width="7.500" height="4" fill="#4a463c" stroke="none"/><rect x="64.9" y="38.1" width="4" height="3.200" fill="#c8c4b4" stroke="none"/><path d="M67.4 39.6L57.4 19.6" stroke="#f4f4ec" stroke-width="1.3"/><path d="M68.6 39.6L58.6 19.6" stroke="#6a665a" stroke-width=".7"/></g></g></svg>
<svg class="abs" style="left:1528px;top:267px" width="128" height="64" viewBox="-1 0 128 64" overflow="visible"><polygon points="0.0,31.5 63.0,0.0 126.0,31.5 63.0,63.0" fill="#c6c6be"/><polygon points="44.1,9.4 22.7,20.2 22.7,32.8 60.5,51.7 94.5,34.7" fill="#2e8fc2"/><g filter="url(#tex)"><polygon points="113.4,25.2 50.4,56.7 63.0,63.0 126.0,31.5" fill="#6d685c"/><polygon points="22.7,32.8 12.6,37.8 63.0,63.0 73.1,58.0" fill="#6d685c"/><polygon points="115.9,27.7 55.4,58.0 59.9,60.2 120.3,29.9" fill="#8b8474"/><polygon points="22.0,35.6 18.3,37.5 53.6,55.1 57.3,53.2" fill="#8b8474"/><polygon points="51.2,19.3 45.2,22.3 83.0,41.2 89.0,38.2" fill="#4a463c"/><polygon points="51.7,19.5 47.2,21.7 83.8,40.0 88.2,37.8" fill="#9d937f"/><polygon points="34.1,21.5 28.2,24.5 72.3,46.5 78.2,43.6" fill="#4a463c"/><polygon points="34.7,21.7 30.2,23.9 73.1,45.4 77.5,43.2" fill="#9d937f"/><polygon points="44.9,37.0 39.6,39.6 62.9,51.3 68.2,48.6" fill="#4a463c"/><polygon points="45.4,37.2 41.6,39.1 63.6,50.1 67.4,48.2" fill="#9d937f"/><polygon points="49.8,12.9 47.9,13.9 80.6,30.2 87.6,31.8" fill="#3a3a34"/><polygon points="107.1,28.4 118.4,34.0 118.4,30.0 107.1,24.4" fill="#8a8676"/><polygon points="124.7,30.9 118.4,34.0 118.4,30.0 124.7,26.9" fill="#a8a492"/><polygon points="113.4,21.2 124.7,26.9 118.4,30.0 107.1,24.4" fill="#c8c4b2"/><polygon points="100.8,31.5 112.1,37.2 112.1,33.7 100.8,28.0" fill="#7e7a6a"/><polygon points="117.8,34.3 112.1,37.2 112.1,33.7 117.8,30.8" fill="#9c9886"/><polygon points="106.5,25.2 117.8,30.8 112.1,33.7 100.8,28.0" fill="#bcb8a6"/><polygon points="93.2,39.1 100.2,42.5 100.2,40.0 93.2,36.6" fill="#8a8676"/><polygon points="105.2,40.0 100.2,42.5 100.2,40.0 105.2,37.5" fill="#aca896"/><polygon points="98.3,34.0 105.2,37.5 100.2,40.0 93.2,36.6" fill="#d0ccba"/><polygon points="86.9,42.2 93.9,45.7 93.9,43.2 86.9,39.7" fill="#7e7a6a"/><polygon points="98.9,43.2 93.9,45.7 93.9,43.2 98.9,40.7" fill="#a09c8a"/><polygon points="92.0,37.2 98.9,40.7 93.9,43.2 86.9,39.7" fill="#c4c0ae"/><polygon points="83.2,46.6 88.2,49.1 88.2,47.1 83.2,44.6" fill="#7e7a6a"/><polygon points="92.0,47.2 88.2,49.1 88.2,47.1 92.0,45.2" fill="#9c9886"/><polygon points="86.9,42.7 92.0,45.2 88.2,47.1 83.2,44.6" fill="#bcb8a6"/><polygon points="55.4,57.3 63.0,61.1 63.0,59.1 55.4,55.3" fill="#6e6a5a"/><polygon points="69.9,57.6 63.0,61.1 63.0,59.1 69.9,55.6" fill="#8c8876"/><polygon points="62.4,51.9 69.9,55.6 63.0,59.1 55.4,55.3" fill="#a8a492"/><ellipse cx="102.7" cy="34.6" rx="4.5" ry="2.6" fill="#cfcfc8" stroke="#5a5a50" stroke-width=".7"/><g fill="none" stroke-linecap="round"><path d="M91.8 35.3L94.3 23.3M99.8 36.3L97.3 23.3M92.3 32.3L98.3 28.3M99.3 33.3L93.3 28.3M93.6 27.3L97.6 24.3M98.0 27.3L94.0 24.3" stroke="#e8e8e0" stroke-width="1.1"/><path d="M99.8 36.3L102.8 34.3L98.8 24.3" stroke="#5a564a" stroke-width="1"/><rect x="94.8" y="19.8" width="7.500" height="4" fill="#4a463c" stroke="none"/><rect x="93.3" y="20.8" width="4" height="3.200" fill="#c8c4b4" stroke="none"/><path d="M95.8 22.3L85.8 2.3" stroke="#f4f4ec" stroke-width="1.3"/><path d="M97.0 22.3L87.0 2.3" stroke="#6a665a" stroke-width=".7"/></g><g fill="none" stroke-linecap="round"><path d="M61.5 42.2L64.0 30.2M69.5 43.2L67.0 30.2M62.0 39.2L68.0 35.2M69.0 40.2L63.0 35.2M63.3 34.2L67.3 31.2M67.7 34.2L63.7 31.2" stroke="#e8e8e0" stroke-width="1.1"/><path d="M69.5 43.2L72.5 41.2L68.5 31.2" stroke="#5a564a" stroke-width="1"/><rect x="64.5" y="26.7" width="7.500" height="4" fill="#4a463c" stroke="none"/><rect x="63.0" y="27.7" width="4" height="3.200" fill="#c8c4b4" stroke="none"/><path d="M65.5 29.2L55.5 9.2" stroke="#f4f4ec" stroke-width="1.3"/><path d="M66.7 29.2L56.7 9.2" stroke="#6a665a" stroke-width=".7"/></g></g></svg>
<svg class="abs" style="left:1528px;top:331px" width="128" height="64" viewBox="-1 0 128 64" overflow="visible"><polygon points="0.0,31.5 63.0,0.0 126.0,31.5 63.0,63.0" fill="#c6c6be"/><polygon points="63.0,12.6 114.0,36.2 80.0,54.5 35.3,32.1 35.3,26.5" fill="#2e8fc2"/><g filter="url(#tex)"><polygon points="63.0,0.0 75.6,6.3 12.6,37.8 0.0,31.5" fill="#6d685c"/><polygon points="63.0,0.0 126.0,31.5 113.4,37.8 50.4,6.3" fill="#6d685c"/><polygon points="63.6,3.5 68.0,5.7 11.3,34.0 6.9,31.8" fill="#8b8474"/><polygon points="71.8,8.2 120.3,32.4 115.9,34.7 67.4,10.4" fill="#8b8474"/><polygon points="43.6,23.1 71.3,37.0 64.8,40.2 37.0,26.4" fill="#4a463c"/><polygon points="42.8,22.7 69.3,35.9 64.3,38.4 37.8,25.2" fill="#9d937f"/><polygon points="57.5,16.2 94.0,34.4 87.4,37.7 50.9,19.4" fill="#4a463c"/><polygon points="56.7,15.8 92.0,33.4 86.9,35.9 51.7,18.3" fill="#9d937f"/><polygon points="36.5,28.4 59.2,39.7 61.1,42.5 34.7,29.3" fill="#3a3a34"/><polygon points="52.9,6.3 61.7,10.7 61.7,6.7 52.9,2.3" fill="#8a8676"/><polygon points="71.8,5.7 61.7,10.7 61.7,6.7 71.8,1.7" fill="#a8a492"/><polygon points="63.0,-2.7 71.8,1.7 61.7,6.7 52.9,2.3" fill="#c8c4b2"/><polygon points="66.8,12.0 74.3,15.8 74.3,12.2 66.8,8.5" fill="#7e7a6a"/><polygon points="83.2,11.3 74.3,15.8 74.3,12.2 83.2,7.8" fill="#9c9886"/><polygon points="75.6,4.1 83.2,7.8 74.3,12.2 66.8,8.5" fill="#bcb8a6"/><polygon points="78.8,17.3 85.0,20.5 85.0,18.0 78.8,14.8" fill="#8a8676"/><polygon points="92.6,16.7 85.0,20.5 85.0,18.0 92.6,14.2" fill="#aca896"/><polygon points="86.3,11.0 92.6,14.2 85.0,18.0 78.8,14.8" fill="#d0ccba"/><polygon points="87.6,21.7 93.9,24.9 93.9,22.4 87.6,19.2" fill="#7e7a6a"/><polygon points="101.4,21.1 93.9,24.9 93.9,22.4 101.4,18.6" fill="#a09c8a"/><polygon points="95.1,15.5 101.4,18.6 93.9,22.4 87.6,19.2" fill="#c4c0ae"/><polygon points="98.3,26.5 103.3,29.0 103.3,27.0 98.3,24.5" fill="#7e7a6a"/><polygon points="109.6,25.8 103.3,29.0 103.3,27.0 109.6,23.8" fill="#9c9886"/><polygon points="104.6,21.3 109.6,23.8 103.3,27.0 98.3,24.5" fill="#bcb8a6"/><polygon points="3.8,30.9 11.3,34.7 11.3,32.2 3.8,28.4" fill="#6e6a5a"/><polygon points="22.7,29.0 11.3,34.7 11.3,32.2 22.7,26.5" fill="#8c8876"/><polygon points="15.1,22.7 22.7,26.5 11.3,32.2 3.8,28.4" fill="#b0ac9a"/><ellipse cx="75.0" cy="11.9" rx="4.5" ry="2.6" fill="#cfcfc8" stroke="#5a5a50" stroke-width=".7"/><g fill="none" stroke-linecap="round"><path d="M28.8 29.0L31.3 17.0M36.8 30.0L34.3 17.0M29.3 26.0L35.3 22.0M36.3 27.0L30.3 22.0M30.6 21.0L34.6 18.0M35.0 21.0L31.0 18.0" stroke="#e8e8e0" stroke-width="1.1"/><path d="M36.8 30.0L39.8 28.0L35.8 18.0" stroke="#5a564a" stroke-width="1"/><rect x="31.8" y="13.5" width="7.500" height="4" fill="#4a463c" stroke="none"/><rect x="30.3" y="14.5" width="4" height="3.200" fill="#c8c4b4" stroke="none"/><path d="M32.8 16.0L18.5 12.0" stroke="#f4f4ec" stroke-width="1.3"/><path d="M34.0 16.0L19.7 12.0" stroke="#6a665a" stroke-width=".7"/></g><g fill="none" stroke-linecap="round"><path d="M106.2 29.3L108.8 17.3M114.2 30.3L111.8 17.3M106.8 26.3L112.8 22.3M113.8 27.3L107.8 22.3M108.0 21.3L112.0 18.3M112.5 21.3L108.5 18.3" stroke="#e8e8e0" stroke-width="1.1"/><path d="M114.2 30.3L117.2 28.3L113.2 18.3" stroke="#5a564a" stroke-width="1"/><rect x="109.2" y="13.8" width="7.500" height="4" fill="#4a463c" stroke="none"/><rect x="107.8" y="14.8" width="4" height="3.200" fill="#c8c4b4" stroke="none"/><path d="M110.2 16.3L96.0 12.3" stroke="#f4f4ec" stroke-width="1.3"/><path d="M111.5 16.3L97.2 12.3" stroke="#6a665a" stroke-width=".7"/></g></g></svg>
<svg class="abs" style="left:1528px;top:395px" width="128" height="64" viewBox="-1 0 128 64" overflow="visible"><polygon points="0.0,31.5 63.0,0.0 126.0,31.5 63.0,63.0" fill="#c6c6be"/><polygon points="44.1,53.5 22.7,42.8 22.7,30.2 60.5,11.3 94.5,28.3" fill="#2e8fc2"/><g filter="url(#tex)"><polygon points="113.4,37.8 50.4,6.3 63.0,0.0 126.0,31.5" fill="#6d685c"/><polygon points="22.7,30.2 12.6,25.2 63.0,0.0 73.1,5.0" fill="#6d685c"/><polygon points="115.9,35.3 55.4,5.0 59.9,2.8 120.3,33.1" fill="#8b8474"/><polygon points="22.0,27.4 18.3,25.5 53.6,7.9 57.3,9.8" fill="#8b8474"/><polygon points="51.2,45.3 45.2,42.3 83.0,23.4 89.0,26.4" fill="#4a463c"/><polygon points="51.7,43.5 47.2,41.3 83.8,23.0 88.2,25.2" fill="#9d937f"/><polygon points="34.1,43.1 28.2,40.1 72.3,18.1 78.2,21.0" fill="#4a463c"/><polygon points="34.7,41.3 30.2,39.1 73.1,17.6 77.5,19.8" fill="#9d937f"/><polygon points="44.9,27.6 39.6,25.0 62.9,13.3 68.2,16.0" fill="#4a463c"/><polygon points="45.4,25.8 41.6,23.9 63.6,12.9 67.4,14.8" fill="#9d937f"/><polygon points="49.8,50.1 47.9,49.1 80.6,32.8 87.6,31.2" fill="#3a3a34"/><polygon points="55.4,5.7 62.4,9.1 62.4,7.1 55.4,3.7" fill="#6e6a5a"/><polygon points="69.9,5.4 62.4,9.1 62.4,7.1 69.9,3.4" fill="#8c8876"/><polygon points="63.0,-0.1 69.9,3.4 62.4,7.1 55.4,3.7" fill="#a8a492"/><polygon points="83.2,16.4 86.9,18.3 86.9,16.3 83.2,14.4" fill="#7e7a6a"/><polygon points="92.0,15.8 86.9,18.3 86.9,16.3 92.0,13.8" fill="#9c9886"/><polygon points="88.2,11.9 92.0,13.8 86.9,16.3 83.2,14.4" fill="#bcb8a6"/><polygon points="86.9,20.8 92.0,23.3 92.0,20.8 86.9,18.3" fill="#7e7a6a"/><polygon points="98.9,19.8 92.0,23.3 92.0,20.8 98.9,17.3" fill="#a09c8a"/><polygon points="93.9,14.8 98.9,17.3 92.0,20.8 86.9,18.3" fill="#c4c0ae"/><polygon points="93.2,23.9 98.3,26.5 98.3,24.0 93.2,21.4" fill="#8a8676"/><polygon points="105.2,23.0 98.3,26.5 98.3,24.0 105.2,20.5" fill="#aca896"/><polygon points="100.2,18.0 105.2,20.5 98.3,24.0 93.2,21.4" fill="#d0ccba"/><polygon points="100.8,31.5 106.5,34.3 106.5,30.8 100.8,28.0" fill="#7e7a6a"/><polygon points="117.8,28.7 106.5,34.3 106.5,30.8 117.8,25.2" fill="#9c9886"/><polygon points="112.1,22.3 117.8,25.2 106.5,30.8 100.8,28.0" fill="#bcb8a6"/><polygon points="107.1,34.7 113.4,37.8 113.4,33.8 107.1,30.7" fill="#8a8676"/><polygon points="124.7,32.1 113.4,37.8 113.4,33.8 124.7,28.1" fill="#a8a492"/><polygon points="118.4,25.0 124.7,28.1 113.4,33.8 107.1,30.7" fill="#c8c4b2"/><ellipse cx="102.7" cy="26.4" rx="4.5" ry="2.6" fill="#cfcfc8" stroke="#5a5a50" stroke-width=".7"/><g fill="none" stroke-linecap="round"><path d="M24.3 25.5L26.8 13.5M32.3 26.5L29.8 13.5M24.8 22.5L30.8 18.5M31.8 23.5L25.8 18.5M26.1 17.5L30.1 14.5M30.5 17.5L26.5 14.5" stroke="#e8e8e0" stroke-width="1.1"/><path d="M32.3 26.5L35.3 24.5L31.3 14.5" stroke="#5a564a" stroke-width="1"/><rect x="27.3" y="10.0" width="7.500" height="4" fill="#4a463c" stroke="none"/><rect x="25.8" y="11.0" width="4" height="3.200" fill="#c8c4b4" stroke="none"/><path d="M28.3 12.5L19.8 2.5" stroke="#f4f4ec" stroke-width="1.3"/><path d="M29.5 12.5L21.0 2.5" stroke="#6a665a" stroke-width=".7"/></g><g fill="none" stroke-linecap="round"><path d="M111.3 32.4L113.8 20.4M119.3 33.4L116.8 20.4M111.8 29.4L117.8 25.4M118.8 30.4L112.8 25.4M113.1 24.4L117.1 21.4M117.5 24.4L113.5 21.4" stroke="#e8e8e0" stroke-width="1.1"/><path d="M119.3 33.4L122.3 31.4L118.3 21.4" stroke="#5a564a" stroke-width="1"/><rect x="114.3" y="16.9" width="7.500" height="4" fill="#4a463c" stroke="none"/><rect x="112.8" y="17.9" width="4" height="3.200" fill="#c8c4b4" stroke="none"/><path d="M115.3 19.4L106.7 9.4" stroke="#f4f4ec" stroke-width="1.3"/><path d="M116.5 19.4L107.9 9.4" stroke="#6a665a" stroke-width=".7"/></g></g></svg>
<svg class="abs" style="left:1528px;top:459px" width="128" height="64" viewBox="-1 0 128 64" overflow="visible"><polygon points="0.0,31.5 63.0,0.0 126.0,31.5 63.0,63.0" fill="#c6c6be"/><g filter="url(#tex)"><polygon points="13.1,30.0 21.8,33.1 35.4,25.6 35.4,28.1 21.8,35.5 13.1,32.2" fill="#6e6a5a"/><polygon points="11.9,26.9 24.2,20.1 37.9,22.5 35.4,25.6 21.8,33.1 13.1,30.0" fill="#bab6a4"/><polygon points="16.8,25.6 28.0,20.1 29.4,21.0 18.3,26.7" fill="#d4d0c0"/><polygon points="23.6,35.5 30.4,36.1 39.1,30.6 39.1,33.1 30.7,38.4 23.6,37.6" fill="#6e6a5a"/><polygon points="20.5,31.8 34.1,24.4 39.7,26.9 39.1,30.6 30.4,36.1 23.6,35.5" fill="#aaa694"/><polygon points="57.7,10.8 69.4,16.3 76.2,12.6 76.2,15.7 69.4,18.8 57.7,14.1" fill="#7a7666"/><polygon points="57.7,10.8 65.7,7.0 76.2,12.6 69.4,16.3" fill="#c6c2b0"/><polygon points="66.3,14.5 69.4,13.2 69.4,17.6 66.3,16.3" fill="#2e2c26"/><g stroke="#8a4a20" stroke-width="1" fill="none"><path d="M56.4 23.8L71.3 23.8L74.0 34.7L58.9 34.9M61.4 24.4L59.5 34.7M66.3 24.4L63.9 34.3L68.8 25.6L72.5 33.7"/></g><polygon points="67.0,25.6 73.8,28.1 74.4,33.1 69.4,32.4" fill="#3a3028"/><g stroke="#7a7870" stroke-width="1.4" fill="none"><path d="M96.1 25.6l5.500 -2.750"/><path d="M102.3 22.5l5.500 -2.750"/><path d="M100.8 28.0l5.500 -2.750"/><path d="M107.0 24.9l5.500 -2.750"/><path d="M105.5 30.3l5.500 -2.750"/><path d="M111.7 27.2l5.500 -2.750"/><path d="M110.2 32.7l5.500 -2.750"/><path d="M116.4 29.6l5.500 -2.750"/></g><g stroke="#3e3e38" stroke-width=".8"><path d="M96.1 27.1l5.500 -2.750"/><path d="M102.3 24.0l5.500 -2.750"/><path d="M100.8 29.5l5.500 -2.750"/><path d="M107.0 26.4l5.500 -2.750"/><path d="M105.5 31.8l5.500 -2.750"/><path d="M111.7 28.7l5.500 -2.750"/><path d="M110.2 34.2l5.500 -2.750"/><path d="M116.4 31.1l5.500 -2.750"/></g><g stroke="#2c2c28" stroke-width="1" fill="none" stroke-linecap="round"><g stroke="#4a4a44" stroke-width="1.1" opacity=".9"><path d="M45.6 49.5L79.4 46.9M58.7 50.5L79.4 46.9"/><path d="M54.0 48.9L63.8 49.6"/><path d="M62.5 48.2L69.0 48.7"/><path d="M70.9 47.6L74.2 47.8"/></g><path d="M45.4 6.0L36.9 48.5" stroke-width="1.3"/><path d="M47.8 7.2L49.4 53.4" stroke-width="1.3"/><path d="M50.2 6.0L58.7 51.3" stroke-width="1.3"/><path d="M47.8 5.2L46.7 45.3" stroke-width="0.8"/><path d="M45.4 6.0L48.0 13.6M47.8 7.2L44.2 11.9M44.2 11.9L48.0 13.6" stroke-width=".9"/><path d="M47.8 7.2L51.4 12.3M50.2 6.0L48.0 13.6M48.0 13.6L51.4 12.3" stroke-width=".9"/><path d="M47.8 5.2L44.2 11.9M47.8 5.2L51.4 12.3" stroke-width=".6" stroke="#5a5a54"/><path d="M44.2 11.9L48.3 21.0M48.0 13.6L42.8 18.7M42.8 18.7L48.3 21.0" stroke-width=".9"/><path d="M48.0 13.6L52.7 19.5M51.4 12.3L48.3 21.0M48.3 21.0L52.7 19.5" stroke-width=".9"/><path d="M47.6 10.8L42.8 18.7M47.6 10.8L52.7 19.5" stroke-width=".6" stroke="#5a5a54"/><path d="M42.8 18.7L48.6 29.4M48.3 21.0L41.3 26.4M41.3 26.4L48.6 29.4" stroke-width=".9"/><path d="M48.3 21.0L54.2 27.7M52.7 19.5L48.6 29.4M48.6 29.4L54.2 27.7" stroke-width=".9"/><path d="M47.4 17.2L41.3 26.4M47.4 17.2L54.2 27.7" stroke-width=".6" stroke="#5a5a54"/><path d="M41.3 26.4L48.9 39.5M48.6 29.4L39.4 35.8M39.4 35.8L48.9 39.5" stroke-width=".9"/><path d="M48.6 29.4L56.1 37.7M54.2 27.7L48.9 39.5M48.9 39.5L56.1 37.7" stroke-width=".9"/><path d="M47.2 24.4L39.4 35.8M47.2 24.4L56.1 37.7" stroke-width=".6" stroke="#5a5a54"/><path d="M39.4 35.8L49.4 53.4M48.9 39.5L36.9 48.5M36.9 48.5L49.4 53.4" stroke-width=".9"/><path d="M48.9 39.5L58.7 51.3M56.1 37.7L49.4 53.4M49.4 53.4L58.7 51.3" stroke-width=".9"/><path d="M47.0 33.3L36.9 48.5M47.0 33.3L58.7 51.3" stroke-width=".6" stroke="#5a5a54"/><path d="M45.8 5.5h4M47.8 3.0v3" stroke-width="1.2"/></g><g stroke="#2c2c28" stroke-width="1" fill="none" stroke-linecap="round"><g stroke="#4a4a44" stroke-width="1.1" opacity=".9"><path d="M84.0 45.6L117.8 42.9M97.1 46.6L117.8 42.9"/><path d="M92.4 44.9L102.2 45.7"/><path d="M100.9 44.3L107.4 44.8"/><path d="M109.3 43.6L112.6 43.8"/></g><path d="M83.8 0.0L75.3 44.6" stroke-width="1.3"/><path d="M86.2 1.2L87.8 49.5" stroke-width="1.3"/><path d="M88.6 0.0L97.1 47.3" stroke-width="1.3"/><path d="M86.2 -0.7L85.1 41.3" stroke-width="0.8"/><path d="M83.8 0.0L86.4 8.0M86.2 1.2L82.6 6.2M82.6 6.2L86.4 8.0" stroke-width=".9"/><path d="M86.2 1.2L89.7 6.6M88.6 0.0L86.4 8.0M86.4 8.0L89.7 6.6" stroke-width=".9"/><path d="M86.2 -0.7L82.6 6.2M86.2 -0.7L89.7 6.6" stroke-width=".6" stroke="#5a5a54"/><path d="M82.6 6.2L86.6 15.7M86.4 8.0L81.2 13.4M81.2 13.4L86.6 15.7" stroke-width=".9"/><path d="M86.4 8.0L91.1 14.2M89.7 6.6L86.6 15.7M86.6 15.7L91.1 14.2" stroke-width=".9"/><path d="M86.0 5.2L81.2 13.4M86.0 5.2L91.1 14.2" stroke-width=".6" stroke="#5a5a54"/><path d="M81.2 13.4L86.9 24.4M86.6 15.7L79.7 21.4M79.7 21.4L86.9 24.4" stroke-width=".9"/><path d="M86.6 15.7L92.6 22.7M91.1 14.2L86.9 24.4M86.9 24.4L92.6 22.7" stroke-width=".9"/><path d="M85.8 11.9L79.7 21.4M85.8 11.9L92.6 22.7" stroke-width=".6" stroke="#5a5a54"/><path d="M79.7 21.4L87.3 35.0M86.9 24.4L77.8 31.2M77.8 31.2L87.3 35.0" stroke-width=".9"/><path d="M86.9 24.4L94.5 33.1M92.6 22.7L87.3 35.0M87.3 35.0L94.5 33.1" stroke-width=".9"/><path d="M85.6 19.5L77.8 31.2M85.6 19.5L94.5 33.1" stroke-width=".6" stroke="#5a5a54"/><path d="M77.8 31.2L87.8 49.5M87.3 35.0L75.3 44.6M75.3 44.6L87.8 49.5" stroke-width=".9"/><path d="M87.3 35.0L97.1 47.3M94.5 33.1L87.8 49.5M87.8 49.5L97.1 47.3" stroke-width=".9"/><path d="M85.4 28.7L75.3 44.6M85.4 28.7L97.1 47.3" stroke-width=".6" stroke="#5a5a54"/><path d="M84.2 -0.5h4M86.2 -3.0v3" stroke-width="1.2"/></g></g></svg>
<svg class="abs" style="left:1528px;top:523px" width="128" height="64" viewBox="-1 0 128 64" overflow="visible"><polygon points="0.0,31.5 63.0,0.0 126.0,31.5 63.0,63.0" fill="#c6c6be"/><g filter="url(#tex)"><polygon points="39.1,15.5 45.9,19.5 52.7,15.5 52.7,20.4 46.5,24.4 39.1,20.4" fill="#7a7666"/><polygon points="39.1,15.5 46.5,11.8 52.7,15.5 45.9,19.5" fill="#c0bcaa"/><polygon points="47.2,19.2 51.5,17.0 51.5,21.7 47.2,23.5" fill="#3a382e"/><polygon points="65.7,14.2 71.9,18.0 78.1,14.2 78.1,19.2 72.5,22.5 65.7,19.2" fill="#7a7666"/><polygon points="65.7,14.2 72.5,10.5 78.1,14.2 71.9,18.0" fill="#c0bcaa"/><polygon points="72.8,17.7 77.2,15.5 77.2,19.8 72.8,21.9" fill="#3a382e"/><g stroke="#7a7870" stroke-width="1.4" fill="none"><path d="M96.1 24.8l5.500 -2.750"/><path d="M102.3 21.7l5.500 -2.750"/><path d="M100.8 27.1l5.500 -2.750"/><path d="M107.0 24.0l5.500 -2.750"/><path d="M105.5 29.5l5.500 -2.750"/><path d="M111.7 26.4l5.500 -2.750"/><path d="M110.2 31.8l5.500 -2.750"/><path d="M116.4 28.7l5.500 -2.750"/></g><g stroke="#3e3e38" stroke-width=".8"><path d="M96.1 26.3l5.500 -2.750"/><path d="M102.3 23.2l5.500 -2.750"/><path d="M100.8 28.6l5.500 -2.750"/><path d="M107.0 25.5l5.500 -2.750"/><path d="M105.5 31.0l5.500 -2.750"/><path d="M111.7 27.9l5.500 -2.750"/><path d="M110.2 33.3l5.500 -2.750"/><path d="M116.4 30.2l5.500 -2.750"/></g><g stroke="#2c2c28" stroke-width="1" fill="none" stroke-linecap="round"><g stroke="#4a4a44" stroke-width="1.1" opacity=".9"><path d="M28.9 43.5L62.7 40.8M41.9 44.5L62.7 40.8"/><path d="M37.3 42.8L47.1 43.6"/><path d="M45.8 42.2L52.3 42.7"/><path d="M54.2 41.5L57.5 41.8"/></g><path d="M28.7 -0.5L20.2 42.5" stroke-width="1.3"/><path d="M31.1 0.7L32.7 47.4" stroke-width="1.3"/><path d="M33.4 -0.5L41.9 45.2" stroke-width="1.3"/><path d="M31.1 -1.2L30.0 39.2" stroke-width="0.8"/><path d="M28.7 -0.5L31.3 7.3M31.1 0.7L27.5 5.5M27.5 5.5L31.3 7.3" stroke-width=".9"/><path d="M31.1 0.7L34.6 5.9M33.4 -0.5L31.3 7.3M31.3 7.3L34.6 5.9" stroke-width=".9"/><path d="M31.1 -1.2L27.5 5.5M31.1 -1.2L34.6 5.9" stroke-width=".6" stroke="#5a5a54"/><path d="M27.5 5.5L31.5 14.7M31.3 7.3L26.1 12.4M26.1 12.4L31.5 14.7" stroke-width=".9"/><path d="M31.3 7.3L36.0 13.2M34.6 5.9L31.5 14.7M31.5 14.7L36.0 13.2" stroke-width=".9"/><path d="M30.9 4.5L26.1 12.4M30.9 4.5L36.0 13.2" stroke-width=".6" stroke="#5a5a54"/><path d="M26.1 12.4L31.8 23.1M31.5 14.7L24.6 20.1M24.6 20.1L31.8 23.1" stroke-width=".9"/><path d="M31.5 14.7L37.5 21.5M36.0 13.2L31.8 23.1M31.8 23.1L37.5 21.5" stroke-width=".9"/><path d="M30.7 10.9L24.6 20.1M30.7 10.9L37.5 21.5" stroke-width=".6" stroke="#5a5a54"/><path d="M24.6 20.1L32.2 33.4M31.8 23.1L22.7 29.6M22.7 29.6L32.2 33.4" stroke-width=".9"/><path d="M31.8 23.1L39.4 31.5M37.5 21.5L32.2 33.4M32.2 33.4L39.4 31.5" stroke-width=".9"/><path d="M30.5 18.2L22.7 29.6M30.5 18.2L39.4 31.5" stroke-width=".6" stroke="#5a5a54"/><path d="M22.7 29.6L32.7 47.4M32.2 33.4L20.2 42.5M20.2 42.5L32.7 47.4" stroke-width=".9"/><path d="M32.2 33.4L41.9 45.2M39.4 31.5L32.7 47.4M32.7 47.4L41.9 45.2" stroke-width=".9"/><path d="M30.3 27.1L20.2 42.5M30.3 27.1L41.9 45.2" stroke-width=".6" stroke="#5a5a54"/><path d="M29.1 -1.0h4M31.1 -3.5v3" stroke-width="1.2"/></g><g stroke="#2c2c28" stroke-width="1" fill="none" stroke-linecap="round"><g stroke="#4a4a44" stroke-width="1.1" opacity=".9"><path d="M83.4 44.0L117.1 41.3M96.4 45.0L117.1 41.3"/><path d="M91.8 43.3L101.6 44.1"/><path d="M100.2 42.7L106.8 43.2"/><path d="M108.7 42.0L112.0 42.3"/></g><path d="M83.1 -0.5L74.6 43.0" stroke-width="1.3"/><path d="M85.5 0.7L87.2 47.9" stroke-width="1.3"/><path d="M87.9 -0.5L96.4 45.7" stroke-width="1.3"/><path d="M85.5 -1.2L84.4 39.7" stroke-width="0.8"/><path d="M83.1 -0.5L85.8 7.3M85.5 0.7L81.9 5.6M81.9 5.6L85.8 7.3" stroke-width=".9"/><path d="M85.5 0.7L89.1 6.0M87.9 -0.5L85.8 7.3M85.8 7.3L89.1 6.0" stroke-width=".9"/><path d="M85.5 -1.2L81.9 5.6M85.5 -1.2L89.1 6.0" stroke-width=".6" stroke="#5a5a54"/><path d="M81.9 5.6L86.0 14.9M85.8 7.3L80.6 12.6M80.6 12.6L86.0 14.9" stroke-width=".9"/><path d="M85.8 7.3L90.5 13.4M89.1 6.0L86.0 14.9M86.0 14.9L90.5 13.4" stroke-width=".9"/><path d="M85.4 4.5L80.6 12.6M85.4 4.5L90.5 13.4" stroke-width=".6" stroke="#5a5a54"/><path d="M80.6 12.6L86.3 23.4M86.0 14.9L79.1 20.4M79.1 20.4L86.3 23.4" stroke-width=".9"/><path d="M86.0 14.9L92.0 21.7M90.5 13.4L86.3 23.4M86.3 23.4L92.0 21.7" stroke-width=".9"/><path d="M85.2 11.1L79.1 20.4M85.2 11.1L92.0 21.7" stroke-width=".6" stroke="#5a5a54"/><path d="M79.1 20.4L86.7 33.7M86.3 23.4L77.2 29.9M77.2 29.9L86.7 33.7" stroke-width=".9"/><path d="M86.3 23.4L93.9 31.9M92.0 21.7L86.7 33.7M86.7 33.7L93.9 31.9" stroke-width=".9"/><path d="M85.0 18.4L77.2 29.9M85.0 18.4L93.9 31.9" stroke-width=".6" stroke="#5a5a54"/><path d="M77.2 29.9L87.2 47.9M86.7 33.7L74.6 43.0M74.6 43.0L87.2 47.9" stroke-width=".9"/><path d="M86.7 33.7L96.4 45.7M93.9 31.9L87.2 47.9M87.2 47.9L96.4 45.7" stroke-width=".9"/><path d="M84.8 27.4L74.6 43.0M84.8 27.4L96.4 45.7" stroke-width=".6" stroke="#5a5a54"/><path d="M83.5 -1.0h4M85.5 -3.5v3" stroke-width="1.2"/></g><g stroke="#2c2c28" stroke-width="1" fill="none" stroke-linecap="round"><g stroke="#4a4a44" stroke-width="1.1" opacity=".9"><path d="M58.0 59.6L91.8 56.9M71.0 60.6L91.8 56.9"/><path d="M66.4 58.9L76.2 59.7"/><path d="M74.9 58.3L81.4 58.8"/><path d="M83.3 57.6L86.6 57.9"/></g><path d="M57.8 12.5L49.3 58.6" stroke-width="1.3"/><path d="M60.2 13.7L61.8 63.5" stroke-width="1.3"/><path d="M62.5 12.5L71.0 61.3" stroke-width="1.3"/><path d="M60.2 11.8L59.1 55.3" stroke-width="0.8"/><path d="M57.8 12.5L60.4 20.7M60.2 13.7L56.6 19.0M56.6 19.0L60.4 20.7" stroke-width=".9"/><path d="M60.2 13.7L63.7 19.4M62.5 12.5L60.4 20.7M60.4 20.7L63.7 19.4" stroke-width=".9"/><path d="M60.2 11.8L56.6 19.0M60.2 11.8L63.7 19.4" stroke-width=".6" stroke="#5a5a54"/><path d="M56.6 19.0L60.6 28.7M60.4 20.7L55.2 26.3M55.2 26.3L60.6 28.7" stroke-width=".9"/><path d="M60.4 20.7L65.1 27.2M63.7 19.4L60.6 28.7M60.6 28.7L65.1 27.2" stroke-width=".9"/><path d="M60.0 17.9L55.2 26.3M60.0 17.9L65.1 27.2" stroke-width=".6" stroke="#5a5a54"/><path d="M55.2 26.3L60.9 37.6M60.6 28.7L53.7 34.6M53.7 34.6L60.9 37.6" stroke-width=".9"/><path d="M60.6 28.7L66.6 35.9M65.1 27.2L60.9 37.6M60.9 37.6L66.6 35.9" stroke-width=".9"/><path d="M59.8 24.9L53.7 34.6M59.8 24.9L66.6 35.9" stroke-width=".6" stroke="#5a5a54"/><path d="M53.7 34.6L61.3 48.6M60.9 37.6L51.8 44.8M51.8 44.8L61.3 48.6" stroke-width=".9"/><path d="M60.9 37.6L68.5 46.7M66.6 35.9L61.3 48.6M61.3 48.6L68.5 46.7" stroke-width=".9"/><path d="M59.6 32.7L51.8 44.8M59.6 32.7L68.5 46.7" stroke-width=".6" stroke="#5a5a54"/><path d="M51.8 44.8L61.8 63.5M61.3 48.6L49.3 58.6M49.3 58.6L61.8 63.5" stroke-width=".9"/><path d="M61.3 48.6L71.0 61.3M68.5 46.7L61.8 63.5M61.8 63.5L71.0 61.3" stroke-width=".9"/><path d="M59.4 42.3L49.3 58.6M59.4 42.3L71.0 61.3" stroke-width=".6" stroke="#5a5a54"/><path d="M58.2 12.0h4M60.2 9.5v3" stroke-width="1.2"/></g></g></svg>
<svg class="abs" style="left:1528px;top:587px" width="128" height="64" viewBox="-1 0 128 64" overflow="visible"><polygon points="0.0,31.5 63.0,0.0 126.0,31.5 63.0,63.0" fill="#c6c6be"/><g filter="url(#tex)"><polygon points="36.6,21.9 51.5,11.4 61.4,10.8 71.3,16.3 83.7,10.8 96.1,16.3 104.7,25.0 99.8,30.0 83.7,31.2 66.3,30.0 51.5,28.7" fill="#8e5c32"/><polygon points="36.6,21.9 51.5,11.4 58.9,12.4 62.6,18.8 61.4,28.1 51.5,28.7" fill="#b89868"/><polygon points="71.3,16.3 83.7,10.8 96.1,16.3 104.7,25.0 99.8,30.0 83.7,31.2 77.5,24.4" fill="#5a3418"/><polygon points="52.1,10.8 61.4,10.4 71.3,16.3 66.3,20.1 58.9,13.9" fill="#4a2a14"/><polygon points="73.8,17.6 91.1,17.6 98.5,23.8 76.2,23.1" fill="#8e5c32"/><polygon points="23.6,23.8 29.8,19.8 49.9,29.3 45.9,35.2" fill="#ada59d"/><polygon points="45.9,35.2 49.9,29.3 52.4,31.8 48.0,36.8" fill="#a06244"/><polygon points="23.6,23.8 45.9,35.2 48.0,36.8 23.6,25.6" fill="#86492f"/><polygon points="14.3,29.3 20.5,24.1 41.2,34.9 36.6,40.7" fill="#ada59d"/><polygon points="14.3,29.3 36.6,40.7 36.9,42.6 14.3,32.7" fill="#86492f"/><polygon points="36.6,40.7 41.2,34.9 42.6,37.6 38.1,42.3" fill="#a06244"/><polygon points="36.6,36.1 39.7,37.6 39.7,41.1 36.9,39.9" fill="#3a2418"/><polygon points="82.4,34.9 96.1,27.9 102.5,30.6 88.0,38.3" fill="#ada59d"/><polygon points="82.4,34.9 88.0,38.3 88.0,40.7 82.4,37.6" fill="#86492f"/><polygon points="88.0,38.3 102.5,30.6 102.5,33.3 88.0,40.7" fill="#a06244"/><polygon points="89.3,39.2 103.5,31.6 109.9,34.3 95.4,42.0" fill="#ada59d"/><polygon points="89.3,39.2 95.4,42.0 95.4,44.4 89.3,42.0" fill="#86492f"/><polygon points="95.4,42.0 109.9,34.3 109.9,37.0 95.4,44.4" fill="#a06244"/><g stroke="#34342e" stroke-width=".9" fill="none"><path d="M58.5 21.3L56.5 38.0M60.5 21.3L62.5 38.0M58.0 25.3L61.5 29.3L57.0 33.3L62.5 38.0M61.0 25.3L57.5 29.3L62.0 33.3L56.5 38.0"/></g><path d="M56.5 34.0L56.5 38.0M62.5 34.0L62.5 38.0" stroke="#d8d8d0" stroke-width=".8"/><g stroke="#34342e" stroke-width=".9" fill="none"><path d="M71.5 21.3L69.5 38.0M73.5 21.3L75.5 38.0M71.0 25.3L74.5 29.3L70.0 33.3L75.5 38.0M74.0 25.3L70.5 29.3L75.0 33.3L69.5 38.0"/></g><path d="M69.5 34.0L69.5 38.0M75.5 34.0L75.5 38.0" stroke="#d8d8d0" stroke-width=".8"/><polygon points="49.0,39.2 58.3,40.7 59.5,43.0 49.6,41.7" fill="#3a342c"/><polygon points="49.6,38.9 57.7,40.2 57.9,41.0 49.6,39.7" fill="#8a8270"/><polygon points="62.6,41.7 71.9,43.2 73.2,45.4 63.2,44.2" fill="#3a342c"/><polygon points="63.2,41.3 71.3,42.7 71.5,43.5 63.2,42.2" fill="#8a8270"/><polygon points="77.2,42.3 86.5,43.8 87.8,46.1 77.9,44.8" fill="#3a342c"/><polygon points="77.9,42.0 85.9,43.3 86.2,44.1 77.9,42.8" fill="#8a8270"/><g stroke="#3a3a34" stroke-width="1" fill="none"><path d="M38.5 47.5l-2 4.500"/><path d="M39.7 46.1l4 1"/><path d="M42.8 48.0l-2 4.500"/><path d="M44.1 46.5l4 1"/><path d="M47.2 48.5l-2 4.500"/><path d="M48.4 47.0l4 1"/><path d="M51.5 49.0l-2 4.500"/><path d="M52.7 47.5l4 1"/><path d="M55.8 49.5l-2 4.500"/><path d="M57.1 48.0l4 1"/></g><polygon points="64.5,52.2 71.3,47.7 79.6,53.5 72.5,57.4" fill="#ada59d"/><polygon points="64.5,52.2 72.5,57.4 72.5,59.3 64.5,55.6" fill="#86492f"/><polygon points="72.5,57.4 79.6,53.5 80.8,56.6 72.5,59.3" fill="#a06244"/><polygon points="74.4,56.2 77.5,54.7 78.1,57.2 75.0,58.2" fill="#3a2418"/></g></svg>
<svg class="abs" style="left:1528px;top:651px" width="128" height="64" viewBox="-1 0 128 64" overflow="visible"><polygon points="0.0,31.5 63.0,0.0 126.0,31.5 63.0,63.0" fill="#c6c6be"/><g filter="url(#tex)"><polygon points="36.6,21.9 51.5,11.4 61.4,10.8 71.3,16.3 83.7,10.8 96.1,16.3 104.7,25.0 99.8,30.0 83.7,31.2 66.3,30.0 51.5,28.7" fill="#787876"/><polygon points="36.6,21.9 51.5,11.4 58.9,12.4 62.6,18.8 61.4,28.1 51.5,28.7" fill="#a4a4a0"/><polygon points="71.3,16.3 83.7,10.8 96.1,16.3 104.7,25.0 99.8,30.0 83.7,31.2 77.5,24.4" fill="#4c4c4a"/><polygon points="52.1,10.8 61.4,10.4 71.3,16.3 66.3,20.1 58.9,13.9" fill="#3a3a38"/><polygon points="73.8,17.6 91.1,17.6 98.5,23.8 76.2,23.1" fill="#787876"/><polygon points="23.6,23.8 29.8,19.8 49.9,29.3 45.9,35.2" fill="#ada59d"/><polygon points="45.9,35.2 49.9,29.3 52.4,31.8 48.0,36.8" fill="#a06244"/><polygon points="23.6,23.8 45.9,35.2 48.0,36.8 23.6,25.6" fill="#86492f"/><polygon points="14.3,29.3 20.5,24.1 41.2,34.9 36.6,40.7" fill="#ada59d"/><polygon points="14.3,29.3 36.6,40.7 36.9,42.6 14.3,32.7" fill="#86492f"/><polygon points="36.6,40.7 41.2,34.9 42.6,37.6 38.1,42.3" fill="#a06244"/><polygon points="36.6,36.1 39.7,37.6 39.7,41.1 36.9,39.9" fill="#3a2418"/><polygon points="82.4,34.9 96.1,27.9 102.5,30.6 88.0,38.3" fill="#ada59d"/><polygon points="82.4,34.9 88.0,38.3 88.0,40.7 82.4,37.6" fill="#86492f"/><polygon points="88.0,38.3 102.5,30.6 102.5,33.3 88.0,40.7" fill="#a06244"/><polygon points="89.3,39.2 103.5,31.6 109.9,34.3 95.4,42.0" fill="#ada59d"/><polygon points="89.3,39.2 95.4,42.0 95.4,44.4 89.3,42.0" fill="#86492f"/><polygon points="95.4,42.0 109.9,34.3 109.9,37.0 95.4,44.4" fill="#a06244"/><g stroke="#34342e" stroke-width=".9" fill="none"><path d="M58.5 21.3L56.5 38.0M60.5 21.3L62.5 38.0M58.0 25.3L61.5 29.3L57.0 33.3L62.5 38.0M61.0 25.3L57.5 29.3L62.0 33.3L56.5 38.0"/></g><path d="M56.5 34.0L56.5 38.0M62.5 34.0L62.5 38.0" stroke="#d8d8d0" stroke-width=".8"/><g stroke="#34342e" stroke-width=".9" fill="none"><path d="M71.5 21.3L69.5 38.0M73.5 21.3L75.5 38.0M71.0 25.3L74.5 29.3L70.0 33.3L75.5 38.0M74.0 25.3L70.5 29.3L75.0 33.3L69.5 38.0"/></g><path d="M69.5 34.0L69.5 38.0M75.5 34.0L75.5 38.0" stroke="#d8d8d0" stroke-width=".8"/><polygon points="49.0,39.2 58.3,40.7 59.5,43.0 49.6,41.7" fill="#3a342c"/><polygon points="49.6,38.9 57.7,40.2 57.9,41.0 49.6,39.7" fill="#8a8270"/><polygon points="62.6,41.7 71.9,43.2 73.2,45.4 63.2,44.2" fill="#3a342c"/><polygon points="63.2,41.3 71.3,42.7 71.5,43.5 63.2,42.2" fill="#8a8270"/><polygon points="77.2,42.3 86.5,43.8 87.8,46.1 77.9,44.8" fill="#3a342c"/><polygon points="77.9,42.0 85.9,43.3 86.2,44.1 77.9,42.8" fill="#8a8270"/><g stroke="#3a3a34" stroke-width="1" fill="none"><path d="M38.5 47.5l-2 4.500"/><path d="M39.7 46.1l4 1"/><path d="M42.8 48.0l-2 4.500"/><path d="M44.1 46.5l4 1"/><path d="M47.2 48.5l-2 4.500"/><path d="M48.4 47.0l4 1"/><path d="M51.5 49.0l-2 4.500"/><path d="M52.7 47.5l4 1"/><path d="M55.8 49.5l-2 4.500"/><path d="M57.1 48.0l4 1"/></g><polygon points="64.5,52.2 71.3,47.7 79.6,53.5 72.5,57.4" fill="#ada59d"/><polygon points="64.5,52.2 72.5,57.4 72.5,59.3 64.5,55.6" fill="#86492f"/><polygon points="72.5,57.4 79.6,53.5 80.8,56.6 72.5,59.3" fill="#a06244"/><polygon points="74.4,56.2 77.5,54.7 78.1,57.2 75.0,58.2" fill="#3a2418"/></g></svg>
<svg class="abs" style="left:1528px;top:715px" width="128" height="64" viewBox="-1 0 128 64" overflow="visible"><polygon points="0.0,31.5 63.0,0.0 126.0,31.5 63.0,63.0" fill="#c6c6be"/><g filter="url(#tex)"><polygon points="11.2,34.3 16.8,32.7 52.1,50.4 52.1,54.1 46.5,53.7 28.0,44.8" fill="url(#dith)"/><polygon points="51.5,27.5 61.4,25.3 70.1,30.0 61.4,35.2 51.5,41.7" fill="#b3b0a2"/><polygon points="61.4,24.4 66.3,22.5 76.2,28.1 71.3,30.9" fill="url(#dith)"/><ellipse cx="20.5" cy="25.6" rx="4.5" ry="7.7" fill="#464525"/><ellipse cx="19.5" cy="23.9" rx="2.8" ry="4.8" fill="#6a693a"/><ellipse cx="21.9" cy="28.3" rx="2.0" ry="3.1" fill="#3a3421"/><polygon points="40.3,15.1 51.5,20.1 51.5,27.2 40.3,21.0" fill="#c3aa7c"/><polygon points="51.5,20.1 64.9,14.5 64.9,22.8 52.7,27.2" fill="#ddd0b4"/><polygon points="40.3,15.3 45.0,7.4 51.7,19.8" fill="#bfa274"/><polygon points="45.0,7.4 58.9,2.5 65.1,14.1 51.7,19.8" fill="#4b3528"/><polygon points="49.0,10.8 58.9,6.7 60.8,10.1 50.9,14.5" fill="#5c4434"/><polygon points="43.1,4.9 45.5,4.9 45.5,9.2 43.1,9.2" fill="#b8a888"/><polygon points="58.3,-0.4 60.2,-0.4 60.2,3.3 58.3,3.3" fill="#b8a888"/><rect x="54.7" y="21.8" width="0.9" height="1.6" fill="#2a2620"/><rect x="57.2" y="20.7" width="0.9" height="1.6" fill="#2a2620"/><rect x="59.7" y="19.6" width="0.9" height="1.6" fill="#2a2620"/><rect x="62.2" y="18.6" width="0.9" height="1.6" fill="#2a2620"/><rect x="42.6" y="18.7" width="0.9" height="1.6" fill="#4a4034"/><rect x="45.5" y="20.0" width="0.9" height="1.6" fill="#4a4034"/><rect x="48.4" y="21.3" width="0.9" height="1.6" fill="#4a4034"/><polygon points="65.4,17.6 77.5,24.4 77.5,29.0 65.4,22.8" fill="#d8d0bc"/><polygon points="65.4,13.2 74.0,8.3 95.1,18.8 89.6,30.2 77.5,24.4 67.0,18.2" fill="#3b2f31"/><polygon points="71.3,11.4 76.2,9.5 93.6,19.4 91.1,23.8" fill="#4a3c3c"/><rect x="67.7" y="20.5" width="0.9" height="1.6" fill="#2a2620"/><rect x="70.0" y="21.7" width="0.9" height="1.6" fill="#2a2620"/><rect x="72.3" y="23.0" width="0.9" height="1.6" fill="#2a2620"/><rect x="74.6" y="24.2" width="0.9" height="1.6" fill="#2a2620"/><polygon points="90.5,29.3 99.5,35.2 100.8,37.1 91.1,32.2" fill="#b0a488"/><polygon points="99.5,35.2 105.0,31.4 105.0,36.4 100.8,37.1" fill="#d4ccb4"/><polygon points="90.5,28.7 96.1,24.8 104.0,30.0 99.5,35.4" fill="#4a3a40"/><ellipse cx="103.5" cy="19.4" rx="7.2" ry="5.9" fill="#3a381e"/><ellipse cx="101.9" cy="18.1" rx="4.5" ry="3.7" fill="#56552e"/><ellipse cx="105.6" cy="21.5" rx="3.2" ry="2.4" fill="#312a1a"/><ellipse cx="109.1" cy="25.3" rx="6.4" ry="5.7" fill="#36331a"/><ellipse cx="107.6" cy="24.0" rx="4.0" ry="3.5" fill="#4d4c29"/><ellipse cx="111.0" cy="27.2" rx="2.9" ry="2.3" fill="#2d2717"/><polygon points="24.9,27.5 34.1,30.6 45.9,36.1 45.9,45.8 34.1,39.6 24.9,33.9" fill="#e8e2d2"/><polygon points="45.9,36.1 52.0,28.7 52.0,40.1 46.5,45.8" fill="#b4b0a4"/><polygon points="25.7,25.6 32.9,20.1 46.5,21.9 52.0,28.5 45.9,35.9 34.1,30.2" fill="#38465a"/><polygon points="34.1,23.5 38.5,21.5 49.0,29.3 45.5,34.9" fill="#4a5c74"/><polygon points="32.9,20.1 35.4,24.4 34.1,30.2 30.4,28.1" fill="#2c3848"/><rect x="27.8" y="31.4" width="0.9" height="1.6" fill="#3a3a38"/><rect x="30.8" y="32.9" width="0.9" height="1.6" fill="#3a3a38"/><rect x="33.7" y="34.4" width="0.9" height="1.6" fill="#3a3a38"/><rect x="36.7" y="35.9" width="0.9" height="1.6" fill="#3a3a38"/><rect x="39.7" y="37.4" width="0.9" height="1.6" fill="#3a3a38"/><rect x="42.7" y="38.9" width="0.9" height="1.6" fill="#3a3a38"/><rect x="27.8" y="29.5" width="0.8" height="1.2" fill="#55554f"/><rect x="30.8" y="30.9" width="0.8" height="1.2" fill="#55554f"/><rect x="33.8" y="32.3" width="0.8" height="1.2" fill="#55554f"/><rect x="36.8" y="33.8" width="0.8" height="1.2" fill="#55554f"/><rect x="39.8" y="35.2" width="0.8" height="1.2" fill="#55554f"/><rect x="42.8" y="36.7" width="0.8" height="1.2" fill="#55554f"/><rect x="47.8" y="38.9" width="0.9" height="1.6" fill="#3a3a38"/><rect x="50.0" y="36.1" width="0.9" height="1.6" fill="#3a3a38"/><polygon points="28.9,15.7 30.4,15.7 30.4,20.7 28.9,20.7" fill="#c8c0b0"/><polygon points="50.2,46.1 55.2,51.0 55.2,54.4 50.2,50.0" fill="#b4946a"/><polygon points="55.2,51.0 66.3,45.8 90.1,35.2 90.1,41.3 66.3,51.9 55.2,54.4" fill="#cdb892"/><polygon points="51.5,41.7 61.4,34.9 81.2,27.5 90.4,33.1 83.7,38.9 66.3,46.1 55.2,51.3" fill="#3f2a20"/><polygon points="61.4,34.9 81.2,27.5 84.3,30.9 64.5,39.6" fill="#5a3e2c"/><polygon points="68.0,38.4 69.4,36.1 70.9,37.6 69.9,39.1" fill="#c9a27a"/><polygon points="74.8,35.7 76.2,33.4 77.7,34.9 76.7,36.4" fill="#c9a27a"/><polygon points="81.0,32.8 82.4,30.6 83.9,32.1 82.9,33.5" fill="#c9a27a"/><rect x="58.6" y="50.6" width="0.9" height="1.6" fill="#4a3a2c"/><rect x="62.6" y="48.8" width="0.9" height="1.6" fill="#4a3a2c"/><rect x="66.7" y="47.1" width="0.9" height="1.6" fill="#4a3a2c"/><rect x="70.7" y="45.4" width="0.9" height="1.6" fill="#4a3a2c"/><rect x="74.7" y="43.6" width="0.9" height="1.6" fill="#4a3a2c"/><rect x="78.7" y="41.9" width="0.9" height="1.6" fill="#4a3a2c"/><rect x="82.8" y="40.2" width="0.9" height="1.6" fill="#4a3a2c"/><rect x="86.8" y="38.4" width="0.9" height="1.6" fill="#4a3a2c"/><polygon points="83.7,41.7 90.1,38.6 90.1,42.6 85.5,44.6" fill="url(#dith)"/><polygon points="92.3,35.2 96.1,33.7 100.0,36.1 95.1,38.4" fill="url(#dith)"/></g></svg>
<svg class="abs" style="left:1528px;top:779px" width="128" height="64" viewBox="-1 0 128 64" overflow="visible"><polygon points="0.0,31.5 63.0,0.0 126.0,31.5 63.0,63.0" fill="#c6c6be"/><g filter="url(#tex)"><polygon points="9.4,30.3 14.3,28.9 46.5,46.2 51.5,47.1 50.2,49.8 44.1,49.8 28.0,41.5" fill="url(#dith)"/><polygon points="61.4,47.7 71.3,52.6 96.1,44.0 106.2,37.8 106.2,40.5 73.8,54.7 63.9,51.0" fill="url(#dith)"/><polygon points="51.5,26.6 63.9,20.4 71.3,24.2 63.9,31.8 55.2,34.3" fill="#b8b4a4"/><polygon points="63.9,21.7 68.2,19.2 81.5,26.6 77.5,30.6" fill="url(#dith)"/><ellipse cx="19.9" cy="24.2" rx="4.5" ry="7.7" fill="#585e2f"/><ellipse cx="18.9" cy="22.5" rx="2.8" ry="4.8" fill="#7a7f45"/><ellipse cx="21.2" cy="26.8" rx="2.0" ry="3.1" fill="#48462a"/><polygon points="45.9,24.2 70.3,12.4 70.3,17.7 49.0,28.1" fill="#c4ac84"/><polygon points="34.1,20.4 40.3,14.2 65.7,2.5 70.3,12.0 55.2,18.8 46.5,24.4" fill="#4a3626"/><polygon points="44.1,15.5 65.7,5.6 68.2,10.5 47.8,20.4" fill="#5e4632"/><polygon points="48.8,16.5 50.2,14.0 51.7,15.7 50.7,17.2" fill="#d0b08a"/><polygon points="55.6,13.4 57.1,10.9 58.5,12.6 57.6,14.1" fill="#d0b08a"/><polygon points="61.8,10.3 63.2,7.8 64.7,9.5 63.7,11.0" fill="#d0b08a"/><polygon points="39.7,8.7 41.3,8.7 41.3,14.2 39.7,14.2" fill="#c8c0b0"/><polygon points="64.9,-0.6 66.3,-0.6 66.3,3.4 64.9,3.4" fill="#c8c0b0"/><polygon points="70.7,13.6 81.2,17.3 92.3,23.2 92.3,33.1 81.2,27.5 70.7,21.9" fill="#eae6da"/><polygon points="92.3,23.2 98.8,14.9 102.5,19.2 102.5,29.4 93.0,33.1" fill="#c4c0b4"/><polygon points="70.7,12.4 76.2,7.4 86.2,6.2 98.8,14.2 92.3,23.2 81.2,17.0" fill="#44546a"/><polygon points="82.4,9.3 86.2,6.8 97.9,14.2 93.0,21.7" fill="#566a84"/><polygon points="75.0,3.1 76.6,3.1 76.6,7.6 75.0,7.6" fill="#ccc4b4"/><polygon points="83.7,2.5 85.3,2.5 85.3,6.9 83.7,6.9" fill="#ccc4b4"/><polygon points="97.9,9.3 99.5,9.3 99.5,13.8 97.9,13.8" fill="#ccc4b4"/><rect x="73.6" y="18.6" width="0.9" height="1.6" fill="#3a3a38"/><rect x="76.7" y="20.2" width="0.9" height="1.6" fill="#3a3a38"/><rect x="79.8" y="21.8" width="0.9" height="1.6" fill="#3a3a38"/><rect x="82.9" y="23.3" width="0.9" height="1.6" fill="#3a3a38"/><rect x="86.0" y="24.9" width="0.9" height="1.6" fill="#3a3a38"/><rect x="89.1" y="26.5" width="0.9" height="1.6" fill="#3a3a38"/><rect x="73.7" y="16.3" width="0.8" height="1.2" fill="#55554f"/><rect x="76.8" y="17.8" width="0.8" height="1.2" fill="#55554f"/><rect x="79.9" y="19.4" width="0.8" height="1.2" fill="#55554f"/><rect x="83.0" y="20.9" width="0.8" height="1.2" fill="#55554f"/><rect x="86.1" y="22.5" width="0.8" height="1.2" fill="#55554f"/><rect x="89.2" y="24.0" width="0.8" height="1.2" fill="#55554f"/><rect x="95.0" y="26.3" width="0.9" height="1.6" fill="#3a3a38"/><rect x="97.5" y="24.9" width="0.9" height="1.6" fill="#3a3a38"/><rect x="99.9" y="23.5" width="0.9" height="1.6" fill="#3a3a38"/><polygon points="22.4,29.1 45.9,40.3 45.9,46.7 22.4,35.5" fill="#dccfb2"/><polygon points="45.9,40.3 51.7,31.6 51.7,38.0 46.5,46.1" fill="#b8a888"/><polygon points="22.4,28.5 30.4,20.2 51.7,31.0 45.9,40.5" fill="#43363c"/><polygon points="30.4,20.2 34.1,21.7 49.0,29.7 46.5,34.1" fill="#54464c"/><polygon points="27.3,14.2 28.9,14.2 28.9,20.4 27.3,20.4" fill="#c8c0b0"/><rect x="25.8" y="33.6" width="0.9" height="1.6" fill="#4a4034"/><rect x="29.9" y="35.5" width="0.9" height="1.6" fill="#4a4034"/><rect x="34.0" y="37.5" width="0.9" height="1.6" fill="#4a4034"/><rect x="38.1" y="39.4" width="0.9" height="1.6" fill="#4a4034"/><rect x="42.2" y="41.3" width="0.9" height="1.6" fill="#4a4034"/><polygon points="47.2,41.7 56.4,46.4 56.4,49.2 47.2,45.5" fill="#d0c4a8"/><polygon points="56.4,46.4 61.0,41.2 61.0,44.6 57.1,49.2" fill="#a89878"/><polygon points="47.2,41.5 52.7,36.3 61.0,40.9 56.4,46.7" fill="#4a3c44"/><ellipse cx="70.1" cy="34.1" rx="6.4" ry="7.2" fill="#4a4e26"/><ellipse cx="68.6" cy="32.5" rx="4.0" ry="4.5" fill="#616733"/><ellipse cx="72.0" cy="36.6" rx="2.9" ry="2.9" fill="#3d3a22"/><ellipse cx="77.5" cy="41.7" rx="8.9" ry="6.4" fill="#424722"/><ellipse cx="75.5" cy="40.3" rx="5.5" ry="4.0" fill="#565c2d"/><ellipse cx="80.2" cy="44.0" rx="4.0" ry="2.6" fill="#37351e"/><ellipse cx="89.3" cy="39.3" rx="7.7" ry="7.2" fill="#545b2e"/><ellipse cx="87.6" cy="37.7" rx="4.8" ry="4.5" fill="#6c7136"/><ellipse cx="91.6" cy="41.8" rx="3.5" ry="2.9" fill="#454429"/><ellipse cx="100.4" cy="35.5" rx="5.2" ry="6.4" fill="#484e24"/><ellipse cx="99.3" cy="34.1" rx="3.2" ry="4.0" fill="#5b612e"/><ellipse cx="102.0" cy="37.8" rx="2.3" ry="2.6" fill="#3c3a20"/><ellipse cx="107.2" cy="24.4" rx="5.2" ry="8.9" fill="#545b2e"/><ellipse cx="106.1" cy="22.4" rx="3.2" ry="5.5" fill="#6f733f"/><ellipse cx="108.8" cy="27.5" rx="2.3" ry="3.6" fill="#454429"/></g></svg>
<svg class="abs" style="left:1528px;top:843px" width="128" height="64" viewBox="-1 0 128 64" overflow="visible"><polygon points="0.0,31.5 63.0,0.0 126.0,31.5 63.0,63.0" fill="#c6c6be"/><g filter="url(#tex)"><polygon points="2.0,33.7 8.1,30.0 26.1,41.1 23.6,45.1 16.8,42.0" fill="url(#dith)"/><polygon points="29.2,41.1 44.1,36.1 46.5,43.8 37.9,48.8" fill="#a8a8a0"/><polygon points="62.6,25.6 71.3,23.5 81.5,27.5 66.3,32.1 60.2,35.2" fill="#a8a8a0"/><polygon points="66.3,20.1 70.1,17.6 77.7,23.8 73.8,27.1" fill="url(#dith)"/><ellipse cx="69.4" cy="4.0" rx="4.5" ry="5.7" fill="#3c4022"/><ellipse cx="68.5" cy="2.7" rx="2.8" ry="3.5" fill="#50562d"/><ellipse cx="70.8" cy="5.9" rx="2.0" ry="2.3" fill="#33301e"/><polygon points="71.3,11.4 83.7,15.7 96.1,21.3 96.1,30.2 83.7,25.9 71.3,20.3" fill="#e2dac2"/><polygon points="96.1,21.3 103.7,13.9 105.0,18.8 97.5,29.0" fill="#c8b890"/><polygon points="72.5,9.5 78.7,2.5 91.1,6.4 101.3,12.6 96.1,20.9 83.7,15.1" fill="#6a4038"/><polygon points="83.7,6.4 91.1,6.7 101.0,12.9 96.7,19.4" fill="#6e625c"/><polygon points="77.2,10.9 78.7,8.7 80.2,10.6 79.0,11.9" fill="#d8c0a0"/><polygon points="84.1,13.6 85.5,11.4 87.0,13.4 85.8,14.6" fill="#d8c0a0"/><polygon points="90.2,16.5 91.7,14.2 93.2,16.2 92.0,17.5" fill="#d8c0a0"/><polygon points="76.2,-1.0 77.7,-1.0 77.7,2.7 76.2,2.7" fill="#ccc4b4"/><polygon points="101.3,8.3 103.0,8.3 103.0,13.6 101.3,13.6" fill="#ccc4b4"/><rect x="74.3" y="16.2" width="0.9" height="1.6" fill="#3a3630"/><rect x="77.3" y="17.5" width="0.9" height="1.6" fill="#3a3630"/><rect x="80.4" y="18.9" width="0.9" height="1.6" fill="#3a3630"/><rect x="83.5" y="20.2" width="0.9" height="1.6" fill="#3a3630"/><rect x="86.6" y="21.5" width="0.9" height="1.6" fill="#3a3630"/><rect x="89.7" y="22.8" width="0.9" height="1.6" fill="#3a3630"/><rect x="92.8" y="24.2" width="0.9" height="1.6" fill="#3a3630"/><polygon points="58.9,17.6 68.4,12.0 68.4,20.3 60.2,24.0" fill="#c49c6a"/><polygon points="53.3,10.1 63.9,4.9 68.4,11.4 58.9,17.8" fill="#6a4a38"/><polygon points="10.0,28.7 16.8,36.1 26.7,32.4 44.1,25.6 44.1,33.9 28.0,40.1 25.5,43.8 11.9,35.2" fill="#ac8a5c"/><polygon points="10.0,28.7 36.6,17.6 44.3,24.4 28.0,32.4 16.8,36.4" fill="#5b4434"/><polygon points="21.8,23.8 36.6,17.6 40.3,21.3 24.9,28.1" fill="#6e5444"/><rect x="20.2" y="35.0" width="1.0" height="2.2" fill="#3a2a1c"/><rect x="24.2" y="33.7" width="1.0" height="2.2" fill="#3a2a1c"/><rect x="28.2" y="32.3" width="1.0" height="2.2" fill="#3a2a1c"/><rect x="32.3" y="31.0" width="1.0" height="2.2" fill="#3a2a1c"/><rect x="36.3" y="29.6" width="1.0" height="2.2" fill="#3a2a1c"/><rect x="40.3" y="28.3" width="1.0" height="2.2" fill="#3a2a1c"/><polygon points="35.4,1.5 39.1,-2.2 53.0,-2.2 53.5,10.8 44.3,17.6 36.0,13.9" fill="#5a3420"/><polygon points="44.3,17.6 53.5,10.8 53.5,-2.2 46.5,-2.2 44.7,4.0" fill="#7a4a2c"/><polygon points="49.0,-10.2 39.0,-5.7 35.4,1.7 44.7,4.6 54.0,0.9 51.5,-5.7" fill="#3a261c"/><polygon points="49.0,-10.2 51.5,-5.7 54.0,0.9 44.7,4.6 46.5,-4.7" fill="#55382a"/><polygon points="37.9,4.0 40.3,3.3 40.3,8.3 37.9,8.9" fill="#2a1810"/><polygon points="47.2,4.0 50.2,2.7 50.2,7.7 47.2,8.9" fill="#2a1810"/><polygon points="44.7,28.1 50.2,24.4 55.4,20.1 59.2,30.0 56.7,36.4 45.9,37.6" fill="#9c7c4c"/><polygon points="42.8,22.5 49.0,14.2 55.4,19.4 50.2,25.3" fill="#2a2420"/><polygon points="51.5,28.7 54.3,27.7 54.3,34.5 51.5,35.4" fill="#201810"/><polygon points="95.4,23.8 102.3,31.4 102.3,41.3 97.3,36.4" fill="#eae6da"/><polygon points="102.3,31.4 113.6,27.7 113.6,37.0 102.3,41.3" fill="#d2cec2"/><polygon points="95.4,23.1 99.8,19.2 109.1,17.3 113.6,27.5 102.3,31.4" fill="#566274"/><polygon points="108.2,12.6 109.7,12.6 109.7,17.8 108.2,17.8" fill="#ccc4b4"/><rect x="104.4" y="35.6" width="0.9" height="1.6" fill="#3a3a38"/><rect x="106.7" y="34.8" width="0.9" height="1.6" fill="#3a3a38"/><rect x="108.9" y="34.0" width="0.9" height="1.6" fill="#3a3a38"/><rect x="111.2" y="33.3" width="0.9" height="1.6" fill="#3a3a38"/><rect x="104.5" y="33.3" width="0.8" height="1.2" fill="#55554f"/><rect x="106.7" y="32.4" width="0.8" height="1.2" fill="#55554f"/><rect x="109.0" y="31.6" width="0.8" height="1.2" fill="#55554f"/><rect x="111.2" y="30.8" width="0.8" height="1.2" fill="#55554f"/><ellipse cx="114.6" cy="22.5" rx="4.5" ry="5.2" fill="#2f321a"/><ellipse cx="113.7" cy="21.4" rx="2.8" ry="3.2" fill="#3f4424"/><ellipse cx="116.0" cy="24.3" rx="2.0" ry="2.1" fill="#292517"/><ellipse cx="118.1" cy="27.7" rx="5.7" ry="7.7" fill="#292b16"/><ellipse cx="116.9" cy="26.0" rx="3.5" ry="4.8" fill="#383d20"/><ellipse cx="119.8" cy="30.4" rx="2.6" ry="3.1" fill="#242013"/><ellipse cx="91.1" cy="35.5" rx="5.2" ry="7.7" fill="#3d4222"/><ellipse cx="90.0" cy="33.8" rx="3.2" ry="4.8" fill="#51572e"/><ellipse cx="92.7" cy="38.2" rx="2.3" ry="3.1" fill="#34311e"/><polygon points="53.3,41.7 59.5,35.9 64.5,46.7 64.5,53.7 53.3,48.8" fill="#a88c5c"/><polygon points="64.5,46.7 86.4,36.1 86.4,45.7 64.5,56.2" fill="#e2d6ba"/><polygon points="59.5,35.9 66.3,30.9 82.4,26.6 86.4,36.1 64.5,46.9" fill="#6a5a48"/><rect x="67.5" y="49.4" width="0.9" height="1.6" fill="#3a3630"/><rect x="70.7" y="47.9" width="0.9" height="1.6" fill="#3a3630"/><rect x="73.9" y="46.3" width="0.9" height="1.6" fill="#3a3630"/><rect x="77.1" y="44.8" width="0.9" height="1.6" fill="#3a3630"/><rect x="80.3" y="43.2" width="0.9" height="1.6" fill="#3a3630"/><rect x="83.5" y="41.7" width="0.9" height="1.6" fill="#3a3630"/><rect x="67.5" y="46.9" width="0.8" height="1.2" fill="#5a5448"/><rect x="70.7" y="45.3" width="0.8" height="1.2" fill="#5a5448"/><rect x="73.9" y="43.8" width="0.8" height="1.2" fill="#5a5448"/><rect x="77.1" y="42.2" width="0.8" height="1.2" fill="#5a5448"/><rect x="80.3" y="40.6" width="0.8" height="1.2" fill="#5a5448"/><rect x="83.5" y="39.1" width="0.8" height="1.2" fill="#5a5448"/><ellipse cx="47.8" cy="43.6" rx="4.5" ry="5.7" fill="#252713"/><ellipse cx="46.8" cy="42.3" rx="2.8" ry="3.5" fill="#363b1e"/><ellipse cx="49.1" cy="45.6" rx="2.0" ry="2.3" fill="#211d11"/><ellipse cx="45.5" cy="51.0" rx="3.7" ry="4.5" fill="#2d3019"/><ellipse cx="44.7" cy="50.0" rx="2.3" ry="2.8" fill="#414722"/><ellipse cx="46.7" cy="52.6" rx="1.7" ry="1.8" fill="#272416"/><polygon points="38.5,51.6 42.2,49.8 49.3,54.7 46.5,57.4" fill="url(#dith)"/><polygon points="50.2,51.0 56.4,53.5 62.6,51.6 62.6,55.6 56.4,57.2 50.2,54.4" fill="#d2c2a2"/><polygon points="50.2,48.5 56.4,46.4 62.9,51.0 56.4,53.7" fill="#6a5448"/><polygon points="87.4,39.9 94.8,36.1 99.8,39.9 94.8,42.3" fill="url(#dith)"/></g></svg>
<svg class="abs" style="left:1528px;top:907px" width="128" height="64" viewBox="-1 0 128 64" overflow="visible"><polygon points="0.0,31.5 63.0,0.0 126.0,31.5 63.0,63.0" fill="#c6c6be"/><g filter="url(#tex)"><polygon points="5.0,32.8 10.6,30.1 51.7,57.0 46.5,57.8 28.0,47.9" fill="url(#dith)"/><polygon points="52.7,26.6 61.4,23.3 71.5,27.3 66.3,33.1 58.9,36.8 51.5,33.1" fill="#a8a8a0"/><polygon points="62.6,21.7 70.1,17.7 76.5,26.6 71.3,29.4" fill="url(#dith)"/><ellipse cx="14.3" cy="26.6" rx="6.4" ry="8.2" fill="#1a1a0e"/><ellipse cx="12.9" cy="24.8" rx="4.0" ry="5.1" fill="#292c1a"/><ellipse cx="16.3" cy="29.5" rx="2.9" ry="3.3" fill="#18130c"/><polygon points="50.2,16.7 72.8,6.2 72.8,17.0 52.7,26.3 50.2,24.4" fill="#e6e2da"/><polygon points="37.9,15.5 45.9,7.8 50.5,16.7 49.0,24.4 42.8,21.9" fill="#7c7c7a"/><polygon points="45.9,7.4 51.5,3.5 68.2,-3.3 72.8,5.6 50.2,17.0" fill="#4a5064"/><polygon points="43.8,3.1 45.5,3.1 45.5,8.3 43.8,8.3" fill="#ccc4b4"/><polygon points="66.3,-6.8 68.2,-6.8 68.2,-2.2 66.3,-2.2" fill="#ccc4b4"/><rect x="53.8" y="20.1" width="0.9" height="1.6" fill="#3a3a38"/><rect x="56.9" y="18.7" width="0.9" height="1.6" fill="#3a3a38"/><rect x="60.0" y="17.2" width="0.9" height="1.6" fill="#3a3a38"/><rect x="63.1" y="15.7" width="0.9" height="1.6" fill="#3a3a38"/><rect x="66.2" y="14.2" width="0.9" height="1.6" fill="#3a3a38"/><rect x="69.3" y="12.7" width="0.9" height="1.6" fill="#3a3a38"/><rect x="53.9" y="17.6" width="0.8" height="1.2" fill="#55554f"/><rect x="57.0" y="16.1" width="0.8" height="1.2" fill="#55554f"/><rect x="60.1" y="14.6" width="0.8" height="1.2" fill="#55554f"/><rect x="63.2" y="13.2" width="0.8" height="1.2" fill="#55554f"/><rect x="66.3" y="11.7" width="0.8" height="1.2" fill="#55554f"/><rect x="69.3" y="10.2" width="0.8" height="1.2" fill="#55554f"/><ellipse cx="74.4" cy="5.6" rx="3.2" ry="5.7" fill="#252713"/><ellipse cx="73.7" cy="4.3" rx="2.0" ry="3.5" fill="#363b1e"/><ellipse cx="75.4" cy="7.6" rx="1.4" ry="2.3" fill="#211d11"/><polygon points="72.5,14.2 78.1,9.0 83.7,18.0 83.7,28.1 73.2,23.8" fill="#b8a070"/><polygon points="83.7,18.0 95.8,12.4 95.8,21.9 83.7,28.1" fill="#e2d6ba"/><polygon points="78.1,9.0 87.4,3.5 95.8,11.8 83.7,18.2" fill="#6a5444"/><polygon points="89.9,-0.6 91.7,-0.6 91.7,4.6 89.9,4.6" fill="#ccc4b4"/><rect x="75.3" y="20.3" width="0.9" height="1.6" fill="#4a3a20"/><rect x="78.0" y="21.6" width="0.9" height="1.6" fill="#4a3a20"/><rect x="80.6" y="22.9" width="0.9" height="1.6" fill="#4a3a20"/><rect x="85.7" y="22.1" width="0.9" height="1.6" fill="#3a3630"/><rect x="88.2" y="20.9" width="0.9" height="1.6" fill="#3a3630"/><rect x="90.7" y="19.7" width="0.9" height="1.6" fill="#3a3630"/><rect x="93.1" y="18.5" width="0.9" height="1.6" fill="#3a3630"/><polygon points="83.7,29.1 93.6,23.5 96.3,26.0 86.2,31.8" fill="url(#dith)"/><polygon points="96.1,26.0 102.3,31.8 102.3,43.0 97.9,39.3" fill="#eae6da"/><polygon points="102.3,31.8 114.3,27.9 114.3,37.4 102.3,43.0" fill="#d2cec2"/><polygon points="97.3,24.2 102.3,20.2 109.7,17.7 114.3,27.3 102.3,31.8" fill="#485668"/><polygon points="109.1,13.0 110.7,13.0 110.7,18.2 109.1,18.2" fill="#ccc4b4"/><rect x="104.5" y="35.9" width="0.9" height="1.6" fill="#3a3a38"/><rect x="106.9" y="35.1" width="0.9" height="1.6" fill="#3a3a38"/><rect x="109.3" y="34.2" width="0.9" height="1.6" fill="#3a3a38"/><rect x="111.7" y="33.3" width="0.9" height="1.6" fill="#3a3a38"/><rect x="104.5" y="33.6" width="0.8" height="1.2" fill="#55554f"/><rect x="107.0" y="32.8" width="0.8" height="1.2" fill="#55554f"/><rect x="109.4" y="31.9" width="0.8" height="1.2" fill="#55554f"/><rect x="111.8" y="31.0" width="0.8" height="1.2" fill="#55554f"/><ellipse cx="114.6" cy="20.4" rx="4.0" ry="4.5" fill="#222413"/><ellipse cx="113.8" cy="19.5" rx="2.5" ry="2.8" fill="#30341c"/><ellipse cx="115.8" cy="22.0" rx="1.8" ry="1.8" fill="#1f1b10"/><ellipse cx="118.6" cy="25.6" rx="6.4" ry="7.7" fill="#1a1a0e"/><ellipse cx="117.2" cy="24.0" rx="4.0" ry="4.8" fill="#292c1a"/><ellipse cx="120.5" cy="28.3" rx="2.9" ry="3.1" fill="#18130c"/><ellipse cx="93.0" cy="36.5" rx="6.4" ry="7.7" fill="#1e1f11"/><ellipse cx="91.5" cy="34.8" rx="4.0" ry="4.8" fill="#2f321d"/><ellipse cx="94.9" cy="39.2" rx="2.9" ry="3.1" fill="#1c170f"/><polygon points="93.6,42.7 101.0,40.3 102.5,43.6 96.1,45.5" fill="url(#dith)"/><polygon points="19.3,26.0 44.7,38.4 44.7,47.3 19.3,34.3" fill="#e2d6ba"/><polygon points="44.7,38.4 50.2,28.2 55.4,34.1 55.4,44.2 46.5,47.3" fill="#b8945e"/><polygon points="19.9,21.7 26.1,15.9 34.1,19.2 49.3,28.9 44.7,38.0 31.7,30.3" fill="#7a4a3a"/><polygon points="31.7,21.7 34.1,19.5 49.0,29.1 45.9,35.3" fill="#6a4c40"/><polygon points="23.4,23.7 24.9,21.4 26.3,23.4 25.1,24.7" fill="#d8c0a0"/><polygon points="29.6,26.8 31.1,24.5 32.5,26.5 31.3,27.7" fill="#d8c0a0"/><polygon points="35.8,30.1 37.2,27.9 38.7,29.9 37.5,31.1" fill="#d8c0a0"/><polygon points="24.0,11.2 25.5,11.2 25.5,16.7 24.0,16.7" fill="#ccc4b4"/><rect x="22.3" y="32.2" width="0.9" height="1.6" fill="#3a3630"/><rect x="25.5" y="33.7" width="0.9" height="1.6" fill="#3a3630"/><rect x="28.7" y="35.3" width="0.9" height="1.6" fill="#3a3630"/><rect x="31.8" y="36.8" width="0.9" height="1.6" fill="#3a3630"/><rect x="35.0" y="38.3" width="0.9" height="1.6" fill="#3a3630"/><rect x="38.2" y="39.9" width="0.9" height="1.6" fill="#3a3630"/><rect x="41.4" y="41.4" width="0.9" height="1.6" fill="#3a3630"/><rect x="22.3" y="29.5" width="0.8" height="1.2" fill="#5a5448"/><rect x="25.5" y="31.1" width="0.8" height="1.2" fill="#5a5448"/><rect x="28.7" y="32.6" width="0.8" height="1.2" fill="#5a5448"/><rect x="31.9" y="34.2" width="0.8" height="1.2" fill="#5a5448"/><rect x="35.1" y="35.8" width="0.8" height="1.2" fill="#5a5448"/><rect x="38.3" y="37.3" width="0.8" height="1.2" fill="#5a5448"/><rect x="41.4" y="38.9" width="0.8" height="1.2" fill="#5a5448"/><polygon points="54.6,42.7 60.8,37.3 65.7,45.2 65.7,56.0 55.2,51.0" fill="#aa9062"/><polygon points="65.7,45.2 87.0,35.5 87.0,45.5 65.7,56.0" fill="#e2d2b2"/><polygon points="60.8,37.5 66.3,32.6 83.7,27.0 87.0,35.3 65.7,45.5" fill="#6a4434"/><rect x="68.7" y="50.5" width="0.9" height="1.6" fill="#3a3630"/><rect x="71.8" y="49.0" width="0.9" height="1.6" fill="#3a3630"/><rect x="74.9" y="47.5" width="0.9" height="1.6" fill="#3a3630"/><rect x="78.0" y="45.9" width="0.9" height="1.6" fill="#3a3630"/><rect x="81.1" y="44.4" width="0.9" height="1.6" fill="#3a3630"/><rect x="84.2" y="42.9" width="0.9" height="1.6" fill="#3a3630"/><rect x="68.7" y="47.6" width="0.8" height="1.2" fill="#5a5448"/><rect x="71.8" y="46.1" width="0.8" height="1.2" fill="#5a5448"/><rect x="74.9" y="44.6" width="0.8" height="1.2" fill="#5a5448"/><rect x="78.0" y="43.1" width="0.8" height="1.2" fill="#5a5448"/><rect x="81.1" y="41.6" width="0.8" height="1.2" fill="#5a5448"/><rect x="84.2" y="40.1" width="0.8" height="1.2" fill="#5a5448"/><ellipse cx="48.4" cy="44.0" rx="5.2" ry="7.7" fill="#252713"/><ellipse cx="47.2" cy="42.3" rx="3.2" ry="4.8" fill="#363b1e"/><ellipse cx="49.9" cy="46.7" rx="2.3" ry="3.1" fill="#211d11"/><polygon points="51.5,50.8 57.7,53.5 62.6,50.8 64.5,56.0 57.7,57.2 51.5,54.7" fill="#dacaaa"/><polygon points="51.5,49.5 57.7,46.2 62.9,50.2 57.7,53.5" fill="#7a4a3a"/></g></svg>
<div class="sunk" style="left:3px;top:1029px;width:808px;height:18px"></div>
<div class="t" id="sb0" style="letter-spacing:-0.091px;left:5px;top:1032px">Left click to unselect, Right click for selection options</div>
<div class="sunk" style="left:813px;top:1029px;width:254px;height:18px"></div>
<div class="t" id="sb1" style="letter-spacing:-0.034px;left:816.4px;top:1032px">(135, 9) Land</div>
<div class="sunk" style="left:1069px;top:1029px;width:305px;height:18px"></div>
<div class="t" id="sb2" style="letter-spacing:-0.129px;left:1072.4px;top:1032px">Town (USA)</div>
<div class="sunk" style="left:1376px;top:1029px;width:301px;height:18px"></div>
<div class="t" id="sb3" style="letter-spacing:-0.135px;left:1378.8px;top:1032px">Dutch Harbor</div>
<svg class="abs" style="left:1663px;top:1033px" width="14" height="14"><g stroke-width="1" shape-rendering="crispEdges"><path d="M13 1L1 13" stroke="#fff"/><path d="M13 2L2 13M13 3L3 13" stroke="#808080"/><path d="M13 5L5 13" stroke="#fff"/><path d="M13 6L6 13M13 7L7 13" stroke="#808080"/><path d="M13 9L9 13" stroke="#fff"/><path d="M13 10L10 13M13 11L11 13" stroke="#808080"/></g></svg>
</body></html>
